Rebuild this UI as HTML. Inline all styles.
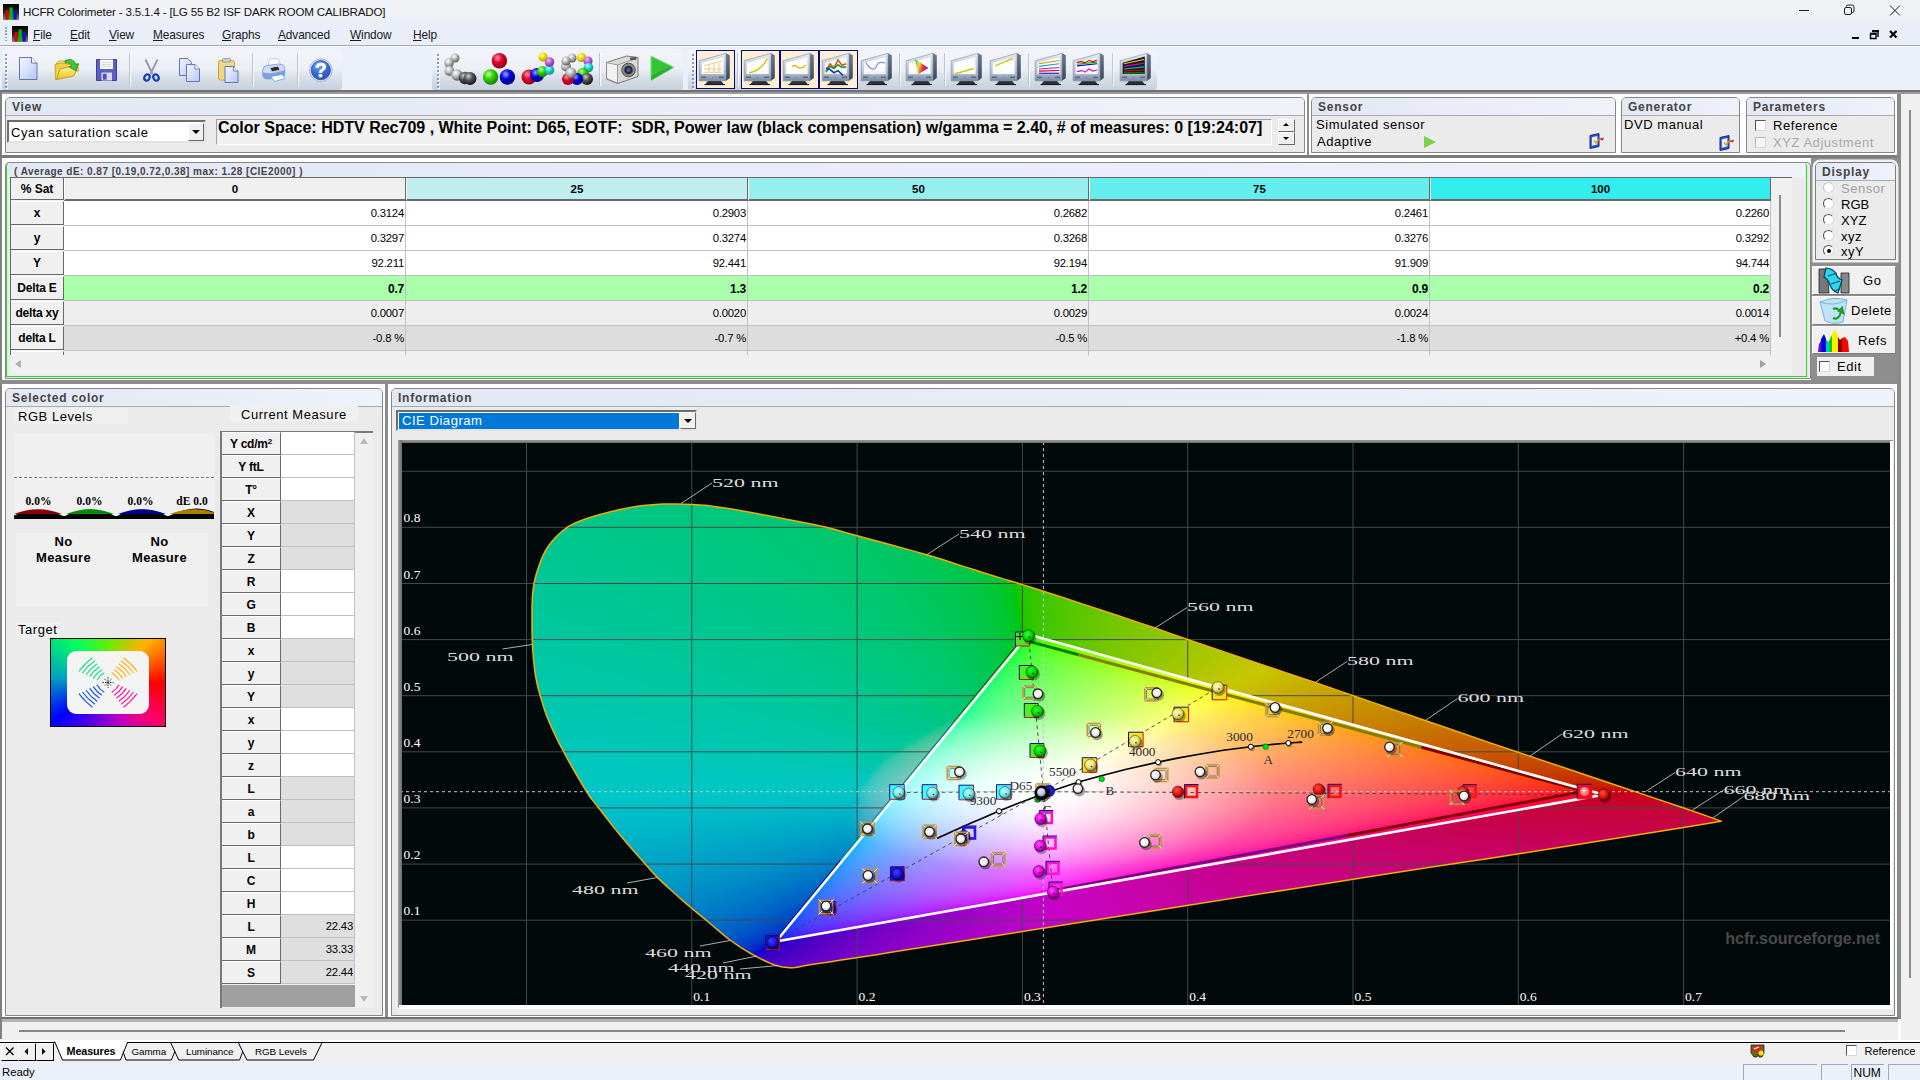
<!DOCTYPE html><html><head><meta charset="utf-8"><title>HCFR Colorimeter</title><style>
*{box-sizing:border-box;margin:0;padding:0}
html,body{width:1920px;height:1080px;overflow:hidden;background:#fff;font-family:"Liberation Sans",sans-serif;font-size:12px;color:#000}
.a{position:absolute}
.t{position:absolute;white-space:nowrap;line-height:1}
.pn{position:absolute;border:1px solid #868686;background:#ebebeb;border-radius:5px 5px 0 0;overflow:hidden}
.pn .h{position:absolute;left:0;top:0;right:0;background:linear-gradient(90deg,#e2e8f4,#eef2fb);border-bottom:1px solid #a9a9a9}
.pn .h span{position:absolute;left:6px;top:1.5px;font-weight:bold;font-size:12px;color:#444;letter-spacing:.75px;white-space:nowrap}
.b{font-weight:bold}
u{text-decoration:underline}

</style></head><body>
<div class="a" style="left:0;top:0;width:1920px;height:23px;background:linear-gradient(#f1f2f5 0,#f0f2f6 60%,#ebeff7 100%)"></div>
<svg class="a" style="left:3px;top:4px" width="16" height="16" viewBox="0 0 16 16"><defs><linearGradient id="ag3" x1="0" y1="0" x2="0" y2="1"><stop offset="0" stop-color="#000"/><stop offset=".5" stop-color="#222"/><stop offset="1" stop-color="#888"/></linearGradient></defs><rect width="16" height="16" fill="url(#ag3)"/><rect x="2.500" y="6" width="3.200" height="9.500" fill="#d00"/><rect x="6.500" y="3.500" width="3.200" height="12" fill="#0b0"/><rect x="10.500" y="6" width="3.200" height="9.500" fill="#11c"/></svg>
<div class="t" style="left:23px;top:5.600px;font-size:11.6px;letter-spacing:-.17px;color:#111">HCFR Colorimeter - 3.5.1.4 - [LG 55 B2 ISF DARK ROOM CALIBRADO]</div>
<svg class="a" style="left:1780px;top:0" width="140" height="23" viewBox="0 0 140 23"><g stroke="#222" stroke-width="1" fill="none"><path d="M19 10.5h10"/><rect x="64.5" y="7.5" width="7" height="7" rx="1.5"/><path d="M66.5 7.5v-1a1.5 1.5 0 0 1 1.5-1.5h4a2 2 0 0 1 2 2v4a1.5 1.5 0 0 1-1.5 1.5h-1"/><path d="M110 5.5l10 10M120 5.5l-10 10"/></g></svg>
<div class="a" style="left:0;top:23px;width:1920px;height:23px;background:#e9eef8;border-bottom:1px solid #a7abb3"></div>
<div class="a" style="left:0;top:46px;width:1920px;height:1px;background:#fbfcfe"></div>
<div class="a" style="left:5px;top:27.0px;width:2px;height:1.600px;background:#8fa3c8"></div>
<div class="a" style="left:5px;top:30.2px;width:2px;height:1.600px;background:#8fa3c8"></div>
<div class="a" style="left:5px;top:33.4px;width:2px;height:1.600px;background:#8fa3c8"></div>
<div class="a" style="left:5px;top:36.6px;width:2px;height:1.600px;background:#8fa3c8"></div>
<div class="a" style="left:5px;top:39.8px;width:2px;height:1.600px;background:#8fa3c8"></div>
<svg class="a" style="left:12px;top:26px" width="16" height="16" viewBox="0 0 16 16"><defs><linearGradient id="ag12" x1="0" y1="0" x2="0" y2="1"><stop offset="0" stop-color="#000"/><stop offset=".5" stop-color="#222"/><stop offset="1" stop-color="#888"/></linearGradient></defs><rect width="16" height="16" fill="url(#ag12)"/><rect x="2.500" y="6" width="3.200" height="9.500" fill="#d00"/><rect x="6.500" y="3.500" width="3.200" height="12" fill="#0b0"/><rect x="10.500" y="6" width="3.200" height="9.500" fill="#11c"/></svg>
<div class="t" style="left:33px;top:30px;font-size:11.9px;letter-spacing:-.12px;color:#1a1a1a"><u>F</u>ile</div>
<div class="t" style="left:70px;top:30px;font-size:11.9px;letter-spacing:-.12px;color:#1a1a1a"><u>E</u>dit</div>
<div class="t" style="left:109px;top:30px;font-size:11.9px;letter-spacing:-.12px;color:#1a1a1a"><u>V</u>iew</div>
<div class="t" style="left:153px;top:30px;font-size:11.9px;letter-spacing:-.12px;color:#1a1a1a"><u>M</u>easures</div>
<div class="t" style="left:222px;top:30px;font-size:11.9px;letter-spacing:-.12px;color:#1a1a1a"><u>G</u>raphs</div>
<div class="t" style="left:278px;top:30px;font-size:11.9px;letter-spacing:-.12px;color:#1a1a1a"><u>A</u>dvanced</div>
<div class="t" style="left:350px;top:30px;font-size:11.9px;letter-spacing:-.12px;color:#1a1a1a"><u>W</u>indow</div>
<div class="t" style="left:413px;top:30px;font-size:11.9px;letter-spacing:-.12px;color:#1a1a1a"><u>H</u>elp</div>
<svg class="a" style="left:1845px;top:25px" width="70" height="20" viewBox="0 0 70 20"><g fill="none" stroke="#000"><path d="M7 13h7" stroke-width="2"/><path d="M27.5 6.5h5.5v5.5M25.5 9v4.5h5.500v-4.500z" stroke-width="1.4"/><path d="M27 6h7" stroke-width="2"/><path d="M25 8.500h6.500" stroke-width="1.6"/><path d="M45 6l6.500 6.500M51.500 6l-6.500 6.500" stroke-width="2.2"/></g></svg>
<svg width="0" height="0" style="position:absolute"><defs><radialGradient id="sgy" cx=".38" cy=".32" r=".7"><stop offset="0" stop-color="#ffffff"/><stop offset=".45" stop-color="#bdbdbd"/><stop offset="1" stop-color="#5a5a5a"/></radialGradient><radialGradient id="sdk" cx=".38" cy=".32" r=".7"><stop offset="0" stop-color="#cfcfcf"/><stop offset=".45" stop-color="#555"/><stop offset="1" stop-color="#111"/></radialGradient><radialGradient id="srd" cx=".38" cy=".32" r=".7"><stop offset="0" stop-color="#ff9aa8"/><stop offset=".45" stop-color="#e0002a"/><stop offset="1" stop-color="#8a0016"/></radialGradient><radialGradient id="sgn" cx=".38" cy=".32" r=".7"><stop offset="0" stop-color="#c8ff9a"/><stop offset=".45" stop-color="#2fd000"/><stop offset="1" stop-color="#1a7a00"/></radialGradient><radialGradient id="sbl" cx=".38" cy=".32" r=".7"><stop offset="0" stop-color="#9aa8ff"/><stop offset=".45" stop-color="#0000e0"/><stop offset="1" stop-color="#00007a"/></radialGradient><radialGradient id="syl" cx=".38" cy=".32" r=".7"><stop offset="0" stop-color="#ffffc0"/><stop offset=".45" stop-color="#f0e000"/><stop offset="1" stop-color="#a89800"/></radialGradient><radialGradient id="spu" cx=".38" cy=".32" r=".7"><stop offset="0" stop-color="#f0c0ff"/><stop offset=".45" stop-color="#c060e0"/><stop offset="1" stop-color="#7a2a99"/></radialGradient><radialGradient id="scy" cx=".38" cy=".32" r=".7"><stop offset="0" stop-color="#c0ffff"/><stop offset=".45" stop-color="#20d8d8"/><stop offset="1" stop-color="#0a8a8a"/></radialGradient><linearGradient id="mf" x1="0" y1="0" x2="0" y2="1"><stop offset="0" stop-color="#e9eef6"/><stop offset=".75" stop-color="#aab8cc"/><stop offset="1" stop-color="#7888a2"/></linearGradient><linearGradient id="ms" x1="0" y1="0" x2="0" y2="1"><stop offset="0" stop-color="#6c7b92"/><stop offset="1" stop-color="#39455a"/></linearGradient><linearGradient id="tbg" x1="0" y1="0" x2="0" y2="1"><stop offset="0" stop-color="#f1f4fa"/><stop offset=".55" stop-color="#e3e8f1"/><stop offset="1" stop-color="#c3ccdb"/></linearGradient><linearGradient id="doc" x1="0" y1="0" x2="1" y2="1"><stop offset="0" stop-color="#f6f8ff"/><stop offset="1" stop-color="#b4c8f6"/></linearGradient><linearGradient id="fold" x1="0" y1="0" x2="0" y2="1"><stop offset="0" stop-color="#fff8b8"/><stop offset="1" stop-color="#f4c410"/></linearGradient><radialGradient id="hlp" cx=".4" cy=".25" r=".8"><stop offset="0" stop-color="#7ea6f2"/><stop offset=".55" stop-color="#356bd6"/><stop offset="1" stop-color="#2450b4"/></radialGradient></defs></svg>
<div class="a" style="left:0;top:47px;width:1920px;height:44px;background:#ebeff9"></div>
<div class="a" style="left:2px;top:49px;width:340px;height:41px;border-radius:4px 6px 3px 3px;background:linear-gradient(#f2f4f9 0,#eceff5 50%,#e0e5ed 60%,#c6cfdd 100%)"></div>
<div class="a" style="left:432px;top:49px;width:251px;height:41px;border-radius:4px 6px 3px 3px;background:linear-gradient(#f2f4f9 0,#eceff5 50%,#e0e5ed 60%,#c6cfdd 100%)"></div>
<div class="a" style="left:688px;top:49px;width:469px;height:41px;border-radius:4px 6px 3px 3px;background:linear-gradient(#f2f4f9 0,#eceff5 50%,#e0e5ed 60%,#c6cfdd 100%)"></div>
<div class="a" style="left:5px;top:53.5px;width:2px;height:2px;background:#7f9bcb;box-shadow:1px 1px 0 #fff"></div>
<div class="a" style="left:5px;top:57.5px;width:2px;height:2px;background:#7f9bcb;box-shadow:1px 1px 0 #fff"></div>
<div class="a" style="left:5px;top:61.5px;width:2px;height:2px;background:#7f9bcb;box-shadow:1px 1px 0 #fff"></div>
<div class="a" style="left:5px;top:65.5px;width:2px;height:2px;background:#7f9bcb;box-shadow:1px 1px 0 #fff"></div>
<div class="a" style="left:5px;top:69.5px;width:2px;height:2px;background:#7f9bcb;box-shadow:1px 1px 0 #fff"></div>
<div class="a" style="left:5px;top:73.5px;width:2px;height:2px;background:#7f9bcb;box-shadow:1px 1px 0 #fff"></div>
<div class="a" style="left:5px;top:77.5px;width:2px;height:2px;background:#7f9bcb;box-shadow:1px 1px 0 #fff"></div>
<div class="a" style="left:5px;top:81.5px;width:2px;height:2px;background:#7f9bcb;box-shadow:1px 1px 0 #fff"></div>
<div class="a" style="left:5px;top:85.5px;width:2px;height:2px;background:#7f9bcb;box-shadow:1px 1px 0 #fff"></div>
<div class="a" style="left:437px;top:53.5px;width:2px;height:2px;background:#7f9bcb;box-shadow:1px 1px 0 #fff"></div>
<div class="a" style="left:437px;top:57.5px;width:2px;height:2px;background:#7f9bcb;box-shadow:1px 1px 0 #fff"></div>
<div class="a" style="left:437px;top:61.5px;width:2px;height:2px;background:#7f9bcb;box-shadow:1px 1px 0 #fff"></div>
<div class="a" style="left:437px;top:65.5px;width:2px;height:2px;background:#7f9bcb;box-shadow:1px 1px 0 #fff"></div>
<div class="a" style="left:437px;top:69.5px;width:2px;height:2px;background:#7f9bcb;box-shadow:1px 1px 0 #fff"></div>
<div class="a" style="left:437px;top:73.5px;width:2px;height:2px;background:#7f9bcb;box-shadow:1px 1px 0 #fff"></div>
<div class="a" style="left:437px;top:77.5px;width:2px;height:2px;background:#7f9bcb;box-shadow:1px 1px 0 #fff"></div>
<div class="a" style="left:437px;top:81.5px;width:2px;height:2px;background:#7f9bcb;box-shadow:1px 1px 0 #fff"></div>
<div class="a" style="left:437px;top:85.5px;width:2px;height:2px;background:#7f9bcb;box-shadow:1px 1px 0 #fff"></div>
<div class="a" style="left:692px;top:53.5px;width:2px;height:2px;background:#7f9bcb;box-shadow:1px 1px 0 #fff"></div>
<div class="a" style="left:692px;top:57.5px;width:2px;height:2px;background:#7f9bcb;box-shadow:1px 1px 0 #fff"></div>
<div class="a" style="left:692px;top:61.5px;width:2px;height:2px;background:#7f9bcb;box-shadow:1px 1px 0 #fff"></div>
<div class="a" style="left:692px;top:65.5px;width:2px;height:2px;background:#7f9bcb;box-shadow:1px 1px 0 #fff"></div>
<div class="a" style="left:692px;top:69.5px;width:2px;height:2px;background:#7f9bcb;box-shadow:1px 1px 0 #fff"></div>
<div class="a" style="left:692px;top:73.5px;width:2px;height:2px;background:#7f9bcb;box-shadow:1px 1px 0 #fff"></div>
<div class="a" style="left:692px;top:77.5px;width:2px;height:2px;background:#7f9bcb;box-shadow:1px 1px 0 #fff"></div>
<div class="a" style="left:692px;top:81.5px;width:2px;height:2px;background:#7f9bcb;box-shadow:1px 1px 0 #fff"></div>
<div class="a" style="left:692px;top:85.5px;width:2px;height:2px;background:#7f9bcb;box-shadow:1px 1px 0 #fff"></div>
<div class="a" style="left:128.5px;top:53px;width:1px;height:33px;background:#bcc4d3"></div><div class="a" style="left:129.5px;top:53px;width:1px;height:33px;background:#fafbfe"></div>
<div class="a" style="left:251.5px;top:53px;width:1px;height:33px;background:#bcc4d3"></div><div class="a" style="left:252.5px;top:53px;width:1px;height:33px;background:#fafbfe"></div>
<div class="a" style="left:296.5px;top:53px;width:1px;height:33px;background:#bcc4d3"></div><div class="a" style="left:297.5px;top:53px;width:1px;height:33px;background:#fafbfe"></div>
<div class="a" style="left:598.5px;top:53px;width:1px;height:33px;background:#bcc4d3"></div><div class="a" style="left:599.5px;top:53px;width:1px;height:33px;background:#fafbfe"></div>
<div class="a" style="left:736.5px;top:53px;width:1px;height:33px;background:#bcc4d3"></div><div class="a" style="left:737.5px;top:53px;width:1px;height:33px;background:#fafbfe"></div>
<div class="a" style="left:898.5px;top:53px;width:1px;height:33px;background:#bcc4d3"></div><div class="a" style="left:899.5px;top:53px;width:1px;height:33px;background:#fafbfe"></div>
<div class="a" style="left:943.5px;top:53px;width:1px;height:33px;background:#bcc4d3"></div><div class="a" style="left:944.5px;top:53px;width:1px;height:33px;background:#fafbfe"></div>
<div class="a" style="left:1027.5px;top:53px;width:1px;height:33px;background:#bcc4d3"></div><div class="a" style="left:1028.5px;top:53px;width:1px;height:33px;background:#fafbfe"></div>
<div class="a" style="left:1112px;top:53px;width:1px;height:33px;background:#bcc4d3"></div><div class="a" style="left:1113px;top:53px;width:1px;height:33px;background:#fafbfe"></div>
<svg class="a" style="left:0;top:47px" width="345" height="44" viewBox="0 47 345 44"><path d="M19.500 57.500h12l5.500 5.500v16.500h-17.500z" fill="url(#doc)" stroke="#6672b8" stroke-width="1"/><path d="M31.500 57.500v5.500h5.500" fill="#fff" stroke="#6672b8" stroke-width="1"/><path d="M56 63.500l3-2.500h7l2 2h8v5z" fill="#fbe680" stroke="#c09a18" stroke-width=".8"/><path d="M55.500 79.500l-.5-15 6-1.500 16.500 2.500 1.200 5z" fill="#f3cf4a" stroke="#c09a18" stroke-width=".8"/><path d="M56.500 79.500l3.500-10.500 18.800-4.500-5 11.500z" fill="url(#fold)" stroke="#b08a10" stroke-width=".8"/><path d="M65 60.500q8-3.500 11 4l2.500-1-2.800 7.200-6.700-3.700 2.800-1q-2-4-6.800-3z" fill="#3cc43c" stroke="#1a8a1a" stroke-width=".7"/><path d="M96.500 59.500h20v21h-20z" fill="#5a5fc4" stroke="#3a3f9a" stroke-width="1"/><rect x="100" y="59.500" width="13" height="9.500" fill="#f8f8f8"/><path d="M101.500 62.500h10M101.500 64.500h10M101.500 66.500h10" stroke="#c4c4c8" stroke-width=".6"/><rect x="101.500" y="72.500" width="10.500" height="8" fill="#d8d8e2"/><rect x="103" y="73.800" width="3.600" height="5.800" fill="#4a4fb0"/><path d="M145.500 59.500l7 14.500M157.500 59.500l-7 14.500" stroke="#8f99ad" stroke-width="1.800" fill="none"/><ellipse cx="147" cy="77.500" rx="2.600" ry="3.200" fill="none" stroke="#1240b0" stroke-width="2.200" transform="rotate(25 147 77.500)"/><ellipse cx="156" cy="77.500" rx="2.600" ry="3.200" fill="none" stroke="#1240b0" stroke-width="2.200" transform="rotate(-25 156 77.500)"/><path d="M179.500 58.500h8l4 4v13h-12z" fill="url(#doc)" stroke="#6672b8" stroke-width="1"/><path d="M186.500 64.500h8.500l4.500 4.500v12.500h-13z" fill="url(#doc)" stroke="#6672b8" stroke-width="1"/><path d="M195 64.500v4.500h4.500" fill="#fff" stroke="#6672b8" stroke-width=".9"/><rect x="218.500" y="60.500" width="16" height="19.500" rx="2" fill="#f0d880" stroke="#c0a030" stroke-width="1"/><rect x="222.500" y="58.500" width="8" height="3.600" rx="1" fill="#c9ccd4" stroke="#8a8f9c" stroke-width=".8"/><path d="M225 66.500h8.500l4.500 4.500v11.500h-13z" fill="url(#doc)" stroke="#6672b8" stroke-width="1"/><path d="M233.500 66.500v4.500h4.500" fill="#fff" stroke="#6672b8" stroke-width=".9"/><path d="M268 66.500l1.500-7.500h9l2.500 7z" fill="#fdfeff" stroke="#b4c4e0" stroke-width=".8"/><path d="M262.800 70q0-3.500 4-4.500l12-1.500q5 0 6 3.500v6q0 3-3.500 3.500l-13 1.500q-5 0-5.500-3.500z" fill="#cfddf7" stroke="#7f9fdc" stroke-width=".9"/><path d="M262.800 72q5 3.500 22 -2v4.500q0 3-3.500 3.500l-13 1.500q-5 0-5.500-3.500z" fill="#7f9fdc"/><path d="M270.500 68l7.500-1.500 1.500 3.500-7.500 1.500z" fill="#2a2a2a"/><path d="M269.500 67.500l9-1.800 2 4.500-9 1.800z" fill="none" stroke="#c8c8c8" stroke-width=".8"/><path d="M271 76.500l11-2 3 4-10.500 3z" fill="#fff" stroke="#5ab4e8" stroke-width=".9"/><circle cx="320.800" cy="70.200" r="11.300" fill="#e8eefb" stroke="#9fb2d8" stroke-width="1"/><circle cx="320.800" cy="70.200" r="9.600" fill="url(#hlp)" stroke="#2a4fa6" stroke-width=".8"/><text x="320.800" y="77" font-family="Liberation Sans" font-weight="bold" font-size="19.500" fill="#fff" text-anchor="middle" stroke="#fff" stroke-width=".5">?</text></svg>
<svg class="a" style="left:430px;top:47px" width="260" height="44" viewBox="430 47 260 44"><circle cx="455" cy="58" r="4.5" fill="url(#sgy)"/><circle cx="449" cy="63" r="4.8" fill="url(#sgy)"/><circle cx="449.5" cy="71" r="5" fill="url(#sgy)"/><circle cx="457" cy="75" r="5.8" fill="url(#sgy)"/><circle cx="465" cy="78" r="6.2" fill="url(#sdk)"/><circle cx="470" cy="78.5" r="6.5" fill="url(#sdk)"/><circle cx="499.4" cy="60.7" r="7.7" fill="url(#srd)"/><circle cx="490.6" cy="77" r="7.7" fill="url(#sgn)"/><circle cx="507.4" cy="77" r="7.7" fill="url(#sbl)"/><circle cx="529" cy="77" r="7.5" fill="url(#srd)"/><circle cx="537" cy="75" r="7" fill="url(#sbl)"/><circle cx="542.5" cy="71.5" r="5.5" fill="url(#sgn)"/><circle cx="549.5" cy="70" r="4.8" fill="url(#scy)"/><circle cx="549.5" cy="62" r="4.8" fill="url(#spu)"/><circle cx="543" cy="57" r="4.6" fill="url(#syl)"/><circle cx="572" cy="58" r="4.5" fill="url(#sgy)"/><circle cx="581.5" cy="57.5" r="4.6" fill="url(#syl)"/><circle cx="588" cy="61" r="4.6" fill="url(#spu)"/><circle cx="588.5" cy="67.5" r="4.8" fill="url(#scy)"/><circle cx="583" cy="73.5" r="5.8" fill="url(#sgn)"/><circle cx="587" cy="79" r="6" fill="url(#sdk)"/><circle cx="577" cy="79" r="6" fill="url(#sbl)"/><circle cx="568" cy="79" r="6" fill="url(#srd)"/><circle cx="566" cy="66.5" r="5" fill="url(#sgy)"/><circle cx="571" cy="73" r="5.5" fill="url(#sgy)"/><circle cx="566" cy="61" r="4.6" fill="url(#sgy)"/><path d="M606.500 62.500l20-6.500 11.500 1.500v19l-20.500 7-11-4.500z" fill="#d9d9d9" stroke="#6a6a6a" stroke-width=".9"/><path d="M606.500 62.500l11 2.500v18l-11-4.500z" fill="#f1f1f1" stroke="#7a7a7a" stroke-width=".7"/><path d="M617.500 65l20.500-7.500" stroke="#7a7a7a" stroke-width=".7"/><rect x="630" y="57.200" width="6" height="3" fill="#555" transform="rotate(-8 633 58)"/><circle cx="628.500" cy="70" r="6.800" fill="#8a8a8a" stroke="#444" stroke-width=".9"/><circle cx="628.500" cy="70" r="4.300" fill="#2a2a2a"/><circle cx="628.500" cy="70" r="2" fill="#2a60d0"/><path d="M651 56l22.500 11-22.500 13.500z" fill="#35c435" stroke="#7fe07f" stroke-width="1"/><path d="M651 76l19-9 3.500 1-22.500 12.500z" fill="#1f9a1f" opacity=".55"/></svg>
<div class="a" style="left:696px;top:50px;width:39px;height:39px;background:#fdefd2;border:1px solid #0a0a80"></div>
<div class="a" style="left:741px;top:50px;width:39px;height:39px;background:#fdefd2;border:1px solid #0a0a80"></div>
<div class="a" style="left:780px;top:50px;width:39px;height:39px;background:#fdefd2;border:1px solid #0a0a80"></div>
<div class="a" style="left:819px;top:50px;width:39px;height:39px;background:#fdefd2;border:1px solid #0a0a80"></div>
<svg width="0" height="0" style="position:absolute"><defs><linearGradient id="tri" x1="0" y1="0" x2="1" y2=".3"><stop offset="0" stop-color="#00c030"/><stop offset=".35" stop-color="#e0e040" stop-opacity=".9"/><stop offset=".7" stop-color="#e03030"/><stop offset="1" stop-color="#c000c0"/></linearGradient></defs></svg>
<svg class="a" style="left:698px;top:50.8px" width="34" height="36" viewBox="0 0 34 34" preserveAspectRatio="none"><path d="M10 28h13l2.500 3.200h-18z" fill="#2c2f36"/><path d="M6.500 31.200h20.500v1h-20.500z" fill="#15171b"/><path d="M28 2.200l3.800 1.800v21.500l-3.800 2.700z" fill="url(#ms)"/><path d="M1.200 9.200L28 2.200v26H1.200z" fill="url(#mf)" stroke="#7d8ba3" stroke-width=".6"/><path d="M3.600 11L25.800 5.200v16.600H3.600z" fill="#fdfdfd" stroke="#c9d0dc" stroke-width=".5"/><path d="M3 24.800h5M21 24.800h5" stroke="#5d6a80" stroke-width="1.400"/><circle cx="14.500" cy="25" r=".7" fill="#6a7890"/><g stroke="#f2c98a" stroke-width="1" fill="none"><path d="M6 14l18-4.500M6 17h18M6 20h18M11 12.500v8M16 11.300v9M21 10v10.500"/></g></svg>
<svg class="a" style="left:743px;top:50.8px" width="34" height="36" viewBox="0 0 34 34" preserveAspectRatio="none"><path d="M10 28h13l2.500 3.200h-18z" fill="#2c2f36"/><path d="M6.500 31.200h20.500v1h-20.500z" fill="#15171b"/><path d="M28 2.200l3.800 1.800v21.500l-3.800 2.700z" fill="url(#ms)"/><path d="M1.200 9.200L28 2.200v26H1.200z" fill="url(#mf)" stroke="#7d8ba3" stroke-width=".6"/><path d="M3.600 11L25.800 5.200v16.600H3.600z" fill="#fdfdfd" stroke="#c9d0dc" stroke-width=".5"/><path d="M3 24.800h5M21 24.800h5" stroke="#5d6a80" stroke-width="1.400"/><circle cx="14.500" cy="25" r=".7" fill="#6a7890"/><path d="M6 20.500q12-1.500 18.500-13.500" stroke="#d4c400" stroke-width="1.300" fill="none"/></svg>
<svg class="a" style="left:782px;top:50.8px" width="34" height="36" viewBox="0 0 34 34" preserveAspectRatio="none"><path d="M10 28h13l2.500 3.200h-18z" fill="#2c2f36"/><path d="M6.500 31.200h20.500v1h-20.500z" fill="#15171b"/><path d="M28 2.200l3.800 1.800v21.500l-3.800 2.700z" fill="url(#ms)"/><path d="M1.200 9.200L28 2.200v26H1.200z" fill="url(#mf)" stroke="#7d8ba3" stroke-width=".6"/><path d="M3.600 11L25.800 5.200v16.600H3.600z" fill="#fdfdfd" stroke="#c9d0dc" stroke-width=".5"/><path d="M3 24.800h5M21 24.800h5" stroke="#5d6a80" stroke-width="1.400"/><circle cx="14.500" cy="25" r=".7" fill="#6a7890"/><path d="M10 15q2-2.500 4.500-.5t5 1.500 4.500-3" stroke="#d4c400" stroke-width="1.300" fill="none"/></svg>
<svg class="a" style="left:821px;top:50.8px" width="34" height="36" viewBox="0 0 34 34" preserveAspectRatio="none"><path d="M10 28h13l2.500 3.200h-18z" fill="#2c2f36"/><path d="M6.500 31.200h20.500v1h-20.500z" fill="#15171b"/><path d="M28 2.200l3.800 1.800v21.500l-3.800 2.700z" fill="url(#ms)"/><path d="M1.200 9.200L28 2.200v26H1.200z" fill="url(#mf)" stroke="#7d8ba3" stroke-width=".6"/><path d="M3.600 11L25.800 5.200v16.600H3.600z" fill="#fdfdfd" stroke="#c9d0dc" stroke-width=".5"/><path d="M3 24.800h5M21 24.800h5" stroke="#5d6a80" stroke-width="1.400"/><circle cx="14.500" cy="25" r=".7" fill="#6a7890"/><path d="M5 19l4-7 4 4 4-7.500 4 5 4-1.500" stroke="#e0501a" stroke-width="1.500" fill="none"/><path d="M5 20l4-5.500 4 2 4-3.500 4 2.500 4-.5" stroke="#1a9a2a" stroke-width="1.500" fill="none"/><path d="M5 16l4 1.500 4 3 4-2 5 4.500" stroke="#1038b0" stroke-width="1.500" fill="none"/></svg>
<svg class="a" style="left:860px;top:50.8px" width="34" height="36" viewBox="0 0 34 34" preserveAspectRatio="none"><path d="M10 28h13l2.500 3.200h-18z" fill="#2c2f36"/><path d="M6.500 31.200h20.500v1h-20.500z" fill="#15171b"/><path d="M28 2.200l3.800 1.800v21.500l-3.800 2.700z" fill="url(#ms)"/><path d="M1.200 9.200L28 2.200v26H1.200z" fill="url(#mf)" stroke="#7d8ba3" stroke-width=".6"/><path d="M3.600 11L25.800 5.200v16.600H3.600z" fill="#fdfdfd" stroke="#c9d0dc" stroke-width=".5"/><path d="M3 24.800h5M21 24.800h5" stroke="#5d6a80" stroke-width="1.400"/><circle cx="14.500" cy="25" r=".7" fill="#6a7890"/><path d="M6 11q3 5 6 6t5-3.500 8-2" stroke="#8a7ae0" stroke-width="1" fill="none"/><path d="M6 20h19" stroke="#ddd" stroke-width=".7"/></svg>
<svg class="a" style="left:905px;top:50.8px" width="34" height="36" viewBox="0 0 34 34" preserveAspectRatio="none"><path d="M10 28h13l2.500 3.200h-18z" fill="#2c2f36"/><path d="M6.500 31.200h20.500v1h-20.500z" fill="#15171b"/><path d="M28 2.200l3.800 1.800v21.500l-3.800 2.700z" fill="url(#ms)"/><path d="M1.200 9.200L28 2.200v26H1.200z" fill="url(#mf)" stroke="#7d8ba3" stroke-width=".6"/><path d="M3.600 11L25.800 5.200v16.600H3.600z" fill="#fdfdfd" stroke="#c9d0dc" stroke-width=".5"/><path d="M3 24.800h5M21 24.800h5" stroke="#5d6a80" stroke-width="1.400"/><circle cx="14.500" cy="25" r=".7" fill="#6a7890"/><path d="M10 7.500l13.500 8.500-10.500 6z" fill="#fff"/><path d="M10 7.500l13.500 8.500-10.500 6z" fill="url(#tri)"/></svg>
<svg class="a" style="left:950px;top:50.8px" width="34" height="36" viewBox="0 0 34 34" preserveAspectRatio="none"><path d="M10 28h13l2.500 3.200h-18z" fill="#2c2f36"/><path d="M6.500 31.200h20.500v1h-20.500z" fill="#15171b"/><path d="M28 2.200l3.800 1.800v21.500l-3.800 2.700z" fill="url(#ms)"/><path d="M1.200 9.200L28 2.200v26H1.200z" fill="url(#mf)" stroke="#7d8ba3" stroke-width=".6"/><path d="M3.600 11L25.800 5.200v16.600H3.600z" fill="#fdfdfd" stroke="#c9d0dc" stroke-width=".5"/><path d="M3 24.800h5M21 24.800h5" stroke="#5d6a80" stroke-width="1.400"/><circle cx="14.500" cy="25" r=".7" fill="#6a7890"/><path d="M5 21.500l19-5" stroke="#d4c400" stroke-width="1.400" fill="none"/></svg>
<svg class="a" style="left:989px;top:50.8px" width="34" height="36" viewBox="0 0 34 34" preserveAspectRatio="none"><path d="M10 28h13l2.500 3.200h-18z" fill="#2c2f36"/><path d="M6.500 31.200h20.500v1h-20.500z" fill="#15171b"/><path d="M28 2.200l3.800 1.800v21.500l-3.800 2.700z" fill="url(#ms)"/><path d="M1.200 9.200L28 2.200v26H1.200z" fill="url(#mf)" stroke="#7d8ba3" stroke-width=".6"/><path d="M3.600 11L25.800 5.200v16.600H3.600z" fill="#fdfdfd" stroke="#c9d0dc" stroke-width=".5"/><path d="M3 24.800h5M21 24.800h5" stroke="#5d6a80" stroke-width="1.400"/><circle cx="14.500" cy="25" r=".7" fill="#6a7890"/><path d="M6 14l18-7" stroke="#d4c400" stroke-width="1.400" fill="none"/></svg>
<svg class="a" style="left:1034px;top:50.8px" width="34" height="36" viewBox="0 0 34 34" preserveAspectRatio="none"><path d="M10 28h13l2.500 3.200h-18z" fill="#2c2f36"/><path d="M6.500 31.200h20.500v1h-20.500z" fill="#15171b"/><path d="M28 2.200l3.800 1.800v21.500l-3.800 2.700z" fill="url(#ms)"/><path d="M1.200 9.200L28 2.200v26H1.200z" fill="url(#mf)" stroke="#7d8ba3" stroke-width=".6"/><path d="M3.600 11L25.800 5.200v16.600H3.600z" fill="#fdfdfd" stroke="#c9d0dc" stroke-width=".5"/><path d="M3 24.800h5M21 24.800h5" stroke="#5d6a80" stroke-width="1.400"/><circle cx="14.500" cy="25" r=".7" fill="#6a7890"/><g stroke-width="1" fill="none"><path d="M5 12l20-3" stroke="#e08a00"/><path d="M5 14.500l20-2.500" stroke="#00b0b0"/><path d="M5 17l20-1.500" stroke="#e000e0"/><path d="M5 19l20-.5" stroke="#d00"/><path d="M5 21h20" stroke="#00c"/></g></svg>
<svg class="a" style="left:1072px;top:50.8px" width="34" height="36" viewBox="0 0 34 34" preserveAspectRatio="none"><path d="M10 28h13l2.500 3.200h-18z" fill="#2c2f36"/><path d="M6.500 31.200h20.500v1h-20.500z" fill="#15171b"/><path d="M28 2.200l3.800 1.800v21.500l-3.800 2.700z" fill="url(#ms)"/><path d="M1.200 9.200L28 2.200v26H1.200z" fill="url(#mf)" stroke="#7d8ba3" stroke-width=".6"/><path d="M3.600 11L25.800 5.200v16.600H3.600z" fill="#fdfdfd" stroke="#c9d0dc" stroke-width=".5"/><path d="M3 24.800h5M21 24.800h5" stroke="#5d6a80" stroke-width="1.400"/><circle cx="14.500" cy="25" r=".7" fill="#6a7890"/><g stroke-width="1.100" fill="none"><path d="M5 11l4-1 4 1 4-2 4 1 4-1.500" stroke="#d00"/><path d="M5 12.500l20-2" stroke="#0a0"/><path d="M5 14l20-2" stroke="#00c"/><path d="M5 19.500l5-1 3 1.500 4-3 4 2 4-1" stroke="#e000e0"/></g></svg>
<svg class="a" style="left:1119px;top:50.8px" width="34" height="36" viewBox="0 0 34 34" preserveAspectRatio="none"><path d="M10 28h13l2.500 3.200h-18z" fill="#2c2f36"/><path d="M6.500 31.200h20.500v1h-20.500z" fill="#15171b"/><path d="M28 2.200l3.800 1.800v21.500l-3.800 2.700z" fill="url(#ms)"/><path d="M1.200 9.200L28 2.200v26H1.200z" fill="url(#mf)" stroke="#7d8ba3" stroke-width=".6"/><path d="M3.600 11L25.800 5.200v16.600H3.600z" fill="#fdfdfd" stroke="#c9d0dc" stroke-width=".5"/><path d="M3 24.800h5M21 24.800h5" stroke="#5d6a80" stroke-width="1.400"/><circle cx="14.500" cy="25" r=".7" fill="#6a7890"/><path d="M3.600 11L25.800 5.200v16.600H3.600z" fill="#1a1a1a"/><g stroke-width="1" fill="none"><path d="M5 12l20-4" stroke="#e0d000"/><path d="M5 14.500l20-3" stroke="#e000e0"/><path d="M5 17l20-2" stroke="#00c0c0"/><path d="M5 19l20-1" stroke="#d00"/><path d="M5 20.700h20" stroke="#0a0"/></g></svg>
<div class="a" style="left:0;top:90px;width:1920px;height:2px;background:#717171"></div>
<div class="a" style="left:0;top:92px;width:1920px;height:2px;background:#9b9b9b"></div>
<div class="a" style="left:0;top:94px;width:1898px;height:986px;background:#fff"></div>
<div class="a" style="left:0;top:92px;width:2px;height:950px;background:#808080"></div>
<div class="pn" style="left:5px;top:97px;width:1300px;height:56px;"><div class="h" style="height:17.5px"><span>View</span></div></div>
<div class="a" style="left:7px;top:120px;width:199px;height:23px;background:#fff;border:2px solid;border-color:#6d6d6d #e3e3e3 #e3e3e3 #6d6d6d"></div>
<div class="t" style="left:11px;top:126px;font-size:13px;letter-spacing:.6px">Cyan saturation scale</div>
<div class="a" style="left:188px;top:123px;width:16px;height:18px;background:#f0f0f0;border:1px solid;border-color:#fff #696969 #696969 #fff"></div>
<div class="a" style="left:192px;top:130px;width:0;height:0;border-left:4px solid transparent;border-right:4px solid transparent;border-top:4px solid #000"></div>
<div class="a" style="left:216px;top:119px;width:1056px;height:26px;background:#f0f0f0;border:1px solid;border-color:#a0a0a0 #fff #fff #a0a0a0"></div>
<div class="t b" style="left:218px;top:120px;font-size:16px">Color Space: HDTV Rec709 , White Point: D65, EOTF:&nbsp; SDR, Power law (black compensation) w/gamma = 2.40, # of measures: 0 [19:24:07]</div>
<div class="a" style="left:1278px;top:119px;width:17px;height:13px;background:#f0f0f0;border:1px solid;border-color:#fff #696969 #696969 #fff"></div>
<div class="a" style="left:1283px;top:123px;width:0;height:0;border-left:3px solid transparent;border-right:3px solid transparent;border-bottom:3px solid #000"></div>
<div class="a" style="left:1278px;top:132px;width:17px;height:13px;background:#f0f0f0;border:1px solid;border-color:#fff #696969 #696969 #fff"></div>
<div class="a" style="left:1283px;top:137px;width:0;height:0;border-left:3px solid transparent;border-right:3px solid transparent;border-top:3px solid #000"></div>
<div class="a" style="left:1307px;top:94px;width:2px;height:62px;background:#8a8a8a"></div>
<div class="pn" style="left:1311px;top:97px;width:305px;height:56px;"><div class="h" style="height:17.5px"><span>Sensor</span></div></div>
<div class="t" style="left:1316px;top:118px;font-size:13px;letter-spacing:.55px">Simulated sensor</div>
<div class="t" style="left:1317px;top:135px;font-size:13px;letter-spacing:.55px">Adaptive</div>
<div class="a" style="left:1424px;top:136px;width:0;height:0;border-top:6px solid transparent;border-bottom:6px solid transparent;border-left:12px solid #7ad24a"></div>
<svg class="a" style="left:1587px;top:132px" width="18" height="18" viewBox="0 0 18 18"><path d="M3 3.500l9-2v13l-9 2z" fill="#2a50c8" stroke="#142a80" stroke-width="1"/><path d="M4.800 5.200l5.600-1.200v8.600l-5.600 1.200z" fill="#e9eefc"/><path d="M7 8.500l2 2.500 4-5" stroke="#e0a000" stroke-width="1.300" fill="none"/><path d="M11 7l6-1.500-1 3z" fill="#d03030"/></svg>
<div class="pn" style="left:1621px;top:97px;width:119px;height:56px;"><div class="h" style="height:17.5px"><span>Generator</span></div></div>
<div class="t" style="left:1624px;top:118px;font-size:13px;letter-spacing:.55px">DVD manual</div>
<svg class="a" style="left:1717px;top:134px" width="18" height="18" viewBox="0 0 18 18"><path d="M3 3.500l9-2v13l-9 2z" fill="#2a50c8" stroke="#142a80" stroke-width="1"/><path d="M4.800 5.200l5.600-1.200v8.600l-5.600 1.200z" fill="#e9eefc"/><path d="M7 8.500l2 2.500 4-5" stroke="#e0a000" stroke-width="1.300" fill="none"/><path d="M11 7l6-1.500-1 3z" fill="#d03030"/></svg>
<div class="pn" style="left:1746px;top:97px;width:149px;height:56px;"><div class="h" style="height:17.5px"><span>Parameters</span></div></div>
<div class="a" style="left:1755px;top:120px;width:11px;height:11px;background:#fff;border:1px solid #555;border-right-color:#d8d8d8;border-bottom-color:#d8d8d8"></div>
<div class="t" style="left:1773px;top:119px;font-size:13px;letter-spacing:.55px">Reference</div>
<div class="a" style="left:1755px;top:137px;width:11px;height:11px;background:#f4f4f4;border:1px solid #b8b8b8;border-right-color:#d8d8d8;border-bottom-color:#d8d8d8"></div>
<div class="t" style="left:1773px;top:136px;font-size:13px;letter-spacing:.55px;color:#a8a8a8">XYZ Adjustment</div>
<div class="a" style="left:0;top:155px;width:1898px;height:3px;background:#7b7b7b"></div>
<div class="a" style="left:1897px;top:94px;width:4px;height:925px;background:#8a8a8a"></div>
<div class="a" style="left:1901px;top:94px;width:19px;height:948px;background:#f0f0f0"></div>
<div class="a" style="left:1909px;top:110px;width:2px;height:868px;background:#8a8a8a"></div>
<div class="a" style="left:5px;top:162px;width:1806px;height:217px;border:1px solid #868686;border-radius:4px 4px 0 0;background:#ebebeb"></div>
<div class="a" style="left:6px;top:163px;width:1801px;height:214px;border:1px solid #22dd22;border-top:none;border-radius:4px 4px 0 0"></div>
<div class="a" style="left:8px;top:163px;width:1797px;height:14px;background:linear-gradient(90deg,#e2e8f4,#eef2fb)"></div>
<div class="t b" style="left:14px;top:167px;font-size:10px;color:#444;letter-spacing:.47px;height:10px;overflow:hidden">( Average dE: 0.87 [0.19,0.72,0.38] max: 1.28 [CIE2000] )</div>
<div class="a" style="left:10px;top:177px;width:1782px;height:178px;background:#f0f0f0;border-top:1px solid #696969;border-left:1px solid #696969"></div>
<div class="a" style="left:11px;top:178px;width:53px;height:22px;background:#f0f0f0;border-right:1px solid #696969;border-bottom:1px solid #696969"></div>
<div class="t b" style="left:11px;top:183px;width:52px;text-align:center;font-size:12px">% Sat</div>
<div class="a" style="left:64px;top:178px;width:342px;height:23px;background:#f0f0f0;border-right:1px solid #696969;border-bottom:2px solid #696969;border-left:1px solid #fff"></div>
<div class="t b" style="left:64px;top:184px;width:342px;text-align:center;font-size:11.5px">0</div>
<div class="a" style="left:406px;top:178px;width:342px;height:23px;background:#c0eeee;border-right:1px solid #696969;border-bottom:2px solid #696969;border-left:1px solid #fff"></div>
<div class="t b" style="left:406px;top:184px;width:342px;text-align:center;font-size:11.5px">25</div>
<div class="a" style="left:748px;top:178px;width:341px;height:23px;background:#96eeee;border-right:1px solid #696969;border-bottom:2px solid #696969;border-left:1px solid #fff"></div>
<div class="t b" style="left:748px;top:184px;width:341px;text-align:center;font-size:11.5px">50</div>
<div class="a" style="left:1089px;top:178px;width:341px;height:23px;background:#64eeee;border-right:1px solid #696969;border-bottom:2px solid #696969;border-left:1px solid #fff"></div>
<div class="t b" style="left:1089px;top:184px;width:341px;text-align:center;font-size:11.5px">75</div>
<div class="a" style="left:1430px;top:178px;width:341px;height:23px;background:#32eeee;border-right:1px solid #696969;border-bottom:2px solid #696969;border-left:1px solid #fff"></div>
<div class="t b" style="left:1430px;top:184px;width:341px;text-align:center;font-size:11.5px">100</div>
<div class="a" style="left:11px;top:201px;width:53px;height:24px;background:#f0f0f0;border-right:1px solid #696969;border-bottom:1px solid #696969;border-top:1px solid #fff"></div>
<div class="t b" style="left:11px;top:207px;width:52px;text-align:center;font-size:12px;letter-spacing:-.2px">x</div>
<div class="a" style="left:64px;top:201px;width:342px;height:25px;background:#fff;border-right:1px solid #c0c0c0;border-bottom:1px solid #c0c0c0"></div>
<div class="t" style="left:64px;top:208px;width:340px;text-align:right;font-size:11.3px;letter-spacing:-.2px">0.3124</div>
<div class="a" style="left:406px;top:201px;width:342px;height:25px;background:#fff;border-right:1px solid #c0c0c0;border-bottom:1px solid #c0c0c0"></div>
<div class="t" style="left:406px;top:208px;width:340px;text-align:right;font-size:11.3px;letter-spacing:-.2px">0.2903</div>
<div class="a" style="left:748px;top:201px;width:341px;height:25px;background:#fff;border-right:1px solid #c0c0c0;border-bottom:1px solid #c0c0c0"></div>
<div class="t" style="left:748px;top:208px;width:339px;text-align:right;font-size:11.3px;letter-spacing:-.2px">0.2682</div>
<div class="a" style="left:1089px;top:201px;width:341px;height:25px;background:#fff;border-right:1px solid #c0c0c0;border-bottom:1px solid #c0c0c0"></div>
<div class="t" style="left:1089px;top:208px;width:339px;text-align:right;font-size:11.3px;letter-spacing:-.2px">0.2461</div>
<div class="a" style="left:1430px;top:201px;width:341px;height:25px;background:#fff;border-right:1px solid #c0c0c0;border-bottom:1px solid #c0c0c0"></div>
<div class="t" style="left:1430px;top:208px;width:339px;text-align:right;font-size:11.3px;letter-spacing:-.2px">0.2260</div>
<div class="a" style="left:11px;top:226px;width:53px;height:24px;background:#f0f0f0;border-right:1px solid #696969;border-bottom:1px solid #696969;border-top:1px solid #fff"></div>
<div class="t b" style="left:11px;top:232px;width:52px;text-align:center;font-size:12px;letter-spacing:-.2px">y</div>
<div class="a" style="left:64px;top:226px;width:342px;height:25px;background:#fff;border-right:1px solid #c0c0c0;border-bottom:1px solid #c0c0c0"></div>
<div class="t" style="left:64px;top:233px;width:340px;text-align:right;font-size:11.3px;letter-spacing:-.2px">0.3297</div>
<div class="a" style="left:406px;top:226px;width:342px;height:25px;background:#fff;border-right:1px solid #c0c0c0;border-bottom:1px solid #c0c0c0"></div>
<div class="t" style="left:406px;top:233px;width:340px;text-align:right;font-size:11.3px;letter-spacing:-.2px">0.3274</div>
<div class="a" style="left:748px;top:226px;width:341px;height:25px;background:#fff;border-right:1px solid #c0c0c0;border-bottom:1px solid #c0c0c0"></div>
<div class="t" style="left:748px;top:233px;width:339px;text-align:right;font-size:11.3px;letter-spacing:-.2px">0.3268</div>
<div class="a" style="left:1089px;top:226px;width:341px;height:25px;background:#fff;border-right:1px solid #c0c0c0;border-bottom:1px solid #c0c0c0"></div>
<div class="t" style="left:1089px;top:233px;width:339px;text-align:right;font-size:11.3px;letter-spacing:-.2px">0.3276</div>
<div class="a" style="left:1430px;top:226px;width:341px;height:25px;background:#fff;border-right:1px solid #c0c0c0;border-bottom:1px solid #c0c0c0"></div>
<div class="t" style="left:1430px;top:233px;width:339px;text-align:right;font-size:11.3px;letter-spacing:-.2px">0.3292</div>
<div class="a" style="left:11px;top:251px;width:53px;height:24px;background:#f0f0f0;border-right:1px solid #696969;border-bottom:1px solid #696969;border-top:1px solid #fff"></div>
<div class="t b" style="left:11px;top:257px;width:52px;text-align:center;font-size:12px;letter-spacing:-.2px">Y</div>
<div class="a" style="left:64px;top:251px;width:342px;height:25px;background:#fff;border-right:1px solid #c0c0c0;border-bottom:1px solid #c0c0c0"></div>
<div class="t" style="left:64px;top:258px;width:340px;text-align:right;font-size:11.3px;letter-spacing:-.2px">92.211</div>
<div class="a" style="left:406px;top:251px;width:342px;height:25px;background:#fff;border-right:1px solid #c0c0c0;border-bottom:1px solid #c0c0c0"></div>
<div class="t" style="left:406px;top:258px;width:340px;text-align:right;font-size:11.3px;letter-spacing:-.2px">92.441</div>
<div class="a" style="left:748px;top:251px;width:341px;height:25px;background:#fff;border-right:1px solid #c0c0c0;border-bottom:1px solid #c0c0c0"></div>
<div class="t" style="left:748px;top:258px;width:339px;text-align:right;font-size:11.3px;letter-spacing:-.2px">92.194</div>
<div class="a" style="left:1089px;top:251px;width:341px;height:25px;background:#fff;border-right:1px solid #c0c0c0;border-bottom:1px solid #c0c0c0"></div>
<div class="t" style="left:1089px;top:258px;width:339px;text-align:right;font-size:11.3px;letter-spacing:-.2px">91.909</div>
<div class="a" style="left:1430px;top:251px;width:341px;height:25px;background:#fff;border-right:1px solid #c0c0c0;border-bottom:1px solid #c0c0c0"></div>
<div class="t" style="left:1430px;top:258px;width:339px;text-align:right;font-size:11.3px;letter-spacing:-.2px">94.744</div>
<div class="a" style="left:11px;top:276px;width:53px;height:24px;background:#f0f0f0;border-right:1px solid #696969;border-bottom:1px solid #696969;border-top:1px solid #fff"></div>
<div class="t b" style="left:11px;top:282px;width:52px;text-align:center;font-size:12px;letter-spacing:-.2px">Delta E</div>
<div class="a" style="left:64px;top:276px;width:342px;height:25px;background:#aaffaa;border-right:1px solid #c0c0c0;border-bottom:1px solid #c0c0c0"></div>
<div class="t" style="left:64px;top:283px;width:340px;text-align:right;font-weight:bold;font-size:12px;letter-spacing:-.2px">0.7</div>
<div class="a" style="left:406px;top:276px;width:342px;height:25px;background:#aaffaa;border-right:1px solid #c0c0c0;border-bottom:1px solid #c0c0c0"></div>
<div class="t" style="left:406px;top:283px;width:340px;text-align:right;font-weight:bold;font-size:12px;letter-spacing:-.2px">1.3</div>
<div class="a" style="left:748px;top:276px;width:341px;height:25px;background:#aaffaa;border-right:1px solid #c0c0c0;border-bottom:1px solid #c0c0c0"></div>
<div class="t" style="left:748px;top:283px;width:339px;text-align:right;font-weight:bold;font-size:12px;letter-spacing:-.2px">1.2</div>
<div class="a" style="left:1089px;top:276px;width:341px;height:25px;background:#aaffaa;border-right:1px solid #c0c0c0;border-bottom:1px solid #c0c0c0"></div>
<div class="t" style="left:1089px;top:283px;width:339px;text-align:right;font-weight:bold;font-size:12px;letter-spacing:-.2px">0.9</div>
<div class="a" style="left:1430px;top:276px;width:341px;height:25px;background:#aaffaa;border-right:1px solid #c0c0c0;border-bottom:1px solid #c0c0c0"></div>
<div class="t" style="left:1430px;top:283px;width:339px;text-align:right;font-weight:bold;font-size:12px;letter-spacing:-.2px">0.2</div>
<div class="a" style="left:11px;top:301px;width:53px;height:24px;background:#f0f0f0;border-right:1px solid #696969;border-bottom:1px solid #696969;border-top:1px solid #fff"></div>
<div class="t b" style="left:11px;top:307px;width:52px;text-align:center;font-size:12px;letter-spacing:-.2px">delta xy</div>
<div class="a" style="left:64px;top:301px;width:342px;height:25px;background:#eeeeee;border-right:1px solid #c0c0c0;border-bottom:1px solid #c0c0c0"></div>
<div class="t" style="left:64px;top:308px;width:340px;text-align:right;font-size:11.3px;letter-spacing:-.2px">0.0007</div>
<div class="a" style="left:406px;top:301px;width:342px;height:25px;background:#eeeeee;border-right:1px solid #c0c0c0;border-bottom:1px solid #c0c0c0"></div>
<div class="t" style="left:406px;top:308px;width:340px;text-align:right;font-size:11.3px;letter-spacing:-.2px">0.0020</div>
<div class="a" style="left:748px;top:301px;width:341px;height:25px;background:#eeeeee;border-right:1px solid #c0c0c0;border-bottom:1px solid #c0c0c0"></div>
<div class="t" style="left:748px;top:308px;width:339px;text-align:right;font-size:11.3px;letter-spacing:-.2px">0.0029</div>
<div class="a" style="left:1089px;top:301px;width:341px;height:25px;background:#eeeeee;border-right:1px solid #c0c0c0;border-bottom:1px solid #c0c0c0"></div>
<div class="t" style="left:1089px;top:308px;width:339px;text-align:right;font-size:11.3px;letter-spacing:-.2px">0.0024</div>
<div class="a" style="left:1430px;top:301px;width:341px;height:25px;background:#eeeeee;border-right:1px solid #c0c0c0;border-bottom:1px solid #c0c0c0"></div>
<div class="t" style="left:1430px;top:308px;width:339px;text-align:right;font-size:11.3px;letter-spacing:-.2px">0.0014</div>
<div class="a" style="left:11px;top:326px;width:53px;height:24px;background:#f0f0f0;border-right:1px solid #696969;border-bottom:1px solid #696969;border-top:1px solid #fff"></div>
<div class="t b" style="left:11px;top:332px;width:52px;text-align:center;font-size:12px;letter-spacing:-.2px">delta L</div>
<div class="a" style="left:64px;top:326px;width:342px;height:25px;background:#dddddd;border-right:1px solid #c0c0c0;border-bottom:1px solid #c0c0c0"></div>
<div class="t" style="left:64px;top:333px;width:340px;text-align:right;font-size:11.3px;letter-spacing:-.2px">-0.8 %</div>
<div class="a" style="left:406px;top:326px;width:342px;height:25px;background:#dddddd;border-right:1px solid #c0c0c0;border-bottom:1px solid #c0c0c0"></div>
<div class="t" style="left:406px;top:333px;width:340px;text-align:right;font-size:11.3px;letter-spacing:-.2px">-0.7 %</div>
<div class="a" style="left:748px;top:326px;width:341px;height:25px;background:#dddddd;border-right:1px solid #c0c0c0;border-bottom:1px solid #c0c0c0"></div>
<div class="t" style="left:748px;top:333px;width:339px;text-align:right;font-size:11.3px;letter-spacing:-.2px">-0.5 %</div>
<div class="a" style="left:1089px;top:326px;width:341px;height:25px;background:#dddddd;border-right:1px solid #c0c0c0;border-bottom:1px solid #c0c0c0"></div>
<div class="t" style="left:1089px;top:333px;width:339px;text-align:right;font-size:11.3px;letter-spacing:-.2px">-1.8 %</div>
<div class="a" style="left:1430px;top:326px;width:341px;height:25px;background:#dddddd;border-right:1px solid #c0c0c0;border-bottom:1px solid #c0c0c0"></div>
<div class="t" style="left:1430px;top:333px;width:339px;text-align:right;font-size:11.3px;letter-spacing:-.2px">+0.4 %</div>
<div class="a" style="left:11px;top:351px;width:53px;height:4px;background:#f0f0f0;border-right:1px solid #696969;border-top:1px solid #fff"></div>
<div class="a" style="left:405px;top:351px;width:1px;height:4px;background:#c0c0c0"></div>
<div class="a" style="left:747px;top:351px;width:1px;height:4px;background:#c0c0c0"></div>
<div class="a" style="left:1088px;top:351px;width:1px;height:4px;background:#c0c0c0"></div>
<div class="a" style="left:1429px;top:351px;width:1px;height:4px;background:#c0c0c0"></div>
<div class="a" style="left:1770px;top:351px;width:1px;height:4px;background:#c0c0c0"></div>
<div class="a" style="left:1771px;top:178px;width:21px;height:177px;background:#f0f0f0"></div>
<div class="a" style="left:1779px;top:195px;width:2px;height:142px;background:#8b8b8b"></div>
<div class="a" style="left:10px;top:355px;width:1782px;height:19px;background:#f0f0f0"></div>
<div class="a" style="left:15px;top:360px;width:0;height:0;border-top:4px solid transparent;border-bottom:4px solid transparent;border-right:6px solid #b0b0b0"></div>
<div class="a" style="left:1760px;top:360px;width:0;height:0;border-top:4px solid transparent;border-bottom:4px solid transparent;border-left:6px solid #a0a0a0"></div>
<div class="a" style="left:0;top:380px;width:1898px;height:4px;background:#8c8c8c"></div>
<div class="a" style="left:1811px;top:158px;width:87px;height:222px;background:#8e8e8e"></div>
<div class="pn" style="left:1815px;top:162px;width:80.5px;height:98px;box-shadow:0 0 0 2.500px #f2f2f2;border-color:#7c7c7c"><div class="h" style="height:17.5px"><span>Display</span></div></div>
<div class="a" style="left:1823px;top:182px;width:11px;height:11px;border-radius:6px;background:#fff;border:1px solid #c0c0c0;border-right-color:#ddd;border-bottom-color:#ddd"></div>
<div class="t" style="left:1841px;top:182px;font-size:13px;letter-spacing:.55px;color:#a0a0a0">Sensor</div>
<div class="a" style="left:1823px;top:198px;width:11px;height:11px;border-radius:6px;background:#fff;border:1px solid #555;border-right-color:#ddd;border-bottom-color:#ddd"></div>
<div class="t" style="left:1841px;top:198px;font-size:13px;letter-spacing:.05px;color:#000">RGB</div>
<div class="a" style="left:1823px;top:214px;width:11px;height:11px;border-radius:6px;background:#fff;border:1px solid #555;border-right-color:#ddd;border-bottom-color:#ddd"></div>
<div class="t" style="left:1841px;top:214px;font-size:13px;letter-spacing:.05px;color:#000">XYZ</div>
<div class="a" style="left:1823px;top:230px;width:11px;height:11px;border-radius:6px;background:#fff;border:1px solid #555;border-right-color:#ddd;border-bottom-color:#ddd"></div>
<div class="t" style="left:1841px;top:230px;font-size:13px;letter-spacing:.55px;color:#000">xyz</div>
<div class="a" style="left:1823px;top:245px;width:11px;height:11px;border-radius:6px;background:#fff;border:1px solid #555;border-right-color:#ddd;border-bottom-color:#ddd"></div><div class="a" style="left:1826.5px;top:248.5px;width:4px;height:4px;border-radius:2px;background:#000"></div>
<div class="t" style="left:1841px;top:245px;font-size:13px;letter-spacing:.55px;color:#000">xyY</div>
<div class="a" style="left:1812px;top:266px;width:83.500px;height:29px;background:#f0f0f0;border:1px solid;border-color:#fff #808080 #808080 #fff"></div>
<div class="t" style="left:1863px;top:274.0px;font-size:13px;letter-spacing:.55px">Go</div>
<div class="a" style="left:1812px;top:296px;width:83.500px;height:28.5px;background:#f0f0f0;border:1px solid;border-color:#fff #808080 #808080 #fff"></div>
<div class="t" style="left:1851px;top:303.8px;font-size:13px;letter-spacing:.55px">Delete</div>
<div class="a" style="left:1812px;top:326px;width:83.500px;height:28px;background:#f0f0f0;border:1px solid;border-color:#fff #808080 #808080 #fff"></div>
<div class="t" style="left:1858px;top:333.5px;font-size:13px;letter-spacing:.55px">Refs</div>
<svg class="a" style="left:1817px;top:267px" width="34" height="28" viewBox="0 0 34 28"><path d="M2 2h8l2 24h-10z" fill="#777" stroke="#222" stroke-width=".8"/><path d="M24 6h8v20h-8z" fill="#888" stroke="#222" stroke-width=".8"/><path d="M9 1q8 1 10 6t6 6l-4 13q-6-2-8-8t-6-8z" fill="#28d8f0" stroke="#0a3a5a" stroke-width="1.200"/><path d="M11 9l9-3M14 17l9-3M17 24l6-2" stroke="#0a3a5a" stroke-width="1"/></svg>
<svg class="a" style="left:1819px;top:297px" width="30" height="27" viewBox="0 0 30 27"><path d="M1 5q13-6 27-2l-4 22q-9 3-18-1z" fill="#bfe2f5" stroke="#7ab4d8" stroke-width="1"/><path d="M1 5q13 5 27-2" fill="none" stroke="#7ab4d8"/><path d="M14 12a5 5 0 1 1 0 9M20 14l3-3 1 5z" fill="none" stroke="#1a9a2a" stroke-width="2.200"/></svg>
<svg class="a" style="left:1817px;top:329px" width="34" height="24" viewBox="0 0 34 24"><path d="M1 23l1-8 2-3v11z" fill="#8000c0"/><path d="M4 23V10l3-5 2 5v13z" fill="#0000e0"/><path d="M9 23V11l3 2v10z" fill="#00c0e0"/><path d="M12 23V12l3-6v17z" fill="#00d000"/><path d="M15 23V5l3-4 3 5v17z" fill="#ffee00"/><path d="M21 23V8l2 3 2-2v14z" fill="#8a0000"/><path d="M25 23V9l3-1 3 4 1 11z" fill="#ff0000"/></svg>
<div class="a" style="left:1817px;top:357px;width:57px;height:19px;background:#f0f0f0"></div>
<div class="a" style="left:1819px;top:361px;width:11px;height:11px;background:#fff;border:1px solid #555;border-right-color:#d8d8d8;border-bottom-color:#d8d8d8"></div>
<div class="t" style="left:1837px;top:360px;font-size:13px;letter-spacing:.55px">Edit</div>
<div class="pn" style="left:5px;top:388px;width:378px;height:627.6px;"><div class="h" style="height:17.5px"><span>Selected color</span></div></div>
<div class="a" style="left:13px;top:408px;width:115px;height:16px;background:#f0f0f0"></div>
<div class="t" style="left:18px;top:410px;font-size:13px;letter-spacing:.55px">RGB Levels</div>
<div class="a" style="left:230px;top:406px;width:128px;height:16px;background:#f0f0f0"></div>
<div class="t" style="left:241px;top:408px;font-size:13px;letter-spacing:.55px">Current Measure</div>
<div class="a" style="left:14px;top:433px;width:200px;height:86px;background:#f0f0f0"></div>
<div class="a" style="left:14px;top:477px;width:200px;height:0;border-top:1px dashed #7a7a7a"></div>
<svg class="a" style="left:14px;top:495px" width="200" height="25" viewBox="14 495 200 25"><path d="M14 515.500q24-9.500 48 0z" fill="#8a0000"/><path d="M66 515.500q24-9.500 48 0z" fill="#008a00"/><path d="M118 515.500q24-9.500 48 0z" fill="#00008a"/><path d="M170 515.500q24-9.500 44-3v3z" fill="#b07a00"/><path d="M14 515.500q24-9 48 0 2 1.200 4 0 24-12 48 0 2 1.200 4 0 24-12 48 0 2 1.200 4 0 24-12 44-3.500V519H14z" fill="#000"/><path d="M14 515.500q24-9.500 48 0z" fill="#8a0000" transform="translate(0,-1.500)"/><path d="M66 515.500q24-9.500 48 0z" fill="#008a00" transform="translate(0,-1.500)"/><path d="M118 515.500q24-9.500 48 0z" fill="#00008a" transform="translate(0,-1.500)"/><path d="M170 514q24-8.500 44-1.500v1.500z" fill="#b07a00"/></svg>
<div class="t b" style="left:8.5px;top:496px;width:60px;text-align:center;font-family:'Liberation Serif',serif;font-size:11.5px">0.0%</div>
<div class="t b" style="left:59.5px;top:496px;width:60px;text-align:center;font-family:'Liberation Serif',serif;font-size:11.5px">0.0%</div>
<div class="t b" style="left:110.5px;top:496px;width:60px;text-align:center;font-family:'Liberation Serif',serif;font-size:11.5px">0.0%</div>
<div class="t b" style="left:162px;top:496px;width:60px;text-align:center;font-family:'Liberation Serif',serif;font-size:11.5px">dE 0.0</div>
<div class="a" style="left:16px;top:533px;width:192px;height:74px;background:#f0f0f0"></div>
<div class="t b" style="left:23.5px;top:534px;width:80px;text-align:center;font-size:13px;line-height:16px;letter-spacing:.3px;white-space:normal">No<br>Measure</div>
<div class="t b" style="left:119.5px;top:534px;width:80px;text-align:center;font-size:13px;line-height:16px;letter-spacing:.3px;white-space:normal">No<br>Measure</div>
<div class="a" style="left:16px;top:623px;width:44px;height:15px;background:#f0f0f0"></div>
<div class="t" style="left:18px;top:623px;font-size:13px;letter-spacing:.55px">Target</div>
<div class="a" style="left:50px;top:638px;width:116px;height:89px;border:1px solid #000;background:conic-gradient(from 0deg at 50% 50%,#60f000 0deg,#ffb000 45deg,#ff0000 90deg,#ff0060 125deg,#c000c0 160deg,#6000e0 200deg,#0000ff 235deg,#00a0c0 275deg,#00ff60 320deg,#60f000 360deg)"></div>
<div class="a" style="left:67px;top:651px;width:82px;height:63px;border-radius:9px;background:#f4f4f4"></div>
<svg class="a" style="left:67px;top:651px" width="82" height="63" viewBox="0 0 82 63" fill="none" stroke-width="1.150">
<path d="M29.9 29.2Q32.5 24.4 37.3 21.8" stroke="#10e080"/>
<path d="M26.3 27.4Q29.5 22.0 34.9 18.8" stroke="#10e080"/>
<path d="M22.7 25.6Q26.6 19.6 32.6 15.8" stroke="#10e080"/>
<path d="M19.1 23.8Q23.6 17.2 30.2 12.7" stroke="#10e080"/>
<path d="M15.5 22.0Q20.6 14.8 27.9 9.7" stroke="#10e080"/>
<path d="M11.9 20.3Q17.7 12.4 25.5 6.7" stroke="#10e080"/>
<path d="M44.7 21.8Q49.5 24.4 52.1 29.2" stroke="#ffb010"/>
<path d="M47.1 18.8Q52.5 22.0 55.7 27.4" stroke="#ffb010"/>
<path d="M49.4 15.8Q55.4 19.6 59.3 25.6" stroke="#ffb010"/>
<path d="M51.8 12.7Q58.4 17.2 62.9 23.8" stroke="#ffb010"/>
<path d="M54.1 9.7Q61.4 14.8 66.5 22.0" stroke="#ffb010"/>
<path d="M56.5 6.7Q64.3 12.4 70.1 20.3" stroke="#ffb010"/>
<path d="M37.3 41.2Q32.5 38.6 29.9 33.8" stroke="#1050ff"/>
<path d="M34.9 44.2Q29.5 41.0 26.3 35.6" stroke="#1050ff"/>
<path d="M32.6 47.2Q26.6 43.4 22.7 37.4" stroke="#1050ff"/>
<path d="M30.2 50.3Q23.6 45.8 19.1 39.2" stroke="#1050ff"/>
<path d="M27.9 53.3Q20.6 48.2 15.5 41.0" stroke="#1050ff"/>
<path d="M25.5 56.3Q17.7 50.6 11.9 42.7" stroke="#1050ff"/>
<path d="M52.1 33.8Q49.5 38.6 44.7 41.2" stroke="#ff1090"/>
<path d="M55.7 35.6Q52.5 41.0 47.1 44.2" stroke="#ff1090"/>
<path d="M59.3 37.4Q55.4 43.4 49.4 47.2" stroke="#ff1090"/>
<path d="M62.9 39.2Q58.4 45.8 51.8 50.3" stroke="#ff1090"/>
<path d="M66.5 41.0Q61.4 48.2 54.1 53.3" stroke="#ff1090"/>
<path d="M70.1 42.7Q64.3 50.6 56.5 56.3" stroke="#ff1090"/>
<path d="M41 26v11M35.500 31.500h11M37.500 28l7 7M44.500 28l-7 7" stroke="#000" stroke-width=".8" stroke-dasharray="1.500 1"/></svg>
<div class="a" style="left:220px;top:430.500px;width:153px;height:577px;background:#f0f0f0;border-top:2px solid #7a7a7a;border-left:2px solid #7a7a7a"></div>
<div class="a" style="left:222px;top:432px;width:59px;height:23px;background:#f0f0f0;border-right:1px solid #696969;border-bottom:1px solid #696969;border-top:1px solid #fff"></div>
<div class="t b" style="left:222px;top:438px;width:58px;text-align:center;font-size:12px;letter-spacing:-.2px">Y cd/m<sup style="font-size:8px;line-height:0;vertical-align:4px">2</sup></div>
<div class="a" style="left:281px;top:432px;width:74px;height:23px;background:#fff;border-right:1px solid #c0c0c0;border-bottom:1px solid #c0c0c0"></div>
<div class="a" style="left:222px;top:455px;width:59px;height:23px;background:#f0f0f0;border-right:1px solid #696969;border-bottom:1px solid #696969;border-top:1px solid #fff"></div>
<div class="t b" style="left:222px;top:461px;width:58px;text-align:center;font-size:12px;letter-spacing:-.2px">Y ftL</div>
<div class="a" style="left:281px;top:455px;width:74px;height:23px;background:#fff;border-right:1px solid #c0c0c0;border-bottom:1px solid #c0c0c0"></div>
<div class="a" style="left:222px;top:478px;width:59px;height:23px;background:#f0f0f0;border-right:1px solid #696969;border-bottom:1px solid #696969;border-top:1px solid #fff"></div>
<div class="t b" style="left:222px;top:484px;width:58px;text-align:center;font-size:12px;letter-spacing:-.2px">T°</div>
<div class="a" style="left:281px;top:478px;width:74px;height:23px;background:#fff;border-right:1px solid #c0c0c0;border-bottom:1px solid #c0c0c0"></div>
<div class="a" style="left:222px;top:501px;width:59px;height:23px;background:#f0f0f0;border-right:1px solid #696969;border-bottom:1px solid #696969;border-top:1px solid #fff"></div>
<div class="t b" style="left:222px;top:507px;width:58px;text-align:center;font-size:12px;letter-spacing:-.2px">X</div>
<div class="a" style="left:281px;top:501px;width:74px;height:23px;background:#dfdfdf;border-right:1px solid #c0c0c0;border-bottom:1px solid #c0c0c0"></div>
<div class="a" style="left:222px;top:524px;width:59px;height:23px;background:#f0f0f0;border-right:1px solid #696969;border-bottom:1px solid #696969;border-top:1px solid #fff"></div>
<div class="t b" style="left:222px;top:530px;width:58px;text-align:center;font-size:12px;letter-spacing:-.2px">Y</div>
<div class="a" style="left:281px;top:524px;width:74px;height:23px;background:#dfdfdf;border-right:1px solid #c0c0c0;border-bottom:1px solid #c0c0c0"></div>
<div class="a" style="left:222px;top:547px;width:59px;height:23px;background:#f0f0f0;border-right:1px solid #696969;border-bottom:1px solid #696969;border-top:1px solid #fff"></div>
<div class="t b" style="left:222px;top:553px;width:58px;text-align:center;font-size:12px;letter-spacing:-.2px">Z</div>
<div class="a" style="left:281px;top:547px;width:74px;height:23px;background:#dfdfdf;border-right:1px solid #c0c0c0;border-bottom:1px solid #c0c0c0"></div>
<div class="a" style="left:222px;top:570px;width:59px;height:23px;background:#f0f0f0;border-right:1px solid #696969;border-bottom:1px solid #696969;border-top:1px solid #fff"></div>
<div class="t b" style="left:222px;top:576px;width:58px;text-align:center;font-size:12px;letter-spacing:-.2px">R</div>
<div class="a" style="left:281px;top:570px;width:74px;height:23px;background:#fff;border-right:1px solid #c0c0c0;border-bottom:1px solid #c0c0c0"></div>
<div class="a" style="left:222px;top:593px;width:59px;height:23px;background:#f0f0f0;border-right:1px solid #696969;border-bottom:1px solid #696969;border-top:1px solid #fff"></div>
<div class="t b" style="left:222px;top:599px;width:58px;text-align:center;font-size:12px;letter-spacing:-.2px">G</div>
<div class="a" style="left:281px;top:593px;width:74px;height:23px;background:#fff;border-right:1px solid #c0c0c0;border-bottom:1px solid #c0c0c0"></div>
<div class="a" style="left:222px;top:616px;width:59px;height:23px;background:#f0f0f0;border-right:1px solid #696969;border-bottom:1px solid #696969;border-top:1px solid #fff"></div>
<div class="t b" style="left:222px;top:622px;width:58px;text-align:center;font-size:12px;letter-spacing:-.2px">B</div>
<div class="a" style="left:281px;top:616px;width:74px;height:23px;background:#fff;border-right:1px solid #c0c0c0;border-bottom:1px solid #c0c0c0"></div>
<div class="a" style="left:222px;top:639px;width:59px;height:23px;background:#f0f0f0;border-right:1px solid #696969;border-bottom:1px solid #696969;border-top:1px solid #fff"></div>
<div class="t b" style="left:222px;top:645px;width:58px;text-align:center;font-size:12px;letter-spacing:-.2px">x</div>
<div class="a" style="left:281px;top:639px;width:74px;height:23px;background:#dfdfdf;border-right:1px solid #c0c0c0;border-bottom:1px solid #c0c0c0"></div>
<div class="a" style="left:222px;top:662px;width:59px;height:23px;background:#f0f0f0;border-right:1px solid #696969;border-bottom:1px solid #696969;border-top:1px solid #fff"></div>
<div class="t b" style="left:222px;top:668px;width:58px;text-align:center;font-size:12px;letter-spacing:-.2px">y</div>
<div class="a" style="left:281px;top:662px;width:74px;height:23px;background:#dfdfdf;border-right:1px solid #c0c0c0;border-bottom:1px solid #c0c0c0"></div>
<div class="a" style="left:222px;top:685px;width:59px;height:23px;background:#f0f0f0;border-right:1px solid #696969;border-bottom:1px solid #696969;border-top:1px solid #fff"></div>
<div class="t b" style="left:222px;top:691px;width:58px;text-align:center;font-size:12px;letter-spacing:-.2px">Y</div>
<div class="a" style="left:281px;top:685px;width:74px;height:23px;background:#dfdfdf;border-right:1px solid #c0c0c0;border-bottom:1px solid #c0c0c0"></div>
<div class="a" style="left:222px;top:708px;width:59px;height:23px;background:#f0f0f0;border-right:1px solid #696969;border-bottom:1px solid #696969;border-top:1px solid #fff"></div>
<div class="t b" style="left:222px;top:714px;width:58px;text-align:center;font-size:12px;letter-spacing:-.2px">x</div>
<div class="a" style="left:281px;top:708px;width:74px;height:23px;background:#fff;border-right:1px solid #c0c0c0;border-bottom:1px solid #c0c0c0"></div>
<div class="a" style="left:222px;top:731px;width:59px;height:23px;background:#f0f0f0;border-right:1px solid #696969;border-bottom:1px solid #696969;border-top:1px solid #fff"></div>
<div class="t b" style="left:222px;top:737px;width:58px;text-align:center;font-size:12px;letter-spacing:-.2px">y</div>
<div class="a" style="left:281px;top:731px;width:74px;height:23px;background:#fff;border-right:1px solid #c0c0c0;border-bottom:1px solid #c0c0c0"></div>
<div class="a" style="left:222px;top:754px;width:59px;height:23px;background:#f0f0f0;border-right:1px solid #696969;border-bottom:1px solid #696969;border-top:1px solid #fff"></div>
<div class="t b" style="left:222px;top:760px;width:58px;text-align:center;font-size:12px;letter-spacing:-.2px">z</div>
<div class="a" style="left:281px;top:754px;width:74px;height:23px;background:#fff;border-right:1px solid #c0c0c0;border-bottom:1px solid #c0c0c0"></div>
<div class="a" style="left:222px;top:777px;width:59px;height:23px;background:#f0f0f0;border-right:1px solid #696969;border-bottom:1px solid #696969;border-top:1px solid #fff"></div>
<div class="t b" style="left:222px;top:783px;width:58px;text-align:center;font-size:12px;letter-spacing:-.2px">L</div>
<div class="a" style="left:281px;top:777px;width:74px;height:23px;background:#dfdfdf;border-right:1px solid #c0c0c0;border-bottom:1px solid #c0c0c0"></div>
<div class="a" style="left:222px;top:800px;width:59px;height:23px;background:#f0f0f0;border-right:1px solid #696969;border-bottom:1px solid #696969;border-top:1px solid #fff"></div>
<div class="t b" style="left:222px;top:806px;width:58px;text-align:center;font-size:12px;letter-spacing:-.2px">a</div>
<div class="a" style="left:281px;top:800px;width:74px;height:23px;background:#dfdfdf;border-right:1px solid #c0c0c0;border-bottom:1px solid #c0c0c0"></div>
<div class="a" style="left:222px;top:823px;width:59px;height:23px;background:#f0f0f0;border-right:1px solid #696969;border-bottom:1px solid #696969;border-top:1px solid #fff"></div>
<div class="t b" style="left:222px;top:829px;width:58px;text-align:center;font-size:12px;letter-spacing:-.2px">b</div>
<div class="a" style="left:281px;top:823px;width:74px;height:23px;background:#dfdfdf;border-right:1px solid #c0c0c0;border-bottom:1px solid #c0c0c0"></div>
<div class="a" style="left:222px;top:846px;width:59px;height:23px;background:#f0f0f0;border-right:1px solid #696969;border-bottom:1px solid #696969;border-top:1px solid #fff"></div>
<div class="t b" style="left:222px;top:852px;width:58px;text-align:center;font-size:12px;letter-spacing:-.2px">L</div>
<div class="a" style="left:281px;top:846px;width:74px;height:23px;background:#fff;border-right:1px solid #c0c0c0;border-bottom:1px solid #c0c0c0"></div>
<div class="a" style="left:222px;top:869px;width:59px;height:23px;background:#f0f0f0;border-right:1px solid #696969;border-bottom:1px solid #696969;border-top:1px solid #fff"></div>
<div class="t b" style="left:222px;top:875px;width:58px;text-align:center;font-size:12px;letter-spacing:-.2px">C</div>
<div class="a" style="left:281px;top:869px;width:74px;height:23px;background:#fff;border-right:1px solid #c0c0c0;border-bottom:1px solid #c0c0c0"></div>
<div class="a" style="left:222px;top:892px;width:59px;height:23px;background:#f0f0f0;border-right:1px solid #696969;border-bottom:1px solid #696969;border-top:1px solid #fff"></div>
<div class="t b" style="left:222px;top:898px;width:58px;text-align:center;font-size:12px;letter-spacing:-.2px">H</div>
<div class="a" style="left:281px;top:892px;width:74px;height:23px;background:#fff;border-right:1px solid #c0c0c0;border-bottom:1px solid #c0c0c0"></div>
<div class="a" style="left:222px;top:915px;width:59px;height:23px;background:#f0f0f0;border-right:1px solid #696969;border-bottom:1px solid #696969;border-top:1px solid #fff"></div>
<div class="t b" style="left:222px;top:921px;width:58px;text-align:center;font-size:12px;letter-spacing:-.2px">L</div>
<div class="a" style="left:281px;top:915px;width:74px;height:23px;background:#dfdfdf;border-right:1px solid #c0c0c0;border-bottom:1px solid #c0c0c0"></div>
<div class="t" style="left:281px;top:921px;width:72px;text-align:right;font-size:11.3px;letter-spacing:-.2px">22.43</div>
<div class="a" style="left:222px;top:938px;width:59px;height:23px;background:#f0f0f0;border-right:1px solid #696969;border-bottom:1px solid #696969;border-top:1px solid #fff"></div>
<div class="t b" style="left:222px;top:944px;width:58px;text-align:center;font-size:12px;letter-spacing:-.2px">M</div>
<div class="a" style="left:281px;top:938px;width:74px;height:23px;background:#dfdfdf;border-right:1px solid #c0c0c0;border-bottom:1px solid #c0c0c0"></div>
<div class="t" style="left:281px;top:944px;width:72px;text-align:right;font-size:11.3px;letter-spacing:-.2px">33.33</div>
<div class="a" style="left:222px;top:961px;width:59px;height:23px;background:#f0f0f0;border-right:1px solid #696969;border-bottom:1px solid #696969;border-top:1px solid #fff"></div>
<div class="t b" style="left:222px;top:967px;width:58px;text-align:center;font-size:12px;letter-spacing:-.2px">S</div>
<div class="a" style="left:281px;top:961px;width:74px;height:23px;background:#dfdfdf;border-right:1px solid #c0c0c0;border-bottom:1px solid #c0c0c0"></div>
<div class="t" style="left:281px;top:967px;width:72px;text-align:right;font-size:11.3px;letter-spacing:-.2px">22.44</div>
<div class="a" style="left:222px;top:985px;width:133px;height:22px;background:#a0a0a0"></div>
<div class="a" style="left:360px;top:438px;width:0;height:0;border-left:4px solid transparent;border-right:4px solid transparent;border-bottom:6px solid #b8b8b8"></div>
<div class="a" style="left:360px;top:996px;width:0;height:0;border-left:4px solid transparent;border-right:4px solid transparent;border-top:6px solid #b8b8b8"></div>
<div class="a" style="left:385px;top:384px;width:3px;height:636px;background:#8c8c8c"></div>
<div class="pn" style="left:391px;top:388px;width:1504px;height:627.6px;"><div class="h" style="height:17.5px"><span>Information</span></div></div>
<div class="a" style="left:396px;top:410px;width:301px;height:21px;background:#fff;border:2px solid;border-color:#6d6d6d #e3e3e3 #e3e3e3 #6d6d6d"></div>
<div class="a" style="left:399px;top:413px;width:280px;height:16px;background:#0078d7"></div>
<div class="t" style="left:402px;top:414px;font-size:13px;letter-spacing:.55px;color:#fff">CIE Diagram</div>
<div class="a" style="left:680px;top:412px;width:16px;height:17px;background:#f0f0f0;border:1px solid;border-color:#fff #696969 #696969 #fff"></div>
<div class="a" style="left:684px;top:419px;width:0;height:0;border-left:4px solid transparent;border-right:4px solid transparent;border-top:4px solid #000"></div>
<div class="a" style="left:398px;top:440px;width:1495px;height:568px;background:#fff;border:2px solid;border-color:#8a8a8a #fff #fff #8a8a8a"></div>
<div class="a" style="left:400px;top:442px;width:1490px;height:564px;background:#02090b"></div>
<div class="a" style="left:400px;top:442px;width:1490px;height:564px;overflow:hidden">
<div class="a" style="left:0;top:0;width:1490px;height:564px;clip-path:polygon(1321.2px 379.2px, 1283.4px 385.4px, 1228.7px 394.2px, 1169.6px 403.7px, 1118.8px 411.8px, 1085.7px 416.9px, 1061.7px 420.4px, 1031.6px 425.0px, 980.0px 433.0px, 891.9px 446.9px, 779.1px 464.8px, 666.7px 482.6px, 580.0px 496.3px, 527.7px 504.6px, 495.7px 509.6px, 474.9px 512.9px, 456.2px 515.8px, 439.6px 518.3px, 429.1px 519.9px, 421.9px 521.0px, 415.0px 522.0px, 408.2px 523.1px, 402.9px 524.1px, 398.6px 524.9px, 395.0px 525.5px, 392.3px 525.8px, 390.6px 525.8px, 389.3px 525.7px, 387.5px 525.5px, 385.2px 525.2px, 382.7px 524.9px, 380.1px 524.4px, 377.5px 523.8px, 375.2px 523.1px, 373.0px 522.3px, 370.5px 521.4px, 367.5px 520.0px, 363.7px 518.2px, 359.4px 516.1px, 354.7px 513.7px, 350.0px 511.0px, 345.2px 508.2px, 340.3px 505.1px, 335.2px 501.7px, 330.0px 498.0px, 324.4px 493.6px, 318.5px 488.6px, 312.7px 483.7px, 307.5px 479.2px, 303.1px 475.6px, 299.1px 472.3px, 295.4px 469.3px, 291.5px 466.0px, 287.4px 462.6px, 283.3px 459.1px, 279.2px 455.5px, 275.0px 451.8px, 270.6px 447.8px, 266.0px 443.6px, 261.5px 439.4px, 257.5px 435.5px, 254.3px 432.2px, 251.7px 429.4px, 248.9px 426.2px, 245.0px 421.8px, 239.5px 415.6px, 233.0px 408.2px, 226.3px 400.4px, 220.0px 393.0px, 214.2px 385.9px, 208.6px 378.8px, 203.4px 372.0px, 198.8px 366.0px, 195.2px 361.6px, 192.6px 358.4px, 189.9px 354.8px, 186.2px 349.2px, 181.2px 340.8px, 175.2px 330.5px, 169.1px 319.8px, 163.8px 310.0px, 159.3px 301.6px, 155.4px 293.7px, 151.9px 286.2px, 148.8px 279.0px, 146.0px 272.1px, 143.8px 265.5px, 141.8px 259.1px, 140.0px 253.0px, 138.4px 247.2px, 137.1px 241.8px, 136.0px 236.4px, 135.0px 230.5px, 134.2px 224.0px, 133.5px 217.1px, 132.9px 210.0px, 132.5px 203.0px, 132.2px 196.1px, 132.0px 189.2px, 132.0px 182.4px, 132.0px 175.5px, 132.0px 168.5px, 132.1px 161.5px, 132.4px 154.6px, 133.0px 148.0px, 134.0px 141.7px, 135.3px 135.7px, 136.9px 129.9px, 138.8px 124.2px, 140.8px 118.8px, 143.0px 113.5px, 145.6px 108.4px, 148.8px 103.5px, 152.5px 98.7px, 156.9px 94.0px, 161.5px 89.7px, 166.2px 86.0px, 170.9px 83.1px, 175.7px 80.8px, 180.8px 78.7px, 186.2px 76.8px, 192.4px 74.7px, 199.1px 72.7px, 205.9px 70.9px, 212.5px 69.2px, 218.9px 67.8px, 225.2px 66.4px, 231.5px 65.2px, 237.5px 64.2px, 243.6px 63.5px, 249.7px 63.0px, 255.3px 62.6px, 260.0px 62.2px, 262.9px 62.0px, 264.5px 61.9px, 266.4px 61.9px, 270.0px 62.0px, 276.1px 62.1px, 283.8px 62.2px, 292.0px 62.5px, 300.0px 63.0px, 307.1px 63.6px, 314.1px 64.4px, 321.4px 65.4px, 330.0px 66.8px, 340.1px 68.5px, 351.2px 70.5px, 363.0px 72.7px, 375.0px 75.0px, 387.6px 77.4px, 400.9px 80.0px, 413.7px 82.6px, 425.0px 85.0px, 433.2px 87.0px, 439.3px 88.7px, 446.1px 90.6px, 456.2px 93.5px, 472.0px 97.8px, 491.5px 103.0px, 511.1px 108.4px, 527.5px 113.0px, 539.3px 116.5px, 548.5px 119.5px, 556.6px 122.2px, 565.0px 124.9px, 574.2px 127.8px, 583.4px 130.7px, 592.2px 133.5px, 600.0px 135.9px, 605.7px 137.6px, 609.8px 138.8px, 614.7px 140.2px, 622.5px 142.6px, 634.0px 146.2px, 648.0px 150.7px, 663.6px 155.7px, 680.0px 161.1px, 698.5px 167.2px, 719.1px 174.0px, 738.8px 180.6px, 755.0px 186.0px, 763.9px 189.1px, 768.0px 190.6px, 773.7px 192.7px, 787.5px 197.5px, 814.8px 206.7px, 850.9px 218.9px, 887.2px 231.1px, 915.0px 240.5px, 930.9px 245.9px, 940.0px 249.1px, 945.9px 251.2px, 952.5px 253.5px, 959.8px 256.0px, 966.1px 258.2px, 972.5px 260.4px, 980.0px 263.0px, 987.7px 265.7px, 995.5px 268.4px, 1005.6px 271.8px, 1020.0px 276.8px, 1039.0px 283.3px, 1061.6px 291.0px, 1088.0px 300.1px, 1118.8px 310.5px, 1158.3px 323.8px, 1205.1px 339.5px, 1249.9px 354.6px, 1283.8px 366.0px, 1303.0px 372.6px, 1312.8px 376.1px, 1317.5px 377.9px);background:conic-gradient(from 0deg at 643.4px 349.7px,#3cc701 0deg,#3ec701 0.5deg,#3fc701 1deg,#41c701 1.5deg,#43c701 2deg,#44c701 2.5deg,#46c701 3deg,#47c701 3.5deg,#48c701 4deg,#4ac701 4.5deg,#4bc701 5deg,#4cc701 5.5deg,#4ec701 6deg,#4fc701 6.5deg,#50c701 7deg,#51c701 7.5deg,#53c701 8deg,#54c701 8.5deg,#55c701 9deg,#56c701 9.5deg,#57c701 10deg,#58c701 10.5deg,#5ac701 11deg,#5bc701 11.5deg,#5cc701 12deg,#5dc701 12.5deg,#5ec701 13deg,#5fc701 13.5deg,#60c701 14deg,#61c701 14.5deg,#62c701 15deg,#63c701 15.5deg,#64c701 16deg,#65c701 16.5deg,#66c701 17deg,#67c701 17.5deg,#68c701 18deg,#69c701 18.5deg,#6ac701 19deg,#6bc701 19.5deg,#6cc701 20deg,#6dc701 20.5deg,#6ec701 21deg,#6fc701 21.5deg,#70c701 22deg,#71c701 22.5deg,#72c701 23deg,#73c701 23.5deg,#74c701 24deg,#75c701 24.5deg,#76c701 25deg,#76c701 25.5deg,#77c701 26deg,#78c701 26.5deg,#79c701 27deg,#7ac701 27.5deg,#7bc701 28deg,#7cc701 28.5deg,#7dc701 29deg,#7ec701 29.5deg,#7fc701 30deg,#80c701 30.5deg,#81c701 31deg,#82c702 31.5deg,#83c702 32deg,#84c702 32.5deg,#85c702 33deg,#86c702 33.5deg,#86c702 34deg,#87c702 34.5deg,#88c702 35deg,#89c702 35.5deg,#8ac702 36deg,#8bc702 36.5deg,#8cc702 37deg,#8dc702 37.5deg,#8ec702 38deg,#8fc702 38.5deg,#90c702 39deg,#91c702 39.5deg,#92c702 40deg,#93c702 40.5deg,#94c702 41deg,#95c702 41.5deg,#96c702 42deg,#97c702 42.5deg,#98c702 43deg,#9ac702 43.5deg,#9bc702 44deg,#9cc702 44.5deg,#9dc702 45deg,#9ec702 45.5deg,#9fc702 46deg,#a0c702 46.5deg,#a1c702 47deg,#a2c702 47.5deg,#a4c702 48deg,#a5c702 48.5deg,#a6c702 49deg,#a7c702 49.5deg,#a8c702 50deg,#a9c702 50.5deg,#abc702 51deg,#acc702 51.5deg,#adc702 52deg,#afc702 52.5deg,#b0c702 53deg,#b1c702 53.5deg,#b3c702 54deg,#b4c702 54.5deg,#b5c702 55deg,#b7c702 55.5deg,#b8c702 56deg,#bac702 56.5deg,#bbc702 57deg,#bdc702 57.5deg,#bec702 58deg,#c0c702 58.5deg,#c1c702 59deg,#c3c702 59.5deg,#c5c702 60deg,#c6c702 60.5deg,#c7c602 61deg,#c7c402 61.5deg,#c7c202 62deg,#c7c102 62.5deg,#c7bf02 63deg,#c7bd02 63.5deg,#c7bb02 64deg,#c7ba02 64.5deg,#c7b802 65deg,#c7b602 65.5deg,#c7b402 66deg,#c7b202 66.5deg,#c7b102 67deg,#c7af02 67.5deg,#c7ad02 68deg,#c7ab02 68.5deg,#c7a902 69deg,#c7a702 69.5deg,#c7a502 70deg,#c7a302 70.5deg,#c7a102 71deg,#c79f02 71.5deg,#c79d02 72deg,#c79b02 72.5deg,#c79902 73deg,#c79702 73.5deg,#c79502 74deg,#c79302 74.5deg,#c79102 75deg,#c78e02 75.5deg,#c78c02 76deg,#c78a02 76.5deg,#c78702 77deg,#c78502 77.5deg,#c78202 78deg,#c78002 78.5deg,#c77d02 79deg,#c77b02 79.5deg,#c77802 80deg,#c77502 80.5deg,#c77202 81deg,#c76f02 81.5deg,#c76c02 82deg,#c76902 82.5deg,#c76602 83deg,#c76302 83.5deg,#c75f02 84deg,#c75b02 84.5deg,#c75802 85deg,#c75302 85.5deg,#c74f02 86deg,#c74a02 86.5deg,#c74502 87deg,#c74002 87.5deg,#c73902 88deg,#c73202 88.5deg,#c72902 89deg,#c71d02 89.5deg,#c7030c 90deg,#c70320 90.5deg,#c7032b 91deg,#c70333 91.5deg,#c70339 92deg,#c7033f 92.5deg,#c70344 93deg,#c70348 93.5deg,#c7034c 94deg,#c70350 94.5deg,#c70353 95deg,#c70356 95.5deg,#c70359 96deg,#c7035c 96.5deg,#c7035f 97deg,#c70361 97.5deg,#c70363 98deg,#c70366 98.5deg,#c70368 99deg,#c7036a 99.5deg,#c7036c 100deg,#c7036e 100.5deg,#c7036f 101deg,#c70371 101.5deg,#c70373 102deg,#c70374 102.5deg,#c70376 103deg,#c70377 103.5deg,#c70379 104deg,#c7037a 104.5deg,#c7037b 105deg,#c7037d 105.5deg,#c7037e 106deg,#c7037f 106.5deg,#c70380 107deg,#c70381 107.5deg,#c70383 108deg,#c70384 108.5deg,#c70385 109deg,#c70386 109.5deg,#c70387 110deg,#c70388 110.5deg,#c70389 111deg,#c7038a 111.5deg,#c7038b 112deg,#c7038c 112.5deg,#c7038c 113deg,#c7038d 113.5deg,#c7038e 114deg,#c7038f 114.5deg,#c70390 115deg,#c70391 115.5deg,#c70391 116deg,#c70392 116.5deg,#c70393 117deg,#c70394 117.5deg,#c70394 118deg,#c70395 118.5deg,#c70396 119deg,#c70397 119.5deg,#c70397 120deg,#c70398 120.5deg,#c70399 121deg,#c70399 121.5deg,#c7039a 122deg,#c7039b 122.5deg,#c7039b 123deg,#c7039c 123.5deg,#c7039c 124deg,#c7039d 124.5deg,#c7039e 125deg,#c7039e 125.5deg,#c7039f 126deg,#c7039f 126.5deg,#c703a0 127deg,#c703a0 127.5deg,#c703a1 128deg,#c703a2 128.5deg,#c703a2 129deg,#c703a3 129.5deg,#c703a3 130deg,#c703a4 130.5deg,#c703a4 131deg,#c703a5 131.5deg,#c703a5 132deg,#c703a6 132.5deg,#c703a6 133deg,#c703a7 133.5deg,#c703a7 134deg,#c703a8 134.5deg,#c703a8 135deg,#c703a9 135.5deg,#c703a9 136deg,#c703aa 136.5deg,#c703aa 137deg,#c703aa 137.5deg,#c703ab 138deg,#c703ab 138.5deg,#c703ac 139deg,#c703ac 139.5deg,#c703ad 140deg,#c703ad 140.5deg,#c703ae 141deg,#c703ae 141.5deg,#c703ae 142deg,#c703af 142.5deg,#c703af 143deg,#c703b0 143.5deg,#c703b0 144deg,#c703b1 144.5deg,#c703b1 145deg,#c703b1 145.5deg,#c703b2 146deg,#c703b2 146.5deg,#c703b3 147deg,#c703b3 147.5deg,#c703b4 148deg,#c703b4 148.5deg,#c703b4 149deg,#c703b5 149.5deg,#c703b5 150deg,#c703b6 150.5deg,#c703b6 151deg,#c703b6 151.5deg,#c703b7 152deg,#c703b7 152.5deg,#c703b8 153deg,#c703b8 153.5deg,#c703b8 154deg,#c703b9 154.5deg,#c703b9 155deg,#c703ba 155.5deg,#c703ba 156deg,#c703ba 156.5deg,#c703bb 157deg,#c703bb 157.5deg,#c703bc 158deg,#c703bc 158.5deg,#c703bc 159deg,#c703bd 159.5deg,#c703bd 160deg,#c703be 160.5deg,#c703be 161deg,#c703be 161.5deg,#c703bf 162deg,#c703bf 162.5deg,#c703c0 163deg,#c703c0 163.5deg,#c703c0 164deg,#c703c1 164.5deg,#c703c1 165deg,#c703c1 165.5deg,#c703c2 166deg,#c703c2 166.5deg,#c703c3 167deg,#c703c3 167.5deg,#c703c4 168deg,#c703c4 168.5deg,#c703c4 169deg,#c703c5 169.5deg,#c703c5 170deg,#c703c6 170.5deg,#c703c6 171deg,#c703c6 171.5deg,#c703c7 172deg,#c703c7 172.5deg,#c603c7 173deg,#c603c7 173.5deg,#c503c7 174deg,#c503c7 174.5deg,#c403c7 175deg,#c403c7 175.5deg,#c403c7 176deg,#c303c7 176.5deg,#c303c7 177deg,#c203c7 177.5deg,#c203c7 178deg,#c203c7 178.5deg,#c103c7 179deg,#c103c7 179.5deg,#c003c7 180deg,#c003c7 180.5deg,#bf03c7 181deg,#bf03c7 181.5deg,#bf03c7 182deg,#be03c7 182.5deg,#be03c7 183deg,#bd03c7 183.5deg,#bd03c7 184deg,#bc03c7 184.5deg,#bc03c7 185deg,#bb03c7 185.5deg,#bb03c7 186deg,#bb03c7 186.5deg,#ba03c7 187deg,#ba03c7 187.5deg,#b903c7 188deg,#b903c7 188.5deg,#b803c7 189deg,#b803c7 189.5deg,#b703c7 190deg,#b703c7 190.5deg,#b603c7 191deg,#b603c7 191.5deg,#b503c7 192deg,#b503c7 192.5deg,#b503c7 193deg,#b403c7 193.5deg,#b403c7 194deg,#b303c7 194.5deg,#b303c7 195deg,#b203c7 195.5deg,#b203c7 196deg,#b103c7 196.5deg,#b103c7 197deg,#b003c7 197.5deg,#af03c7 198deg,#af03c7 198.5deg,#ae03c7 199deg,#ae03c7 199.5deg,#ad03c7 200deg,#ad03c7 200.5deg,#ac03c7 201deg,#ac03c7 201.5deg,#ab03c7 202deg,#ab03c7 202.5deg,#aa03c7 203deg,#a903c7 203.5deg,#a903c7 204deg,#a803c7 204.5deg,#a803c7 205deg,#a703c7 205.5deg,#a603c7 206deg,#a603c7 206.5deg,#a503c7 207deg,#a403c7 207.5deg,#a403c7 208deg,#a302c7 208.5deg,#a202c7 209deg,#a202c7 209.5deg,#a102c7 210deg,#a002c7 210.5deg,#a002c7 211deg,#9f02c7 211.5deg,#9e02c7 212deg,#9d02c7 212.5deg,#9d02c7 213deg,#9c02c7 213.5deg,#9b02c7 214deg,#9a02c7 214.5deg,#9902c7 215deg,#9802c7 215.5deg,#9802c7 216deg,#9702c7 216.5deg,#9602c7 217deg,#9502c7 217.5deg,#9402c7 218deg,#9302c7 218.5deg,#9202c7 219deg,#9102c7 219.5deg,#9002c7 220deg,#8f02c7 220.5deg,#8e02c7 221deg,#8d02c7 221.5deg,#8c02c7 222deg,#8b02c7 222.5deg,#8902c7 223deg,#8802c7 223.5deg,#8702c7 224deg,#8602c7 224.5deg,#8402c7 225deg,#8302c7 225.5deg,#8102c7 226deg,#8002c7 226.5deg,#7f02c7 227deg,#7d02c7 227.5deg,#7b02c7 228deg,#7a02c7 228.5deg,#7802c7 229deg,#7602c7 229.5deg,#7402c7 230deg,#7202c7 230.5deg,#7002c7 231deg,#6e02c7 231.5deg,#6c02c7 232deg,#6a02c7 232.5deg,#6702c7 233deg,#6501c7 233.5deg,#6201c7 234deg,#5f01c7 234.5deg,#5c01c7 235deg,#5901c7 235.5deg,#5501c7 236deg,#5201c7 236.5deg,#4e01c7 237deg,#4901c7 237.5deg,#4401c7 238deg,#3e01c7 238.5deg,#3801c7 239deg,#3001c7 239.5deg,#2600c7 240deg,#1500c7 240.5deg,#001ac7 241deg,#0029c7 241.5deg,#0033c7 242deg,#003bc7 242.5deg,#0041c7 243deg,#0047c7 243.5deg,#004dc7 244deg,#0052c7 244.5deg,#0056c7 245deg,#005bc7 245.5deg,#005fc7 246deg,#0062c7 246.5deg,#0066c7 247deg,#006ac7 247.5deg,#006dc7 248deg,#0070c7 248.5deg,#0073c7 249deg,#0076c7 249.5deg,#0079c7 250deg,#007cc7 250.5deg,#007fc7 251deg,#0081c7 251.5deg,#0084c7 252deg,#0086c7 252.5deg,#0089c7 253deg,#008bc7 253.5deg,#008dc7 254deg,#0090c7 254.5deg,#0092c7 255deg,#0094c7 255.5deg,#0096c7 256deg,#0098c7 256.5deg,#009ac7 257deg,#009cc7 257.5deg,#009ec7 258deg,#00a0c7 258.5deg,#00a2c7 259deg,#00a4c7 259.5deg,#00a6c7 260deg,#00a8c7 260.5deg,#00aac7 261deg,#00abc7 261.5deg,#00adc7 262deg,#00afc7 262.5deg,#00b1c7 263deg,#00b2c7 263.5deg,#00b4c7 264deg,#00b6c7 264.5deg,#00b7c7 265deg,#00b9c7 265.5deg,#00bbc7 266deg,#00bcc7 266.5deg,#00bec7 267deg,#00bfc7 267.5deg,#00c1c7 268deg,#00c2c7 268.5deg,#00c4c7 269deg,#00c6c7 269.5deg,#00c7c7 270deg,#00c7c5 270.5deg,#00c7c4 271deg,#00c7c2 271.5deg,#00c7c1 272deg,#00c7c0 272.5deg,#00c7be 273deg,#00c7bd 273.5deg,#00c7bc 274deg,#00c7ba 274.5deg,#00c7b9 275deg,#00c7b8 275.5deg,#00c7b7 276deg,#00c7b5 276.5deg,#00c7b4 277deg,#00c7b3 277.5deg,#00c7b2 278deg,#00c7b1 278.5deg,#00c7b0 279deg,#00c7af 279.5deg,#00c7ae 280deg,#00c7ad 280.5deg,#00c7ab 281deg,#00c7aa 281.5deg,#00c7a9 282deg,#00c7a8 282.5deg,#00c7a7 283deg,#00c7a6 283.5deg,#00c7a5 284deg,#00c7a5 284.5deg,#00c7a4 285deg,#00c7a3 285.5deg,#00c7a2 286deg,#00c7a1 286.5deg,#00c7a0 287deg,#00c79f 287.5deg,#00c79e 288deg,#00c79d 288.5deg,#00c79c 289deg,#00c79c 289.5deg,#00c79b 290deg,#00c79a 290.5deg,#00c799 291deg,#00c798 291.5deg,#00c797 292deg,#00c796 292.5deg,#00c796 293deg,#00c795 293.5deg,#00c794 294deg,#00c793 294.5deg,#00c792 295deg,#00c792 295.5deg,#00c791 296deg,#00c790 296.5deg,#00c78f 297deg,#00c78f 297.5deg,#00c78e 298deg,#00c78d 298.5deg,#00c78c 299deg,#00c78c 299.5deg,#00c78b 300deg,#00c78a 300.5deg,#00c789 301deg,#00c788 301.5deg,#00c788 302deg,#00c787 302.5deg,#00c786 303deg,#00c786 303.5deg,#00c785 304deg,#00c784 304.5deg,#00c783 305deg,#00c783 305.5deg,#00c782 306deg,#00c781 306.5deg,#00c780 307deg,#00c780 307.5deg,#00c77f 308deg,#00c77e 308.5deg,#00c77d 309deg,#00c77d 309.5deg,#00c77c 310deg,#00c77b 310.5deg,#00c77b 311deg,#00c77a 311.5deg,#00c779 312deg,#00c778 312.5deg,#00c778 313deg,#00c777 313.5deg,#00c776 314deg,#00c775 314.5deg,#00c775 315deg,#00c774 315.5deg,#00c773 316deg,#00c772 316.5deg,#00c772 317deg,#00c771 317.5deg,#00c770 318deg,#00c76f 318.5deg,#00c76f 319deg,#00c76e 319.5deg,#00c76d 320deg,#00c76c 320.5deg,#00c76c 321deg,#00c76b 321.5deg,#00c76a 322deg,#00c769 322.5deg,#00c768 323deg,#00c768 323.5deg,#00c767 324deg,#00c766 324.5deg,#00c765 325deg,#00c764 325.5deg,#00c764 326deg,#00c763 326.5deg,#00c762 327deg,#00c761 327.5deg,#00c760 328deg,#00c75f 328.5deg,#00c75e 329deg,#00c75d 329.5deg,#00c75d 330deg,#00c75c 330.5deg,#00c75b 331deg,#00c75a 331.5deg,#00c759 332deg,#00c758 332.5deg,#00c757 333deg,#00c756 333.5deg,#00c755 334deg,#00c754 334.5deg,#00c753 335deg,#00c752 335.5deg,#00c751 336deg,#00c750 336.5deg,#00c74f 337deg,#00c74d 337.5deg,#00c74c 338deg,#00c74b 338.5deg,#00c74a 339deg,#00c749 339.5deg,#00c747 340deg,#00c746 340.5deg,#00c745 341deg,#00c743 341.5deg,#00c742 342deg,#00c741 342.5deg,#00c73f 343deg,#00c73e 343.5deg,#00c73c 344deg,#00c73a 344.5deg,#00c739 345deg,#00c737 345.5deg,#00c735 346deg,#00c733 346.5deg,#00c731 347deg,#00c72f 347.5deg,#00c72d 348deg,#00c72a 348.5deg,#00c727 349deg,#00c725 349.5deg,#00c721 350deg,#00c71e 350.5deg,#00c719 351deg,#00c713 351.5deg,#00c70a 352deg,#0fc701 352.5deg,#16c701 353deg,#1bc701 353.5deg,#1fc701 354deg,#23c701 354.5deg,#26c701 355deg,#29c701 355.5deg,#2cc701 356deg,#2ec701 356.5deg,#30c701 357deg,#33c701 357.5deg,#35c701 358deg,#37c701 358.5deg,#38c701 359deg,#3ac701 359.5deg,#3cc701 360deg)"></div>
<div class="a" style="left:0;top:0;width:1490px;height:564px;clip-path:polygon(400px 268px,566.4px 268px,433.2px 430px,400px 430px)">
<div class="a" style="left:556px;top:274px;width:7px;height:2px;background:linear-gradient(90deg,#00c77b 0px,#0bc77a 4px,#1dc779 7px)"></div>
<div class="a" style="left:541px;top:276px;width:20px;height:2px;background:linear-gradient(90deg,#00c783 0px,#00c780 7px,#00c77d 13px,#24c77c 20px)"></div>
<div class="a" style="left:529px;top:278px;width:31px;height:2px;background:linear-gradient(90deg,#00c788 0px,#00c785 8px,#00c783 16px,#0dc77f 23px,#2dc77f 31px)"></div>
<div class="a" style="left:518px;top:280px;width:40px;height:2px;background:linear-gradient(90deg,#00c78d 0px,#00c78b 7px,#00c789 13px,#00c786 20px,#00c784 27px,#1fc782 33px,#32c782 40px)"></div>
<div class="a" style="left:508px;top:282px;width:48px;height:2px;background:linear-gradient(90deg,#00c791 0px,#00c78f 7px,#00c78d 14px,#00c78b 21px,#00c788 27px,#00c786 34px,#26c785 41px,#37c785 48px)"></div>
<div class="a" style="left:499px;top:284px;width:56px;height:2px;background:linear-gradient(90deg,#00c794 0px,#00c792 7px,#00c790 14px,#00c78e 21px,#00c78c 28px,#00c78a 35px,#15c788 42px,#2ec788 49px,#3dc788 56px)"></div>
<div class="a" style="left:491px;top:286px;width:62px;height:2px;background:linear-gradient(90deg,#00c797 0px,#00c795 8px,#00c793 16px,#00c791 23px,#00c78f 31px,#00c78c 39px,#18c78b 46px,#32c78b 54px,#41c78b 62px)"></div>
<div class="a" style="left:484px;top:288px;width:67px;height:2px;background:linear-gradient(90deg,#00c799 0px,#00c798 7px,#00c796 15px,#00c794 22px,#00c792 30px,#00c790 37px,#00c78e 45px,#23c78d 52px,#37c78d 60px,#44c78e 67px)"></div>
<div class="a" style="left:477px;top:290px;width:73px;height:2px;background:linear-gradient(90deg,#00c79c 0px,#00c79a 7px,#00c799 15px,#00c797 22px,#00c795 29px,#00c794 36px,#00c792 44px,#09c78f 51px,#2dc790 58px,#3dc790 66px,#49c790 73px)"></div>
<div class="a" style="left:471px;top:292px;width:77px;height:2px;background:linear-gradient(90deg,#00c79e 0px,#00c79c 8px,#00c79b 15px,#00c799 23px,#00c798 31px,#00c796 38px,#00c794 46px,#11c792 54px,#30c792 62px,#41c793 69px,#4dc793 77px)"></div>
<div class="a" style="left:465px;top:294px;width:82px;height:2px;background:linear-gradient(90deg,#00c7a0 0px,#00c79f 7px,#00c79d 15px,#00c79c 22px,#00c79a 30px,#00c799 37px,#00c797 45px,#00c795 52px,#24c794 60px,#38c795 67px,#46c795 75px,#51c795 82px)"></div>
<div class="a" style="left:460px;top:296px;width:85px;height:2px;background:linear-gradient(90deg,#00c7a2 0px,#00c7a0 8px,#00c79f 15px,#00c79e 23px,#00c79c 31px,#00c79b 39px,#00c799 46px,#00c797 54px,#27c797 62px,#3bc797 70px,#49c798 77px,#54c798 85px)"></div>
<div class="a" style="left:455px;top:298px;width:88px;height:2px;background:linear-gradient(90deg,#00c7a3 0px,#00c7a2 7px,#00c7a1 15px,#00c7a0 22px,#00c79f 29px,#00c79d 37px,#00c79c 44px,#00c79a 51px,#0dc799 59px,#30c799 66px,#40c799 73px,#4dc79a 81px,#57c79a 88px)"></div>
<div class="a" style="left:450px;top:300px;width:92px;height:2px;background:linear-gradient(90deg,#00c7a5 0px,#00c7a4 8px,#00c7a3 15px,#00c7a2 23px,#00c7a1 31px,#00c79f 38px,#00c79e 46px,#00c79c 54px,#17c79b 61px,#34c79b 69px,#44c79c 77px,#51c79c 84px,#5bc79d 92px)"></div>
<div class="a" style="left:446px;top:302px;width:94px;height:2px;background:linear-gradient(90deg,#00c7a7 0px,#00c7a6 8px,#00c7a5 16px,#00c7a4 24px,#00c7a2 31px,#00c7a1 39px,#00c79f 47px,#00c79e 55px,#1cc79d 63px,#37c79d 70px,#47c79e 78px,#53c79e 86px,#5ec79f 94px)"></div>
<div class="a" style="left:442px;top:304px;width:96px;height:2px;background:linear-gradient(90deg,#00c7a8 0px,#00c7a8 7px,#00c7a7 15px,#00c7a6 22px,#00c7a4 30px,#00c7a3 37px,#00c7a2 44px,#00c7a1 52px,#00c79f 59px,#29c79f 66px,#3dc7a0 74px,#4bc7a0 81px,#57c7a1 89px,#60c7a1 96px)"></div>
<div class="a" style="left:438px;top:306px;width:99px;height:2px;background:linear-gradient(90deg,#00c7aa 0px,#00c7a9 8px,#00c7a8 15px,#00c7a7 23px,#00c7a6 30px,#00c7a5 38px,#00c7a4 46px,#00c7a2 53px,#00c7a1 61px,#2ec7a1 69px,#41c7a2 76px,#4fc7a2 84px,#5ac7a3 91px,#64c7a3 99px)"></div>
<div class="a" style="left:434px;top:308px;width:101px;height:2px;background:linear-gradient(90deg,#00c7ab 0px,#00c7ab 8px,#00c7aa 16px,#00c7a9 23px,#00c7a8 31px,#00c7a7 39px,#00c7a5 47px,#00c7a4 54px,#00c7a3 62px,#30c7a3 70px,#43c7a4 78px,#51c7a4 85px,#5cc7a5 93px,#66c7a5 101px)"></div>
<div class="a" style="left:431px;top:310px;width:102px;height:2px;background:linear-gradient(90deg,#00c7ad 0px,#00c7ac 8px,#00c7ab 16px,#00c7aa 24px,#00c7a9 31px,#00c7a8 39px,#00c7a7 47px,#00c7a6 55px,#00c7a5 63px,#32c7a5 71px,#45c7a6 78px,#53c7a6 86px,#5ec7a7 94px,#68c7a7 102px)"></div>
<div class="a" style="left:428px;top:312px;width:104px;height:2px;background:linear-gradient(90deg,#00c7ae 0px,#00c7ae 7px,#00c7ad 15px,#00c7ac 22px,#00c7ab 30px,#00c7aa 37px,#00c7a9 45px,#00c7a8 52px,#00c7a7 59px,#24c7a7 67px,#3cc7a7 74px,#4cc7a8 82px,#58c7a8 89px,#62c7a9 97px,#6bc7a9 104px)"></div>
<div class="a" style="left:425px;top:314px;width:105px;height:2px;background:linear-gradient(90deg,#00c7b0 0px,#00c7af 8px,#00c7ae 15px,#00c7ad 22px,#00c7ad 30px,#00c7ac 38px,#00c7ab 45px,#00c7aa 52px,#00c7a9 60px,#26c7a8 68px,#3ec7a9 75px,#4dc7aa 82px,#5ac7aa 90px,#64c7ab 98px,#6dc7ab 105px)"></div>
<div class="a" style="left:422px;top:316px;width:106px;height:2px;background:linear-gradient(90deg,#00c7b1 0px,#00c7b0 8px,#00c7b0 15px,#00c7af 23px,#00c7ae 30px,#00c7ad 38px,#00c7ac 45px,#00c7ac 53px,#00c7aa 61px,#27c7aa 68px,#3fc7ab 76px,#4fc7ab 83px,#5bc7ac 91px,#66c7ad 98px,#6fc7ad 106px)"></div>
<div class="a" style="left:419px;top:318px;width:108px;height:2px;background:linear-gradient(90deg,#00c7b2 0px,#00c7b2 8px,#00c7b1 15px,#00c7b0 23px,#00c7b0 31px,#00c7af 39px,#00c7ae 46px,#00c7ad 54px,#00c7ac 62px,#2bc7ac 69px,#42c7ad 77px,#51c7ad 85px,#5ec7ae 93px,#68c7ae 100px,#72c7af 108px)"></div>
<div class="a" style="left:417px;top:320px;width:108px;height:2px;background:linear-gradient(90deg,#00c7b4 0px,#00c7b3 8px,#00c7b3 15px,#00c7b2 23px,#00c7b1 31px,#00c7b0 39px,#00c7b0 46px,#00c7af 54px,#00c7ae 62px,#2dc7ae 69px,#43c7ae 77px,#52c7af 85px,#5fc7b0 93px,#6ac7b0 100px,#73c7b1 108px)"></div>
<div class="a" style="left:415px;top:322px;width:108px;height:2px;background:linear-gradient(90deg,#00c7b5 0px,#00c7b4 8px,#00c7b4 15px,#00c7b3 23px,#00c7b3 31px,#00c7b2 39px,#00c7b1 46px,#00c7b0 54px,#00c7b0 62px,#2ec7b0 69px,#44c7b0 77px,#54c7b1 85px,#60c7b1 93px,#6bc7b2 100px,#74c7b2 108px)"></div>
<div class="a" style="left:413px;top:324px;width:109px;height:2px;background:linear-gradient(90deg,#00c7b6 0px,#00c7b6 8px,#00c7b5 16px,#00c7b5 23px,#00c7b4 31px,#00c7b3 39px,#00c7b3 47px,#00c7b2 54px,#00c7b1 62px,#31c7b1 70px,#47c7b2 78px,#56c7b2 86px,#62c7b3 93px,#6dc7b4 101px,#76c7b4 109px)"></div>
<div class="a" style="left:411px;top:326px;width:109px;height:2px;background:linear-gradient(90deg,#00c7b8 0px,#00c7b7 8px,#00c7b7 16px,#00c7b6 23px,#00c7b6 31px,#00c7b5 39px,#00c7b4 47px,#00c7b4 54px,#00c7b3 62px,#32c7b3 70px,#47c7b4 78px,#57c7b4 86px,#63c7b5 93px,#6ec7b5 101px,#77c7b6 109px)"></div>
<div class="a" style="left:409px;top:328px;width:110px;height:2px;background:linear-gradient(90deg,#00c7b9 0px,#00c7b9 8px,#00c7b8 16px,#00c7b8 24px,#00c7b7 31px,#00c7b6 39px,#00c7b6 47px,#00c7b5 55px,#00c7b5 63px,#34c7b5 71px,#49c7b5 79px,#59c7b6 86px,#65c7b6 94px,#70c7b7 102px,#79c7b7 110px)"></div>
<div class="a" style="left:408px;top:330px;width:109px;height:2px;background:linear-gradient(90deg,#00c7ba 0px,#00c7ba 8px,#00c7b9 16px,#00c7b9 23px,#00c7b8 31px,#00c7b8 39px,#00c7b7 47px,#00c7b7 54px,#00c7b6 62px,#35c7b7 70px,#4ac7b7 78px,#59c7b7 86px,#66c7b8 93px,#70c7b8 101px,#7ac7b9 109px)"></div>
<div class="a" style="left:406px;top:332px;width:109px;height:2px;background:linear-gradient(90deg,#00c7bc 0px,#00c7bb 8px,#00c7bb 16px,#00c7ba 23px,#00c7ba 31px,#00c7ba 39px,#00c7b9 47px,#00c7b9 54px,#00c7b8 62px,#34c7b8 70px,#4ac7b9 78px,#59c7b9 86px,#66c7b9 93px,#71c7ba 101px,#7ac7ba 109px)"></div>
<div class="a" style="left:405px;top:334px;width:109px;height:2px;background:linear-gradient(90deg,#00c7bd 0px,#00c7bd 8px,#00c7bc 16px,#00c7bc 23px,#00c7bb 31px,#00c7bb 39px,#00c7bb 47px,#00c7ba 54px,#00c7ba 62px,#37c7ba 70px,#4bc7ba 78px,#5bc7bb 86px,#67c7bb 93px,#72c7bb 101px,#7cc7bc 109px)"></div>
<div class="a" style="left:404px;top:336px;width:108px;height:2px;background:linear-gradient(90deg,#00c7be 0px,#00c7be 8px,#00c7be 15px,#00c7bd 23px,#00c7bd 31px,#00c7bd 39px,#00c7bc 46px,#00c7bc 54px,#00c7bb 62px,#36c7bc 69px,#4bc7bc 77px,#5bc7bc 85px,#68c7bd 93px,#72c7bd 100px,#7cc7bd 108px)"></div>
<div class="a" style="left:403px;top:338px;width:107px;height:2px;background:linear-gradient(90deg,#00c7bf 0px,#00c7bf 8px,#00c7bf 15px,#00c7bf 23px,#00c7be 31px,#00c7be 38px,#00c7be 46px,#00c7bd 54px,#00c7bd 61px,#36c7bd 69px,#4bc7be 76px,#5bc7be 84px,#67c7be 92px,#72c7be 99px,#7cc7bf 107px)"></div>
<div class="a" style="left:403px;top:340px;width:106px;height:2px;background:linear-gradient(90deg,#00c7c1 0px,#00c7c1 8px,#00c7c0 15px,#00c7c0 23px,#00c7c0 30px,#00c7c0 38px,#00c7bf 45px,#00c7bf 53px,#08c7bf 61px,#38c7bf 68px,#4dc7bf 76px,#5cc7bf 83px,#69c7c0 91px,#73c7c0 98px,#7dc7c0 106px)"></div>
<div class="a" style="left:402px;top:342px;width:105px;height:2px;background:linear-gradient(90deg,#00c7c2 0px,#00c7c2 8px,#00c7c2 15px,#00c7c2 22px,#00c7c1 30px,#00c7c1 38px,#00c7c1 45px,#00c7c1 52px,#00c7c1 60px,#37c7c1 68px,#4cc7c1 75px,#5bc7c1 82px,#68c7c1 90px,#73c7c1 98px,#7dc7c2 105px)"></div>
<div class="a" style="left:402px;top:344px;width:103px;height:2px;background:linear-gradient(90deg,#00c7c3 0px,#00c7c3 8px,#00c7c3 16px,#00c7c3 24px,#00c7c3 32px,#00c7c3 40px,#00c7c3 48px,#00c7c3 55px,#2bc7c2 63px,#46c7c3 71px,#58c7c3 79px,#66c7c3 87px,#72c7c3 95px,#7cc7c3 103px)"></div>
<div class="a" style="left:401px;top:346px;width:103px;height:2px;background:linear-gradient(90deg,#00c7c5 0px,#00c7c5 8px,#00c7c5 16px,#00c7c5 24px,#00c7c5 32px,#00c7c4 40px,#00c7c4 48px,#00c7c4 55px,#2bc7c4 63px,#46c7c4 71px,#58c7c4 79px,#66c7c5 87px,#72c7c5 95px,#7dc7c5 103px)"></div>
<div class="a" style="left:401px;top:348px;width:101px;height:2px;background:linear-gradient(90deg,#00c7c6 0px,#00c7c6 8px,#00c7c6 16px,#00c7c6 23px,#00c7c6 31px,#00c7c6 39px,#00c7c6 47px,#00c7c6 54px,#2ac7c6 62px,#45c7c6 70px,#57c7c6 78px,#65c7c6 85px,#71c7c6 93px,#7cc7c6 101px)"></div>
<div class="a" style="left:401px;top:350px;width:99px;height:2px;background:linear-gradient(90deg,#00c6c7 0px,#00c6c7 8px,#00c6c7 15px,#00c6c7 23px,#00c6c7 30px,#00c6c7 38px,#00c6c7 46px,#00c6c7 53px,#28c6c7 61px,#44c6c7 69px,#56c6c7 76px,#64c6c7 84px,#70c6c7 91px,#7ac6c7 99px)"></div>
<div class="a" style="left:401px;top:352px;width:98px;height:2px;background:linear-gradient(90deg,#00c5c7 0px,#00c5c7 8px,#00c5c7 15px,#00c4c7 23px,#00c4c7 30px,#00c4c7 38px,#00c4c7 45px,#00c4c7 53px,#28c4c7 60px,#43c4c7 68px,#55c4c7 75px,#63c4c7 83px,#6fc4c7 90px,#79c4c7 98px)"></div>
<div class="a" style="left:402px;top:354px;width:95px;height:2px;background:linear-gradient(90deg,#00c3c7 0px,#00c3c7 8px,#00c3c7 16px,#00c3c7 24px,#00c3c7 32px,#00c2c7 40px,#00c2c7 48px,#0cc2c7 55px,#3ac2c7 63px,#4fc2c7 71px,#5fc2c7 79px,#6cc3c7 87px,#77c3c7 95px)"></div>
<div class="a" style="left:402px;top:356px;width:94px;height:2px;background:linear-gradient(90deg,#00c2c7 0px,#00c2c7 8px,#00c1c7 16px,#00c1c7 24px,#00c1c7 31px,#00c1c7 39px,#00c0c7 47px,#0bc0c7 55px,#3ac0c7 63px,#4fc0c7 70px,#5ec1c7 78px,#6bc1c7 86px,#76c1c7 94px)"></div>
<div class="a" style="left:403px;top:358px;width:91px;height:2px;background:linear-gradient(90deg,#00c0c7 0px,#00c0c7 8px,#00c0c7 15px,#00bfc7 23px,#00bfc7 30px,#00bfc7 38px,#00bfc7 46px,#00bec7 53px,#38bec7 61px,#4cbfc7 68px,#5cbfc7 76px,#68bfc7 83px,#73bfc7 91px)"></div>
<div class="a" style="left:404px;top:360px;width:88px;height:2px;background:linear-gradient(90deg,#00bfc7 0px,#00bec7 7px,#00bec7 15px,#00bec7 22px,#00bdc7 29px,#00bdc7 37px,#00bdc7 44px,#00bcc7 51px,#35bdc7 59px,#4abdc7 66px,#59bdc7 73px,#66bdc7 81px,#70bec7 88px)"></div>
<div class="a" style="left:404px;top:362px;width:87px;height:2px;background:linear-gradient(90deg,#00bdc7 0px,#00bdc7 8px,#00bcc7 16px,#00bcc7 24px,#00bcc7 32px,#00bbc7 40px,#00bbc7 47px,#29bbc7 55px,#44bbc7 63px,#55bbc7 71px,#63bbc7 79px,#6fbcc7 87px)"></div>
<div class="a" style="left:406px;top:364px;width:83px;height:2px;background:linear-gradient(90deg,#00bcc7 0px,#00bbc7 8px,#00bbc7 15px,#00bac7 23px,#00bac7 30px,#00b9c7 38px,#00b9c7 45px,#27b9c7 53px,#41b9c7 60px,#53b9c7 68px,#60bac7 75px,#6cbac7 83px)"></div>
<div class="a" style="left:407px;top:366px;width:80px;height:2px;background:linear-gradient(90deg,#00bac7 0px,#00bac7 7px,#00b9c7 15px,#00b9c7 22px,#00b8c7 29px,#00b7c7 36px,#00b7c7 44px,#23b7c7 51px,#3eb7c7 58px,#50b7c7 65px,#5db8c7 73px,#68b8c7 80px)"></div>
<div class="a" style="left:408px;top:368px;width:78px;height:2px;background:linear-gradient(90deg,#00b8c7 0px,#00b8c7 8px,#00b7c7 16px,#00b7c7 23px,#00b6c7 31px,#00b5c7 39px,#00b4c7 47px,#37b5c7 55px,#4bb5c7 62px,#5ab6c7 70px,#66b6c7 78px)"></div>
<div class="a" style="left:410px;top:370px;width:74px;height:2px;background:linear-gradient(90deg,#00b7c7 0px,#00b6c7 7px,#00b5c7 15px,#00b5c7 22px,#00b4c7 30px,#00b3c7 37px,#00b3c7 44px,#34b3c7 52px,#48b3c7 59px,#57b4c7 67px,#63b4c7 74px)"></div>
<div class="a" style="left:411px;top:372px;width:71px;height:2px;background:linear-gradient(90deg,#00b5c7 0px,#00b4c7 8px,#00b3c7 16px,#00b3c7 24px,#00b2c7 32px,#00b1c7 39px,#25b1c7 47px,#40b1c7 55px,#52b1c7 63px,#5fb2c7 71px)"></div>
<div class="a" style="left:413px;top:374px;width:68px;height:2px;background:linear-gradient(90deg,#00b3c7 0px,#00b2c7 8px,#00b2c7 15px,#00b1c7 23px,#00b0c7 30px,#00afc7 38px,#25afc7 45px,#3fafc7 53px,#50afc7 60px,#5db0c7 68px)"></div>
<div class="a" style="left:415px;top:376px;width:64px;height:2px;background:linear-gradient(90deg,#00b1c7 0px,#00b0c7 7px,#00b0c7 14px,#00afc7 21px,#00aec7 28px,#00adc7 36px,#20acc7 43px,#3badc7 50px,#4cadc7 57px,#59aec7 64px)"></div>
<div class="a" style="left:418px;top:378px;width:59px;height:2px;background:linear-gradient(90deg,#00afc7 0px,#00aec7 7px,#00adc7 15px,#00acc7 22px,#00abc7 30px,#00aac7 37px,#33aac7 44px,#46abc7 52px,#55abc7 59px)"></div>
<div class="a" style="left:420px;top:380px;width:56px;height:2px;background:linear-gradient(90deg,#00adc7 0px,#00acc7 7px,#00abc7 14px,#00aac7 21px,#00a9c7 28px,#00a8c7 35px,#31a8c7 42px,#44a9c7 49px,#52a9c7 56px)"></div>
<div class="a" style="left:423px;top:382px;width:51px;height:2px;background:linear-gradient(90deg,#00abc7 0px,#00aac7 7px,#00a9c7 15px,#00a8c7 22px,#00a6c7 29px,#26a6c7 36px,#3da6c7 44px,#4da7c7 51px)"></div>
<div class="a" style="left:426px;top:384px;width:46px;height:2px;background:linear-gradient(90deg,#00a9c7 0px,#00a8c7 8px,#00a6c7 15px,#00a5c7 23px,#12a3c7 31px,#36a4c7 38px,#48a4c7 46px)"></div>
<div class="a" style="left:429px;top:386px;width:42px;height:2px;background:linear-gradient(90deg,#00a6c7 0px,#00a5c7 7px,#00a4c7 14px,#00a2c7 21px,#12a1c7 28px,#34a2c7 35px,#45a2c7 42px)"></div>
<div class="a" style="left:432px;top:388px;width:37px;height:2px;background:linear-gradient(90deg,#00a4c7 0px,#00a2c7 7px,#00a1c7 15px,#009fc7 22px,#2a9fc7 30px,#3f9fc7 37px)"></div>
<div class="a" style="left:435px;top:390px;width:33px;height:2px;background:linear-gradient(90deg,#00a1c7 0px,#00a0c7 7px,#009ec7 13px,#009dc7 20px,#289dc7 26px,#3c9dc7 33px)"></div>
<div class="a" style="left:439px;top:392px;width:27px;height:2px;background:linear-gradient(90deg,#009ec7 0px,#009dc7 7px,#009bc7 14px,#1b9ac7 20px,#359ac7 27px)"></div>
<div class="a" style="left:443px;top:394px;width:21px;height:2px;background:linear-gradient(90deg,#009bc7 0px,#0099c7 7px,#0097c7 14px,#2e98c7 21px)"></div>
<div class="a" style="left:447px;top:396px;width:16px;height:2px;background:linear-gradient(90deg,#0098c7 0px,#0096c7 5px,#0095c7 11px,#2995c7 16px)"></div>
<div class="a" style="left:452px;top:398px;width:9px;height:2px;background:linear-gradient(90deg,#0094c7 0px,#0093c7 4px,#1e92c7 9px)"></div>
<div class="a" style="left:457px;top:400px;width:2px;height:2px;background:linear-gradient(90deg,#1090c7 0px,#1690c7 1px,#1b90c7 2px)"></div>
</div>
<svg class="a" style="left:0;top:0" width="1490" height="564" viewBox="400 442 1490 564">
<path d="M526.5 442V1006M691.8 442V1006M857.1 442V1006M1022.4 442V1006M1187.7 442V1006M1353.0 442V1006M1518.3 442V1006M1683.6 442V1006M400 920.2H1890M400 864.1H1890M400 807.9H1890M400 751.8H1890M400 695.7H1890M400 639.6H1890M400 583.5H1890M400 527.3H1890M400 471.2H1890" stroke="#46494b" stroke-width="1" fill="none" opacity=".97"/>
</svg>
<div class="a" style="left:0;top:0;width:1490px;height:564px;clip-path:polygon(628.5px 192.5px,1203.8px 352.7px,376.0px 499.5px)">
<div class="a" style="left:626px;top:190px;width:5px;height:2px;background:linear-gradient(90deg,#26ff01 0px,#2eff02 2px,#35ff02 5px)"></div>
<div class="a" style="left:625px;top:192px;width:11px;height:2px;background:linear-gradient(90deg,#20ff01 0px,#33ff02 6px,#40ff02 11px)"></div>
<div class="a" style="left:623px;top:194px;width:21px;height:2px;background:linear-gradient(90deg,#13ff01 0px,#3aff02 10px,#4eff02 21px)"></div>
<div class="a" style="left:621px;top:196px;width:30px;height:2px;background:linear-gradient(90deg,#00ff16 0px,#33ff02 10px,#49ff02 20px,#59ff02 30px)"></div>
<div class="a" style="left:620px;top:198px;width:38px;height:2px;background:linear-gradient(90deg,#00ff1e 0px,#2fff02 10px,#45ff02 19px,#55ff02 28px,#62ff02 38px)"></div>
<div class="a" style="left:618px;top:200px;width:47px;height:2px;background:linear-gradient(90deg,#00ff28 0px,#32ff15 12px,#4aff02 24px,#5cff02 35px,#6bff02 47px)"></div>
<div class="a" style="left:617px;top:202px;width:55px;height:2px;background:linear-gradient(90deg,#00ff2c 0px,#32ff20 11px,#46ff11 22px,#58ff02 33px,#66ff02 44px,#73ff02 55px)"></div>
<div class="a" style="left:615px;top:204px;width:64px;height:2px;background:linear-gradient(90deg,#00ff33 0px,#31ff29 11px,#45ff20 21px,#54ff10 32px,#62ff02 43px,#6fff02 53px,#7bff02 64px)"></div>
<div class="a" style="left:613px;top:206px;width:74px;height:2px;background:linear-gradient(90deg,#00ff39 0px,#30ff30 11px,#44ff29 21px,#53ff1f 32px,#60ff0e 42px,#6dff02 53px,#78ff02 63px,#83ff02 74px)"></div>
<div class="a" style="left:612px;top:208px;width:82px;height:2px;background:linear-gradient(90deg,#00ff3d 0px,#34ff35 12px,#49ff2d 23px,#59ff24 35px,#66ff16 47px,#73ff02 59px,#7fff02 70px,#8aff02 82px)"></div>
<div class="a" style="left:610px;top:210px;width:91px;height:2px;background:linear-gradient(90deg,#00ff42 0px,#32ff3a 11px,#48ff34 23px,#57ff2d 34px,#64ff23 46px,#70ff15 57px,#7bff02 68px,#87ff02 80px,#91ff02 91px)"></div>
<div class="a" style="left:608px;top:212px;width:100px;height:2px;background:linear-gradient(90deg,#00ff47 0px,#31ff3f 11px,#46ff3a 22px,#56ff34 33px,#63ff2c 44px,#6fff23 56px,#79ff15 67px,#84ff02 78px,#8eff02 89px,#97ff02 100px)"></div>
<div class="a" style="left:607px;top:214px;width:108px;height:2px;background:linear-gradient(90deg,#00ff49 0px,#32ff43 11px,#47ff3f 22px,#56ff39 32px,#63ff33 43px,#6eff2c 54px,#78ff23 65px,#82ff14 76px,#8bff02 86px,#95ff02 97px,#9eff02 108px)"></div>
<div class="a" style="left:605px;top:216px;width:118px;height:2px;background:linear-gradient(90deg,#00ff4e 0px,#34ff47 12px,#49ff42 24px,#5aff3d 35px,#67ff37 47px,#73ff2f 59px,#7eff26 71px,#88ff18 83px,#92ff02 94px,#9cff02 106px,#a5ff02 118px)"></div>
<div class="a" style="left:603px;top:218px;width:127px;height:2px;background:linear-gradient(90deg,#00ff52 0px,#32ff4b 12px,#48ff47 23px,#59ff42 35px,#66ff3d 46px,#72ff36 58px,#7cff2f 69px,#86ff26 81px,#90ff18 92px,#99ff02 104px,#a2ff02 115px,#abff02 127px)"></div>
<div class="a" style="left:602px;top:220px;width:135px;height:2px;background:linear-gradient(90deg,#00ff54 0px,#33ff4f 11px,#49ff4b 22px,#59ff46 34px,#66ff42 45px,#71ff3c 56px,#7cff36 68px,#86ff2f 79px,#8fff25 90px,#97ff17 101px,#a0ff02 112px,#a9ff02 124px,#b1ff02 135px)"></div>
<div class="a" style="left:600px;top:222px;width:144px;height:2px;background:linear-gradient(90deg,#00ff58 0px,#32ff53 11px,#48ff4f 22px,#58ff4b 33px,#65ff46 44px,#71ff42 55px,#7bff3c 66px,#85ff36 78px,#8eff2f 89px,#96ff25 100px,#9fff17 111px,#a7ff02 122px,#b0ff02 133px,#b8ff02 144px)"></div>
<div class="a" style="left:598px;top:224px;width:153px;height:2px;background:linear-gradient(90deg,#00ff5c 0px,#33ff56 12px,#4aff52 24px,#5aff4e 35px,#68ff4a 47px,#74ff45 59px,#7fff3f 71px,#89ff39 82px,#92ff32 94px,#9bff29 106px,#a4ff1b 118px,#acff02 129px,#b5ff02 141px,#beff02 153px)"></div>
<div class="a" style="left:597px;top:226px;width:161px;height:2px;background:linear-gradient(90deg,#00ff5e 0px,#34ff59 12px,#4aff56 23px,#5aff52 34px,#68ff4e 46px,#74ff49 58px,#7eff44 69px,#88ff3f 80px,#92ff39 92px,#9bff31 104px,#a3ff28 115px,#abff1b 126px,#b3ff02 138px,#bcff02 150px,#c4ff02 161px)"></div>
<div class="a" style="left:595px;top:228px;width:171px;height:2px;background:linear-gradient(90deg,#00ff61 0px,#33ff5d 11px,#49ff59 23px,#5aff56 34px,#67ff52 46px,#73ff4e 57px,#7eff49 68px,#88ff44 80px,#91ff3f 91px,#9aff38 103px,#a3ff31 114px,#abff28 125px,#b3ff1a 137px,#baff02 148px,#c3ff02 160px,#caff02 171px)"></div>
<div class="a" style="left:594px;top:230px;width:179px;height:2px;background:linear-gradient(90deg,#00ff64 0px,#36ff5f 12px,#4cff5c 24px,#5dff58 36px,#6bff55 48px,#77ff50 60px,#82ff4c 72px,#8cff47 84px,#96ff41 95px,#9fff3b 107px,#a8ff34 119px,#b0ff2a 131px,#b8ff1d 143px,#c0ff02 155px,#c8ff02 167px,#d0ff02 179px)"></div>
<div class="a" style="left:592px;top:232px;width:188px;height:2px;background:linear-gradient(90deg,#00ff67 0px,#35ff63 12px,#4bff5f 24px,#5cff5c 35px,#6aff59 47px,#76ff55 59px,#81ff51 70px,#8bff4c 82px,#95ff47 94px,#9eff41 106px,#a7ff3b 118px,#afff34 129px,#b7ff2a 141px,#bfff1d 153px,#c7ff02 164px,#cfff02 176px,#d6ff02 188px)"></div>
<div class="a" style="left:590px;top:234px;width:197px;height:2px;background:linear-gradient(90deg,#00ff6a 0px,#34ff66 12px,#4bff63 23px,#5bff60 35px,#69ff5c 46px,#75ff59 58px,#80ff55 70px,#8bff51 81px,#94ff4c 93px,#9dff47 104px,#a6ff42 116px,#aeff3b 127px,#b6ff34 139px,#beff2a 151px,#c5ff1d 162px,#cdff02 174px,#d5ff02 185px,#dcff02 197px)"></div>
<div class="a" style="left:589px;top:236px;width:205px;height:2px;background:linear-gradient(90deg,#00ff6c 0px,#35ff69 11px,#4bff66 23px,#5cff63 34px,#69ff60 46px,#75ff5c 57px,#80ff59 68px,#8aff55 80px,#94ff51 91px,#9dff4c 102px,#a5ff47 114px,#aeff42 125px,#b6ff3b 137px,#bdff34 148px,#c5ff2a 159px,#ccff1d 171px,#d3ff02 182px,#dbff02 194px,#e2ff02 205px)"></div>
<div class="a" style="left:587px;top:238px;width:215px;height:2px;background:linear-gradient(90deg,#00ff6f 0px,#36ff6b 12px,#4dff69 24px,#5eff66 36px,#6cff62 48px,#78ff5f 60px,#83ff5b 72px,#8eff57 84px,#98ff53 96px,#a1ff4f 108px,#aaff49 119px,#b2ff44 131px,#bbff3d 143px,#c3ff36 155px,#caff2c 167px,#d2ff1f 179px,#daff02 191px,#e1ff02 203px,#e9ff02 215px)"></div>
<div class="a" style="left:585px;top:240px;width:224px;height:2px;background:linear-gradient(90deg,#00ff73 0px,#35ff6e 12px,#4cff6c 24px,#5dff69 35px,#6bff66 47px,#78ff63 59px,#83ff5f 71px,#8dff5c 83px,#97ff58 94px,#a0ff53 106px,#a9ff4f 118px,#b2ff4a 130px,#baff44 141px,#c2ff3d 153px,#caff36 165px,#d1ff2c 177px,#d9ff1f 189px,#e0ff02 200px,#e8ff02 212px,#efff02 224px)"></div>
<div class="a" style="left:584px;top:242px;width:232px;height:2px;background:linear-gradient(90deg,#00ff75 0px,#36ff71 12px,#4dff6f 23px,#5dff6c 35px,#6bff69 46px,#78ff66 58px,#83ff63 70px,#8dff5f 81px,#97ff5c 93px,#a0ff58 104px,#a9ff53 116px,#b1ff4f 128px,#b9ff4a 139px,#c1ff44 151px,#c9ff3e 162px,#d1ff36 174px,#d8ff2d 186px,#dfff1f 197px,#e7ff02 209px,#eeff02 220px,#f5ff02 232px)"></div>
<div class="a" style="left:582px;top:244px;width:241px;height:2px;background:linear-gradient(90deg,#00ff78 0px,#35ff74 11px,#4cff72 23px,#5dff6f 34px,#6bff6c 46px,#77ff69 57px,#82ff66 69px,#8dff63 80px,#96ff60 92px,#a0ff5c 103px,#a8ff58 115px,#b1ff54 126px,#b9ff4f 138px,#c1ff4a 149px,#c9ff44 161px,#d0ff3e 172px,#d7ff36 184px,#dfff2d 195px,#e6ff20 207px,#edff02 218px,#f4ff02 230px,#fbff02 241px)"></div>
<div class="a" style="left:580px;top:246px;width:250px;height:2px;background:linear-gradient(90deg,#00ff7b 0px,#36ff77 12px,#4dff74 24px,#5eff72 36px,#6dff6f 48px,#79ff6c 60px,#85ff69 71px,#8fff66 83px,#99ff62 95px,#a3ff5f 107px,#acff5b 119px,#b5ff56 131px,#bdff52 143px,#c5ff4c 155px,#cdff47 167px,#d5ff40 179px,#ddff39 190px,#e4ff2f 202px,#ebff22 214px,#f3ff02 226px,#faff02 238px,#fffd02 250px)"></div>
<div class="a" style="left:579px;top:248px;width:258px;height:2px;background:linear-gradient(90deg,#00ff7d 0px,#37ff79 12px,#4eff77 23px,#5fff74 35px,#6dff72 47px,#7aff6f 59px,#85ff6c 70px,#8fff69 82px,#99ff66 94px,#a3ff62 106px,#acff5f 117px,#b4ff5b 129px,#bdff56 141px,#c5ff52 152px,#cdff4d 164px,#d4ff47 176px,#dcff40 188px,#e4ff39 199px,#ebff2f 211px,#f2ff22 223px,#f9ff02 235px,#fffe02 246px,#fff702 258px)"></div>
<div class="a" style="left:577px;top:250px;width:268px;height:2px;background:linear-gradient(90deg,#00ff7f 0px,#36ff7c 12px,#4dff7a 23px,#5eff77 35px,#6dff75 47px,#79ff72 58px,#85ff6f 70px,#8fff6d 82px,#99ff69 93px,#a3ff66 105px,#acff63 117px,#b4ff5f 128px,#bdff5b 140px,#c5ff57 151px,#cdff52 163px,#d4ff4d 175px,#dcff47 186px,#e4ff40 198px,#ebff39 210px,#f2ff2f 221px,#f9ff22 233px,#fffd02 245px,#fff702 256px,#fff102 268px)"></div>
<div class="a" style="left:575px;top:252px;width:277px;height:2px;background:linear-gradient(90deg,#00ff82 0px,#35ff7f 12px,#4cff7d 23px,#5eff7a 35px,#6cff78 46px,#79ff75 58px,#84ff73 69px,#8fff70 81px,#99ff6d 92px,#a2ff6a 104px,#abff67 115px,#b4ff63 127px,#bcff5f 138px,#c4ff5b 150px,#ccff57 162px,#d4ff52 173px,#dcff4d 185px,#e3ff47 196px,#eaff41 208px,#f2ff39 219px,#f9ff2f 231px,#fffe22 242px,#fff702 254px,#fff102 265px,#ffeb02 277px)"></div>
<div class="a" style="left:574px;top:254px;width:285px;height:2px;background:linear-gradient(90deg,#00ff84 0px,#38ff81 12px,#4fff7f 24px,#60ff7d 36px,#6fff7a 48px,#7cff78 59px,#87ff75 71px,#92ff72 83px,#9cff6f 95px,#a6ff6c 107px,#afff69 119px,#b8ff66 131px,#c0ff62 142px,#c9ff5e 154px,#d1ff59 166px,#d9ff55 178px,#e0ff4f 190px,#e8ff49 202px,#f0ff43 214px,#f7ff3b 226px,#ffff31 238px,#fff823 249px,#fff105 261px,#ffeb02 273px,#ffe602 285px)"></div>
<div class="a" style="left:572px;top:256px;width:294px;height:2px;background:linear-gradient(90deg,#00ff87 0px,#37ff84 12px,#4eff82 24px,#60ff80 35px,#6eff7d 47px,#7bff7b 59px,#87ff78 71px,#92ff76 82px,#9cff73 94px,#a5ff70 106px,#aeff6d 118px,#b7ff6a 129px,#c0ff66 141px,#c8ff62 153px,#d0ff5e 165px,#d8ff5a 176px,#e0ff55 188px,#e8ff50 200px,#efff4a 212px,#f7ff43 223px,#feff3b 235px,#fff931 247px,#fff223 259px,#ffec07 270px,#ffe602 282px,#ffe002 294px)"></div>
<div class="a" style="left:570px;top:258px;width:303px;height:2px;background:linear-gradient(90deg,#00ff8a 0px,#36ff87 12px,#4eff85 23px,#5fff82 35px,#6eff80 47px,#7bff7e 58px,#86ff7c 70px,#91ff79 82px,#9bff76 93px,#a5ff74 105px,#aeff71 117px,#b7ff6d 128px,#c0ff6a 140px,#c8ff67 152px,#d0ff63 163px,#d8ff5f 175px,#e0ff5a 186px,#e7ff56 198px,#efff50 210px,#f6ff4a 221px,#feff44 233px,#fff93b 245px,#fff230 256px,#ffec23 268px,#ffe608 280px,#ffe002 291px,#ffdb02 303px)"></div>
<div class="a" style="left:569px;top:260px;width:312px;height:2px;background:linear-gradient(90deg,#00ff8c 0px,#37ff89 12px,#4fff87 23px,#60ff85 35px,#6fff83 46px,#7bff81 58px,#87ff7e 69px,#92ff7c 81px,#9cff79 92px,#a5ff77 104px,#afff74 116px,#b7ff71 127px,#c0ff6e 139px,#c8ff6b 150px,#d0ff67 162px,#d8ff63 173px,#e0ff5f 185px,#e8ff5b 196px,#efff56 208px,#f7ff50 220px,#feff4a 231px,#fff942 243px,#fff239 254px,#ffec2e 266px,#ffe521 277px,#ffe002 289px,#ffdb02 300px,#ffd602 312px)"></div>
<div class="a" style="left:567px;top:262px;width:321px;height:2px;background:linear-gradient(90deg,#00ff8f 0px,#37ff8c 12px,#4fff8a 24px,#61ff88 36px,#70ff86 48px,#7dff83 59px,#89ff81 71px,#94ff7f 83px,#9eff7c 95px,#a8ff79 107px,#b2ff76 119px,#bbff73 131px,#c3ff70 143px,#ccff6d 155px,#d4ff69 166px,#dcff66 178px,#e4ff61 190px,#ecff5d 202px,#f4ff58 214px,#fcff53 226px,#fffb4b 238px,#fff343 250px,#ffed39 262px,#ffe62f 273px,#ffe122 285px,#ffdb0a 297px,#ffd602 309px,#ffd102 321px)"></div>
<div class="a" style="left:566px;top:264px;width:329px;height:2px;background:linear-gradient(90deg,#00ff91 0px,#39ff8e 12px,#50ff8c 24px,#62ff8a 35px,#71ff88 47px,#7eff86 59px,#89ff84 70px,#94ff82 82px,#9fff7f 94px,#a8ff7d 106px,#b2ff7a 118px,#bbff77 129px,#c4ff74 141px,#ccff71 153px,#d4ff6d 164px,#dcff6a 176px,#e4ff66 188px,#ecff62 200px,#f4ff5d 212px,#fcff59 223px,#fffb52 235px,#fff44a 247px,#ffed41 258px,#ffe738 270px,#ffe12e 282px,#ffdb22 294px,#ffd60a 306px,#ffd102 317px,#ffcd02 329px)"></div>
<div class="a" style="left:564px;top:266px;width:338px;height:2px;background:linear-gradient(90deg,#00ff93 0px,#38ff91 12px,#50ff8f 23px,#61ff8d 35px,#70ff8b 47px,#7dff89 58px,#89ff87 70px,#94ff85 82px,#9eff82 93px,#a8ff80 105px,#b2ff7d 117px,#bbff7b 128px,#c3ff78 140px,#ccff75 152px,#d4ff72 163px,#dcff6e 175px,#e4ff6b 186px,#ecff67 198px,#f4ff63 210px,#fcff5e 221px,#fffb58 233px,#fff450 245px,#ffed48 256px,#ffe740 268px,#ffe137 280px,#ffdb2e 291px,#ffd621 303px,#ffd10b 315px,#ffcc02 326px,#ffc802 338px)"></div>
<div class="a" style="left:562px;top:268px;width:347px;height:2px;background:linear-gradient(90deg,#00ff96 0px,#38ff93 12px,#50ff91 24px,#63ff90 36px,#72ff8e 48px,#7fff8c 60px,#8bff89 72px,#96ff87 84px,#a1ff85 96px,#abff82 108px,#b5ff80 120px,#beff7d 132px,#c7ff7a 144px,#cfff77 156px,#d8ff74 168px,#e0ff71 179px,#e8ff6d 191px,#f1ff69 203px,#f9ff65 215px,#fffe60 227px,#fff658 239px,#ffef51 251px,#ffe849 263px,#ffe241 275px,#ffdc38 287px,#ffd72e 299px,#ffd123 311px,#ffcc0f 323px,#ffc802 335px,#ffc402 347px)"></div>
<div class="a" style="left:561px;top:270px;width:355px;height:2px;background:linear-gradient(90deg,#00ff98 0px,#3aff96 12px,#51ff94 24px,#63ff92 36px,#72ff90 47px,#80ff8f 59px,#8cff8d 71px,#97ff8b 83px,#a2ff89 95px,#abff86 106px,#b5ff83 118px,#beff81 130px,#c7ff7e 142px,#d0ff7b 154px,#d8ff78 166px,#e0ff75 178px,#e9ff71 189px,#f1ff6e 201px,#f9ff6a 213px,#fffe65 225px,#fff65e 237px,#ffef56 248px,#ffe84f 260px,#ffe247 272px,#ffdc40 284px,#ffd737 296px,#ffd12e 308px,#ffcc22 320px,#ffc70f 331px,#ffc302 343px,#ffbf02 355px)"></div>
<div class="a" style="left:559px;top:272px;width:365px;height:2px;background:linear-gradient(90deg,#00ff9b 0px,#39ff98 12px,#51ff97 24px,#65ff96 35px,#75ff95 47px,#83ff94 59px,#8fff92 71px,#9aff90 82px,#a4ff8e 94px,#adff8c 106px,#b6ff89 118px,#bfff86 130px,#c7ff82 141px,#d0ff7f 153px,#d8ff7c 165px,#e1ff79 177px,#e9ff75 188px,#f1ff72 200px,#f9ff6e 212px,#fffd6a 224px,#fff662 235px,#ffef5b 247px,#ffe854 259px,#ffe24d 271px,#ffdc46 283px,#ffd63e 294px,#ffd136 306px,#ffcc2c 318px,#ffc721 330px,#ffc20d 341px,#ffbe02 353px,#ffbb02 365px)"></div>
<div class="a" style="left:557px;top:274px;width:374px;height:2px;background:linear-gradient(90deg,#00ff9d 0px,#3aff9b 12px,#55ff9b 23px,#68ff9a 35px,#78ff99 47px,#85ff98 58px,#91ff97 70px,#9cff96 82px,#a5ff94 94px,#afff92 105px,#b7ff8f 117px,#c0ff8c 129px,#c8ff88 140px,#d0ff84 152px,#d8ff80 164px,#e0ff7d 175px,#e9ff7a 187px,#f1ff76 199px,#f9ff73 210px,#fffd6f 222px,#fff667 234px,#ffef60 245px,#ffe85a 257px,#ffe253 269px,#ffdc4c 280px,#ffd645 292px,#ffd13d 304px,#ffcc35 316px,#ffc72c 327px,#ffc221 339px,#ffbe0d 351px,#ffba02 362px,#ffb702 374px)"></div>
<div class="a" style="left:556px;top:276px;width:382px;height:2px;background:linear-gradient(90deg,#09ffa0 0px,#44ff9f 12px,#5cff9f 24px,#6eff9f 36px,#7dff9e 48px,#8aff9d 60px,#96ff9c 72px,#a0ff9a 84px,#aaff98 96px,#b3ff96 107px,#bcff94 119px,#c4ff91 131px,#cdff8d 143px,#d5ff89 155px,#ddff85 167px,#e5ff80 179px,#edff7c 191px,#f5ff79 203px,#feff75 215px,#fff86f 227px,#fff168 239px,#ffea61 251px,#ffe35a 263px,#ffdd53 275px,#ffd74c 286px,#ffd245 298px,#ffcd3e 310px,#ffc736 322px,#ffc32d 334px,#ffbe22 346px,#ffba10 358px,#ffb602 370px,#ffb302 382px)"></div>
<div class="a" style="left:554px;top:278px;width:391px;height:2px;background:linear-gradient(90deg,#20ffa3 0px,#49ffa3 12px,#60ffa3 24px,#72ffa3 36px,#80ffa2 47px,#8dffa1 59px,#98ffa0 71px,#a2ff9f 83px,#acff9e 95px,#b5ff9c 107px,#bdff99 118px,#c6ff97 130px,#ceff94 142px,#d5ff90 154px,#ddff8c 166px,#e5ff87 178px,#edff82 190px,#f5ff7d 201px,#feff7a 213px,#fff873 225px,#fff16c 237px,#ffea66 249px,#ffe35f 261px,#ffdd58 273px,#ffd752 284px,#ffd24b 296px,#ffcd44 308px,#ffc73d 320px,#ffc335 332px,#ffbe2c 344px,#ffba21 355px,#ffb510 367px,#ffb202 379px,#ffaf02 391px)"></div>
<div class="a" style="left:552px;top:280px;width:400px;height:2px;background:linear-gradient(90deg,#2bffa7 0px,#4effa7 12px,#64ffa7 24px,#75ffa7 35px,#83ffa7 47px,#8fffa6 59px,#9affa5 71px,#a4ffa4 82px,#aeffa3 94px,#b6ffa1 106px,#bfff9f 118px,#c7ff9c 129px,#cfff9a 141px,#d6ff96 153px,#deff93 165px,#e6ff8e 176px,#eeff89 188px,#f5ff84 200px,#feff7e 212px,#fff878 224px,#fff171 235px,#ffea6a 247px,#ffe364 259px,#ffdd5d 271px,#ffd757 282px,#ffd250 294px,#ffcc4a 306px,#ffc743 318px,#ffc33c 329px,#ffbe34 341px,#ffb92c 353px,#ffb521 365px,#ffb111 376px,#ffae02 388px,#ffab02 400px)"></div>
<div class="a" style="left:551px;top:282px;width:409px;height:2px;background:linear-gradient(90deg,#37ffab 0px,#55ffab 12px,#69ffab 23px,#79ffab 35px,#87ffab 47px,#93ffaa 58px,#9effaa 70px,#a7ffa9 82px,#b0ffa7 93px,#b9ffa6 105px,#c1ffa4 117px,#c9ffa2 129px,#d0ff9f 140px,#d8ff9c 152px,#dfff99 164px,#e7ff95 175px,#efff90 187px,#f6ff8b 199px,#feff85 210px,#fff87b 222px,#fff074 234px,#ffe96e 245px,#ffe367 257px,#ffdd61 269px,#ffd75b 280px,#ffd155 292px,#ffcc4e 304px,#ffc748 316px,#ffc241 327px,#ffbd3a 339px,#ffb933 351px,#ffb52a 362px,#ffb020 374px,#ffac0f 386px,#ffa902 397px,#ffa702 409px)"></div>
<div class="a" style="left:549px;top:284px;width:418px;height:2px;background:linear-gradient(90deg,#3effae 0px,#5affaf 12px,#6effaf 24px,#7effaf 36px,#8bffaf 48px,#97ffae 60px,#a2ffae 72px,#abffad 84px,#b4ffac 96px,#bdffaa 107px,#c5ffa9 119px,#cdffa6 131px,#d4ffa4 143px,#dcffa1 155px,#e3ff9d 167px,#ebff99 179px,#f3ff95 191px,#fbff8f 203px,#fffb87 215px,#fff37d 227px,#ffec75 239px,#ffe56e 251px,#ffdf68 263px,#ffd862 275px,#ffd35b 287px,#ffcd55 299px,#ffc84f 311px,#ffc348 322px,#ffbe42 334px,#ffb93b 346px,#ffb533 358px,#ffb12b 370px,#ffad21 382px,#ffa911 394px,#ffa502 406px,#ffa302 418px)"></div>
<div class="a" style="left:547px;top:286px;width:427px;height:2px;background:linear-gradient(90deg,#45ffb2 0px,#5effb2 12px,#71ffb3 24px,#81ffb3 36px,#8effb3 47px,#9affb2 59px,#a4ffb2 71px,#adffb1 83px,#b6ffb0 95px,#beffaf 107px,#c6ffae 119px,#ceffac 130px,#d5ffa9 142px,#ddffa6 154px,#e4ffa3 166px,#ebff9f 178px,#f3ff9b 190px,#fbff96 202px,#fffb8f 214px,#fff485 225px,#ffec7a 237px,#ffe572 249px,#ffde6c 261px,#ffd866 273px,#ffd260 285px,#ffcd5a 297px,#ffc854 308px,#ffc34e 320px,#ffbe47 332px,#ffb941 344px,#ffb53a 356px,#ffb133 368px,#ffac2b 380px,#ffa821 391px,#ffa511 403px,#ffa202 415px,#ff9f02 427px)"></div>
<div class="a" style="left:546px;top:288px;width:435px;height:2px;background:linear-gradient(90deg,#4dffb5 0px,#64ffb6 12px,#76ffb6 24px,#85ffb6 35px,#92ffb7 47px,#9dffb6 59px,#a7ffb6 71px,#b0ffb6 82px,#b9ffb5 94px,#c1ffb4 106px,#c8ffb2 118px,#d0ffb0 129px,#d7ffae 141px,#deffac 153px,#e5ffa9 165px,#ecffa5 176px,#f4ffa1 188px,#fbff9d 200px,#fffb95 212px,#fff38c 223px,#ffec81 235px,#ffe577 247px,#ffde70 259px,#ffd86a 270px,#ffd264 282px,#ffcd5e 294px,#ffc758 306px,#ffc252 317px,#ffbd4c 329px,#ffb946 341px,#ffb440 353px,#ffb039 364px,#ffac32 376px,#ffa82a 388px,#ffa420 400px,#ffa111 411px,#ff9e02 423px,#ff9b02 435px)"></div>
<div class="a" style="left:544px;top:290px;width:444px;height:2px;background:linear-gradient(90deg,#52ffb9 0px,#68ffb9 12px,#7affba 23px,#88ffba 35px,#95ffba 47px,#a0ffba 58px,#a9ffba 70px,#b2ffba 82px,#bbffb9 93px,#c3ffb8 105px,#caffb7 117px,#d1ffb5 129px,#d8ffb3 140px,#dfffb1 152px,#e6ffae 164px,#edffab 175px,#f4ffa7 187px,#fcffa3 199px,#fffb9c 210px,#fff392 222px,#ffec89 234px,#ffe57e 245px,#ffde74 257px,#ffd86e 269px,#ffd268 280px,#ffcc62 292px,#ffc75d 304px,#ffc257 315px,#ffbd51 327px,#ffb94b 339px,#ffb445 351px,#ffb03f 362px,#ffac39 374px,#ffa832 386px,#ffa42a 397px,#ffa020 409px,#ff9d12 421px,#ff9a02 432px,#ff9702 444px)"></div>
<div class="a" style="left:543px;top:292px;width:453px;height:2px;background:linear-gradient(90deg,#59ffbc 0px,#6effbd 12px,#7fffbd 24px,#8dffbe 36px,#9affbe 48px,#a4ffbe 60px,#aeffbe 72px,#b7ffbe 83px,#bfffbd 95px,#c7ffbc 107px,#ceffbb 119px,#d5ffb9 131px,#dcffb7 143px,#e3ffb5 155px,#eaffb2 167px,#f1ffaf 179px,#f8ffab 191px,#fffea7 203px,#fff79d 215px,#ffef93 226px,#ffe889 238px,#ffe17f 250px,#ffd974 262px,#ffd36e 274px,#ffce68 286px,#ffc862 298px,#ffc35c 310px,#ffbe57 322px,#ffb951 334px,#ffb54b 346px,#ffb045 358px,#ffac3f 370px,#ffa839 381px,#ffa432 393px,#ffa02a 405px,#ff9c20 417px,#ff9911 429px,#ff9602 441px,#ff9402 453px)"></div>
<div class="a" style="left:541px;top:294px;width:462px;height:2px;background:linear-gradient(90deg,#5dffbf 0px,#72ffc0 12px,#82ffc1 24px,#90ffc1 36px,#9cffc2 47px,#a7ffc2 59px,#b0ffc2 71px,#b9ffc2 83px,#c1ffc1 95px,#c9ffc0 107px,#d0ffbf 118px,#d7ffbe 130px,#ddffbc 142px,#e4ffba 154px,#ebffb7 166px,#f2ffb4 178px,#f9ffb1 190px,#fffeac 201px,#fff7a3 213px,#ffef9a 225px,#ffe890 237px,#ffe186 249px,#ffda7c 261px,#ffd371 272px,#ffcd6c 284px,#ffc866 296px,#ffc360 308px,#ffbe5b 320px,#ffb955 332px,#ffb450 344px,#ffb04a 355px,#ffac44 367px,#ffa73e 379px,#ffa438 391px,#ffa031 403px,#ff9c29 415px,#ff9820 426px,#ff9511 438px,#ff9202 450px,#ff9002 462px)"></div>
<div class="a" style="left:539px;top:296px;width:471px;height:2px;background:linear-gradient(90deg,#61ffc2 0px,#75ffc3 12px,#85ffc4 24px,#93ffc5 35px,#9fffc5 47px,#aaffc5 59px,#b3ffc6 71px,#bbffc6 82px,#c3ffc5 94px,#cbffc5 106px,#d1ffc4 118px,#d8ffc2 130px,#dfffc1 141px,#e5ffbf 153px,#ebffbc 165px,#f2ffba 177px,#f9ffb7 188px,#fffeb2 200px,#fff7a9 212px,#ffefa0 224px,#ffe896 236px,#ffe18d 247px,#ffda83 259px,#ffd379 271px,#ffcd6f 283px,#ffc76a 294px,#ffc264 306px,#ffbd5f 318px,#ffb85a 330px,#ffb454 341px,#ffaf4f 353px,#ffab49 365px,#ffa744 377px,#ffa33e 389px,#ff9f37 400px,#ff9c31 412px,#ff9829 424px,#ff9520 436px,#ff9112 447px,#ff8e02 459px,#ff8c02 471px)"></div>
<div class="a" style="left:538px;top:298px;width:479px;height:2px;background:linear-gradient(90deg,#67ffc5 0px,#7bffc6 12px,#8affc7 24px,#98ffc8 36px,#a4ffc9 48px,#aeffc9 60px,#b7ffc9 72px,#c0ffc9 84px,#c7ffc9 96px,#ceffc8 108px,#d5ffc8 120px,#dcffc6 132px,#e2ffc5 144px,#e8ffc3 156px,#efffc0 168px,#f6ffbd 180px,#fdffba 192px,#fffab3 204px,#fff3aa 216px,#ffeca1 228px,#ffe597 240px,#ffde8e 251px,#ffd784 263px,#ffd079 275px,#ffc970 287px,#ffc46a 299px,#ffbe65 311px,#ffb95f 323px,#ffb55a 335px,#ffb054 347px,#ffac4f 359px,#ffa849 371px,#ffa344 383px,#ffa03e 395px,#ff9c38 407px,#ff9831 419px,#ff9429 431px,#ff9120 443px,#ff8e13 455px,#ff8b02 467px,#ff8902 479px)"></div>
<div class="a" style="left:536px;top:300px;width:488px;height:2px;background:linear-gradient(90deg,#6bffc8 0px,#7effc9 12px,#8dffca 24px,#9bffcb 36px,#a6ffcc 48px,#b1ffcc 60px,#baffcd 71px,#c2ffcd 83px,#c9ffcd 95px,#d0ffcc 107px,#d7ffcc 119px,#ddffca 131px,#e3ffc9 143px,#e9ffc7 155px,#f0ffc5 167px,#f6ffc2 179px,#fdffbf 190px,#fffab8 202px,#fff3b0 214px,#ffeca7 226px,#ffe59d 238px,#ffde94 250px,#ffd78a 262px,#ffd080 274px,#ffc976 286px,#ffc36e 298px,#ffbe68 309px,#ffb963 321px,#ffb45e 333px,#ffb058 345px,#ffab53 357px,#ffa74e 369px,#ffa349 381px,#ff9f43 393px,#ff9b3d 405px,#ff9837 417px,#ff9431 428px,#ff9129 440px,#ff8d20 452px,#ff8a13 464px,#ff8702 476px,#ff8502 488px)"></div>
<div class="a" style="left:534px;top:302px;width:497px;height:2px;background:linear-gradient(90deg,#6effcb 0px,#81ffcc 12px,#90ffcd 24px,#9dffce 36px,#a9ffcf 47px,#b3ffd0 59px,#bcffd0 71px,#c4ffd0 83px,#cbffd0 95px,#d2ffd0 106px,#d8ffcf 118px,#dfffcf 130px,#e4ffcd 142px,#eaffcc 154px,#f0ffca 166px,#f7ffc7 178px,#fdffc4 189px,#fffabd 201px,#fff3b5 213px,#ffecac 225px,#ffe5a3 237px,#ffdf9a 248px,#ffd890 260px,#ffd187 272px,#ffca7d 284px,#ffc372 296px,#ffbe6c 308px,#ffb967 320px,#ffb461 331px,#ffaf5c 343px,#ffab57 355px,#ffa752 367px,#ffa34d 379px,#ff9f48 390px,#ff9b42 402px,#ff973d 414px,#ff9437 426px,#ff9030 438px,#ff8d29 450px,#ff8920 462px,#ff8613 473px,#ff8402 485px,#ff8202 497px)"></div>
<div class="a" style="left:533px;top:304px;width:506px;height:2px;background:linear-gradient(90deg,#73ffce 0px,#85ffcf 12px,#94ffd0 24px,#a1ffd1 35px,#acffd2 47px,#b6ffd3 59px,#bfffd3 71px,#c7ffd4 82px,#ceffd4 94px,#d5ffd4 106px,#dbffd3 118px,#e1ffd2 129px,#e6ffd1 141px,#ecffd0 153px,#f2ffce 165px,#f8ffcb 177px,#feffc9 188px,#fff9c1 200px,#fff3b9 212px,#ffecb0 224px,#ffe5a8 235px,#ffde9f 247px,#ffd895 259px,#ffd18c 271px,#ffca82 282px,#ffc378 294px,#ffbd6f 306px,#ffb86a 318px,#ffb365 329px,#ffaf60 341px,#ffaa5b 353px,#ffa656 365px,#ffa251 377px,#ff9e4c 388px,#ff9a46 400px,#ff9641 412px,#ff933c 424px,#ff8f36 435px,#ff8c2f 447px,#ff8928 459px,#ff851f 471px,#ff8212 482px,#ff8002 494px,#ff7e02 506px)"></div>
<div class="a" style="left:531px;top:306px;width:515px;height:2px;background:linear-gradient(90deg,#76ffd1 0px,#89ffd2 12px,#98ffd3 24px,#a5ffd4 36px,#b0ffd5 48px,#baffd6 60px,#c3ffd7 72px,#caffd7 84px,#d1ffd7 96px,#d8ffd7 108px,#deffd7 120px,#e3ffd6 132px,#e9ffd5 144px,#efffd3 156px,#f4ffd1 168px,#faffcf 180px,#fffdcb 192px,#fff7c3 204px,#fff0ba 216px,#ffe9b2 228px,#ffe2a9 240px,#ffdca0 252px,#ffd596 263px,#ffce8d 275px,#ffc783 287px,#ffc079 299px,#ffb96f 311px,#ffb46a 323px,#ffb065 335px,#ffab60 347px,#ffa75b 359px,#ffa356 371px,#ff9e51 383px,#ff9b4c 395px,#ff9747 407px,#ff9341 419px,#ff8f3c 431px,#ff8c36 443px,#ff8830 455px,#ff8528 467px,#ff8220 479px,#ff7f13 491px,#ff7c02 503px,#ff7a02 515px)"></div>
<div class="a" style="left:529px;top:308px;width:524px;height:2px;background:linear-gradient(90deg,#79ffd4 0px,#8bffd5 12px,#9affd6 24px,#a7ffd7 36px,#b2ffd8 48px,#bcffd9 60px,#c5ffda 71px,#ccffda 83px,#d3ffda 95px,#daffda 107px,#dfffda 119px,#e5ffd9 131px,#eaffd8 143px,#f0ffd7 155px,#f5ffd5 167px,#fbffd3 179px,#fffdcf 191px,#fff7c7 202px,#fff0bf 214px,#ffeab7 226px,#ffe3ae 238px,#ffdca5 250px,#ffd59c 262px,#ffce92 274px,#ffc789 286px,#ffc17f 298px,#ffba75 310px,#ffb46d 322px,#ffaf68 333px,#ffab63 345px,#ffa65f 357px,#ffa25a 369px,#ff9e55 381px,#ff9a50 393px,#ff964b 405px,#ff9346 417px,#ff8f41 429px,#ff8b3b 441px,#ff8836 453px,#ff852f 464px,#ff8128 476px,#ff7e20 488px,#ff7b14 500px,#ff7802 512px,#ff7702 524px)"></div>
<div class="a" style="left:528px;top:310px;width:532px;height:2px;background:linear-gradient(90deg,#7effd6 0px,#8fffd7 12px,#9effd9 24px,#aaffda 35px,#b5ffdb 47px,#bfffdc 59px,#c8ffdd 71px,#cfffdd 83px,#d6ffde 95px,#dcffde 106px,#e1ffdd 118px,#e7ffdd 130px,#ecffdc 142px,#f1ffdb 154px,#f6ffd9 166px,#fcffd7 177px,#fffdd3 189px,#fff6cb 201px,#fff0c3 213px,#ffeabb 225px,#ffe3b2 236px,#ffdca9 248px,#ffd6a0 260px,#ffcf97 272px,#ffc88e 284px,#ffc184 296px,#ffba7b 307px,#ffb371 319px,#ffaf6c 331px,#ffaa67 343px,#ffa662 355px,#ffa15d 366px,#ff9d58 378px,#ff9954 390px,#ff964f 402px,#ff924a 414px,#ff8e45 426px,#ff8b40 437px,#ff873b 449px,#ff8435 461px,#ff812f 473px,#ff7d28 485px,#ff7a20 497px,#ff7714 508px,#ff7502 520px,#ff7302 532px)"></div>
<div class="a" style="left:526px;top:312px;width:541px;height:2px;background:linear-gradient(90deg,#80ffd9 0px,#92ffda 12px,#a0ffdb 24px,#adffdc 35px,#b8ffdd 47px,#c1ffde 59px,#caffdf 71px,#d1ffe0 82px,#d8ffe1 94px,#deffe1 106px,#e3ffe1 118px,#e8ffe0 129px,#edffdf 141px,#f2ffde 153px,#f7ffdd 165px,#fcffdb 176px,#fffcd7 188px,#fff6cf 200px,#fff0c7 212px,#ffeabf 223px,#ffe4b7 235px,#ffddae 247px,#ffd6a6 259px,#ffcf9d 270px,#ffc893 282px,#ffc28a 294px,#ffbb80 306px,#ffb477 318px,#ffae6f 329px,#ffa96a 341px,#ffa565 353px,#ffa161 365px,#ff9d5c 376px,#ff9957 388px,#ff9553 400px,#ff914e 412px,#ff8e49 423px,#ff8a44 435px,#ff873f 447px,#ff833a 459px,#ff8035 470px,#ff7d2e 482px,#ff7a28 494px,#ff771f 506px,#ff7414 517px,#ff7102 529px,#ff7002 541px)"></div>
<div class="a" style="left:524px;top:314px;width:551px;height:2px;background:linear-gradient(90deg,#83ffdb 0px,#94ffdc 12px,#a3ffde 24px,#b0ffdf 36px,#bbffe0 48px,#c5ffe1 60px,#cdffe2 72px,#d4ffe3 84px,#dbffe3 96px,#e1ffe4 108px,#e6ffe4 120px,#ebffe3 132px,#efffe2 144px,#f4ffe1 156px,#f9ffe0 168px,#feffde 180px,#fffad8 192px,#fff4d0 204px,#ffeec8 216px,#ffe8c0 228px,#ffe1b7 240px,#ffdaaf 252px,#ffd3a6 264px,#ffcc9d 276px,#ffc593 287px,#ffbe8a 299px,#ffb780 311px,#ffb076 323px,#ffaa6f 335px,#ffa66a 347px,#ffa265 359px,#ff9d61 371px,#ff995c 383px,#ff9557 395px,#ff9153 407px,#ff8e4e 419px,#ff8a49 431px,#ff8744 443px,#ff833f 455px,#ff803a 467px,#ff7c34 479px,#ff792e 491px,#ff7627 503px,#ff731f 515px,#ff7014 527px,#ff6d02 539px,#ff6c02 551px)"></div>
<div class="a" style="left:523px;top:316px;width:559px;height:2px;background:linear-gradient(90deg,#86ffde 0px,#98ffdf 12px,#a6ffe0 24px,#b3ffe1 36px,#beffe3 48px,#c7ffe4 59px,#d0ffe5 71px,#d7ffe6 83px,#ddffe6 95px,#e3ffe7 107px,#e8ffe7 119px,#ecffe6 131px,#f1ffe6 143px,#f5ffe4 155px,#faffe3 167px,#ffffe1 178px,#fffadb 190px,#fff4d4 202px,#ffeecc 214px,#ffe8c4 226px,#ffe1bc 238px,#ffdab3 250px,#ffd4aa 262px,#ffcda1 274px,#ffc698 285px,#ffbf8f 297px,#ffb885 309px,#ffb17c 321px,#ffaa72 333px,#ffa56d 345px,#ffa168 357px,#ff9d64 369px,#ff995f 381px,#ff955b 392px,#ff9156 404px,#ff8d52 416px,#ff894d 428px,#ff8648 440px,#ff8244 452px,#ff7f3f 464px,#ff7c39 476px,#ff7934 488px,#ff752e 500px,#ff7227 511px,#ff6f1f 523px,#ff6c14 535px,#ff6a02 547px,#ff6802 559px)"></div>
<div class="a" style="left:521px;top:318px;width:568px;height:2px;background:linear-gradient(90deg,#88ffe0 0px,#9affe1 12px,#a8ffe2 24px,#b5ffe4 36px,#c0ffe5 47px,#c9ffe6 59px,#d2ffe7 71px,#d9ffe8 83px,#dfffe9 95px,#e5ffe9 106px,#e9ffe9 118px,#eeffe9 130px,#f2ffe9 142px,#f6ffe8 154px,#faffe6 166px,#ffffe5 178px,#fffade 189px,#fff4d7 201px,#ffeed0 213px,#ffe8c8 225px,#ffe2c0 237px,#ffdbb7 248px,#ffd4af 260px,#ffcda6 272px,#ffc69d 284px,#ffbf94 296px,#ffb88a 308px,#ffb181 320px,#ffaa78 331px,#ffa570 343px,#ffa06b 355px,#ff9c67 367px,#ff9862 379px,#ff945e 390px,#ff905a 402px,#ff8c55 414px,#ff8951 426px,#ff854c 438px,#ff8248 450px,#ff7e43 462px,#ff7b3e 473px,#ff7839 485px,#ff7534 497px,#ff712e 509px,#ff6e27 521px,#ff6b1f 532px,#ff6814 544px,#ff6602 556px,#ff6502 568px)"></div>
<div class="a" style="left:519px;top:320px;width:577px;height:2px;background:linear-gradient(90deg,#8affe2 0px,#9bffe3 12px,#aaffe5 24px,#b7ffe6 35px,#c2ffe7 47px,#cbffe8 59px,#d4ffe9 71px,#dbffea 82px,#e1ffeb 94px,#e6ffec 106px,#ebffec 118px,#efffec 130px,#f3ffeb 141px,#f7ffeb 153px,#fbffe9 165px,#ffffe7 177px,#fffae1 188px,#fff4db 200px,#ffefd3 212px,#ffe9cc 224px,#ffe2c4 236px,#ffdcbc 247px,#ffd5b3 259px,#ffceaa 271px,#ffc7a2 283px,#ffc099 294px,#ffb98f 306px,#ffb286 318px,#ffab7d 330px,#ffa473 341px,#ffa06e 353px,#ff9b6a 365px,#ff9766 377px,#ff9361 389px,#ff8f5d 400px,#ff8c58 412px,#ff8854 424px,#ff8550 436px,#ff814b 447px,#ff7e47 459px,#ff7a42 471px,#ff773d 483px,#ff7438 495px,#ff7133 506px,#ff6e2d 518px,#ff6b27 530px,#ff671f 542px,#ff6414 553px,#ff6202 565px,#ff6102 577px)"></div>
<div class="a" style="left:518px;top:322px;width:585px;height:2px;background:linear-gradient(90deg,#8dffe4 0px,#9fffe5 12px,#adffe7 24px,#baffe8 36px,#c5ffe9 48px,#cfffeb 60px,#d7ffec 72px,#deffed 84px,#e4ffee 96px,#e9ffee 107px,#eeffee 119px,#f1ffee 131px,#f5ffee 143px,#f9ffed 155px,#fdffec 167px,#fffde8 179px,#fff8e2 191px,#fff2db 203px,#ffedd4 215px,#ffe7cc 227px,#ffe0c4 239px,#ffd9bc 251px,#ffd2b3 263px,#ffcbaa 275px,#ffc4a1 287px,#ffbd98 298px,#ffb68f 310px,#ffaf86 322px,#ffa77c 334px,#ffa073 346px,#ff9c6f 358px,#ff986a 370px,#ff9466 382px,#ff9061 394px,#ff8c5d 406px,#ff8859 418px,#ff8554 430px,#ff8150 442px,#ff7e4c 454px,#ff7a47 466px,#ff7742 478px,#ff743e 489px,#ff7039 501px,#ff6d33 513px,#ff6a2e 525px,#ff6727 537px,#ff641f 549px,#ff6115 561px,#ff5e02 573px,#ff5d02 585px)"></div>
<div class="a" style="left:516px;top:324px;width:594px;height:2px;background:linear-gradient(90deg,#8fffe6 0px,#a0ffe8 12px,#afffe9 24px,#bcffea 36px,#c7ffeb 48px,#d0ffed 59px,#d9ffee 71px,#e0ffef 83px,#e6fff0 95px,#ebfff0 107px,#effff1 119px,#f3fff1 131px,#f6fff0 143px,#fafff0 154px,#fdffee 166px,#fffdeb 178px,#fff8e5 190px,#fff3de 202px,#ffedd7 214px,#ffe7d0 226px,#ffe1c8 238px,#ffdac0 249px,#ffd3b7 261px,#ffccae 273px,#ffc5a6 285px,#ffbe9d 297px,#ffb694 309px,#ffaf8b 321px,#ffa881 333px,#ffa178 345px,#ff9b71 356px,#ff976d 368px,#ff9369 380px,#ff8f64 392px,#ff8b60 404px,#ff885c 416px,#ff8458 428px,#ff8053 440px,#ff7d4f 451px,#ff7a4b 463px,#ff7646 475px,#ff7342 487px,#ff703d 499px,#ff6c38 511px,#ff6933 523px,#ff662d 535px,#ff6327 546px,#ff601f 558px,#ff5d15 570px,#ff5a02 582px,#ff5902 594px)"></div>
<div class="a" style="left:515px;top:326px;width:603px;height:2px;background:linear-gradient(90deg,#91ffe9 0px,#a3ffea 12px,#b1ffeb 24px,#beffec 35px,#c9ffed 47px,#d2ffee 59px,#dbfff0 71px,#e2fff1 83px,#e8fff2 95px,#edfff2 106px,#f1fff3 118px,#f4fff3 130px,#f7fff3 142px,#fbfff2 154px,#fefff1 166px,#fffced 177px,#fff8e7 189px,#fff3e1 201px,#ffedda 213px,#ffe7d3 225px,#ffe1cb 236px,#ffdac3 248px,#ffd3ba 260px,#ffccb2 272px,#ffc5a9 284px,#ffbea0 296px,#ffb797 307px,#ffaf8e 319px,#ffa885 331px,#ffa17c 343px,#ff9a74 355px,#ff9670 367px,#ff926b 378px,#ff8e67 390px,#ff8a63 402px,#ff875f 414px,#ff835a 426px,#ff7f56 437px,#ff7c52 449px,#ff784e 461px,#ff754a 473px,#ff7245 485px,#ff6f41 497px,#ff6b3c 508px,#ff6837 520px,#ff6532 532px,#ff622d 544px,#ff5f26 556px,#ff5c1f 568px,#ff5914 579px,#ff5602 591px,#ff5502 603px)"></div>
<div class="a" style="left:513px;top:328px;width:612px;height:2px;background:linear-gradient(90deg,#92ffeb 0px,#a4ffec 12px,#b2ffed 24px,#bfffee 35px,#caffef 47px,#d4fff0 59px,#dcfff1 71px,#e3fff2 82px,#e9fff3 94px,#eefff4 106px,#f2fff5 118px,#f5fff5 129px,#f8fff5 141px,#fbfff4 153px,#fefff3 165px,#fffcef 177px,#fff8ea 188px,#fff3e4 200px,#ffeedd 212px,#ffe8d6 224px,#ffe2cf 235px,#ffdbc7 247px,#ffd4be 259px,#ffcdb6 271px,#ffc6ad 282px,#ffbfa4 294px,#ffb79c 306px,#ffb093 318px,#ffa98a 330px,#ffa281 341px,#ff9a78 353px,#ff9572 365px,#ff916e 377px,#ff8d6a 388px,#ff8a66 400px,#ff8662 412px,#ff825d 424px,#ff7f59 435px,#ff7b55 447px,#ff7851 459px,#ff744d 471px,#ff7149 483px,#ff6e45 494px,#ff6a40 506px,#ff673c 518px,#ff6437 530px,#ff6132 541px,#ff5e2c 553px,#ff5b26 565px,#ff581f 577px,#ff5414 588px,#ff5202 600px,#ff5102 612px)"></div>
<div class="a" style="left:511px;top:330px;width:621px;height:2px;background:linear-gradient(90deg,#93ffec 0px,#a5ffed 12px,#b4ffef 24px,#c1fff0 36px,#ccfff1 48px,#d6fff2 60px,#defff3 72px,#e5fff4 84px,#ebfff5 96px,#f0fff6 107px,#f4fff6 119px,#f7fff7 131px,#fafff6 143px,#fcfff6 155px,#fffff5 167px,#fffbf0 179px,#fff7eb 191px,#fff2e5 203px,#ffedde 215px,#ffe7d7 227px,#ffe0cf 239px,#ffd9c7 251px,#ffd2be 263px,#ffcbb6 275px,#ffc3ad 287px,#ffbca4 299px,#ffb49b 310px,#ffad93 322px,#ffa58a 334px,#ff9e81 346px,#ff9777 358px,#ff9273 370px,#ff8e6e 382px,#ff8a6a 394px,#ff8666 406px,#ff8362 418px,#ff7f5e 430px,#ff7b5a 442px,#ff7856 454px,#ff7451 466px,#ff714d 478px,#ff6e49 490px,#ff6a45 502px,#ff6741 514px,#ff643c 525px,#ff6037 537px,#ff5d32 549px,#ff5a2d 561px,#ff5726 573px,#ff541f 585px,#ff5015 597px,#ff4e02 609px,#ff4d02 621px)"></div>
<div class="a" style="left:510px;top:332px;width:629px;height:2px;background:linear-gradient(90deg,#95ffee 0px,#a7ffef 12px,#b6fff0 24px,#c3fff1 36px,#cefff3 47px,#d8fff4 59px,#e0fff5 71px,#e7fff6 83px,#edfff7 95px,#f2fff7 107px,#f5fff8 119px,#f8fff8 131px,#fbfff8 142px,#fdfff8 154px,#fffef6 166px,#fffbf2 178px,#fff7ed 190px,#fff2e7 202px,#ffede1 214px,#ffe7d9 225px,#ffe1d2 237px,#ffdaca 249px,#ffd3c2 261px,#ffcbb9 273px,#ffc4b1 285px,#ffbca8 297px,#ffb59f 309px,#ffad96 320px,#ffa68e 332px,#ff9e85 344px,#ff977c 356px,#ff9175 368px,#ff8d71 380px,#ff896d 392px,#ff8569 404px,#ff8265 415px,#ff7e61 427px,#ff7a5d 439px,#ff7759 451px,#ff7355 463px,#ff7051 475px,#ff6d4d 487px,#ff6948 498px,#ff6644 510px,#ff6340 522px,#ff5f3b 534px,#ff5c37 546px,#ff5932 558px,#ff562c 570px,#ff5326 582px,#ff4f1f 593px,#ff4c15 605px,#ff4902 617px,#ff4802 629px)"></div>
<div class="a" style="left:508px;top:334px;width:638px;height:2px;background:linear-gradient(90deg,#96fff0 0px,#a7fff1 12px,#b6fff2 24px,#c3fff3 35px,#cffff4 47px,#d8fff5 59px,#e1fff6 71px,#e8fff7 83px,#eefff8 95px,#f3fff9 106px,#f6fff9 118px,#f9fffa 130px,#fbfffa 142px,#fdfff9 154px,#fffef8 165px,#fffbf4 177px,#fff7ef 189px,#fff3ea 201px,#ffeee3 213px,#ffe8dc 224px,#ffe1d5 236px,#ffdbcd 248px,#ffd4c5 260px,#ffccbd 272px,#ffc5b4 284px,#ffbdac 295px,#ffb6a3 307px,#ffae9a 319px,#ffa692 331px,#ff9f89 343px,#ff9780 354px,#ff9078 366px,#ff8c74 378px,#ff886f 390px,#ff856b 402px,#ff8167 414px,#ff7d63 425px,#ff795f 437px,#ff765c 449px,#ff7258 461px,#ff6f54 473px,#ff6c50 484px,#ff684c 496px,#ff6548 508px,#ff6244 520px,#ff5e3f 532px,#ff5b3b 543px,#ff5836 555px,#ff5531 567px,#ff512c 579px,#ff4e26 591px,#ff4b1f 603px,#ff4715 614px,#ff4402 626px,#ff4402 638px)"></div>
<div class="a" style="left:506px;top:336px;width:648px;height:2px;background:linear-gradient(90deg,#96fff2 0px,#a7fff3 12px,#b7fff4 24px,#c4fff5 35px,#cffff6 47px,#d9fff6 59px,#e2fff7 71px,#e9fff8 82px,#effff9 94px,#f4fffa 106px,#f7fffb 118px,#fafffb 130px,#fcfffb 141px,#fefffb 153px,#fffef9 165px,#fffbf6 177px,#fff8f1 189px,#fff3ec 200px,#ffeee6 212px,#ffe8df 224px,#ffe2d8 236px,#ffdbd0 247px,#ffd4c8 259px,#ffcdc0 271px,#ffc5b7 283px,#ffbeaf 295px,#ffb6a6 306px,#ffae9e 318px,#ffa795 330px,#ff9f8d 342px,#ff9884 353px,#ff907b 365px,#ff8b76 377px,#ff8772 389px,#ff836e 401px,#ff806a 412px,#ff7c66 424px,#ff7862 436px,#ff755e 448px,#ff715a 459px,#ff6e56 471px,#ff6a53 483px,#ff674f 495px,#ff644b 507px,#ff6047 518px,#ff5d43 530px,#ff5a3f 542px,#ff573a 554px,#ff5336 566px,#ff5031 577px,#ff4d2b 589px,#ff4925 601px,#ff461e 613px,#ff4215 624px,#ff3f02 636px,#ff3f02 648px)"></div>
<div class="a" style="left:505px;top:338px;width:656px;height:2px;background:linear-gradient(90deg,#97fff4 0px,#a9fff5 12px,#b8fff6 24px,#c6fff6 36px,#d1fff7 48px,#dbfff8 60px,#e4fff9 72px,#ebfffa 83px,#f1fffa 95px,#f5fffb 107px,#f9fffc 119px,#fbfffc 131px,#fdfffc 143px,#fffffc 155px,#fffdfa 167px,#fffaf6 179px,#fff7f1 191px,#fff2ec 203px,#ffede6 215px,#ffe7df 227px,#ffe0d7 239px,#ffd9d0 250px,#ffd2c7 262px,#ffcabf 274px,#ffc2b7 286px,#ffbbae 298px,#ffb3a5 310px,#ffab9d 322px,#ffa394 334px,#ff9b8c 346px,#ff9483 358px,#ff8c7a 370px,#ff8876 382px,#ff8472 394px,#ff806e 406px,#ff7c6a 417px,#ff7966 429px,#ff7562 441px,#ff715e 453px,#ff6e5a 465px,#ff6a57 477px,#ff6753 489px,#ff634f 501px,#ff604b 513px,#ff5d47 525px,#ff5943 537px,#ff563f 549px,#ff533a 561px,#ff4f36 573px,#ff4c31 584px,#ff482c 596px,#ff4526 608px,#ff411f 620px,#ff3d15 632px,#ff3a02 644px,#ff3902 656px)"></div>
<div class="a" style="left:503px;top:340px;width:665px;height:2px;background:linear-gradient(90deg,#97fff6 0px,#a9fff7 12px,#b8fff7 24px,#c6fff8 36px,#d1fff9 48px,#dbfff9 59px,#e4fffa 71px,#ebfffb 83px,#f1fffb 95px,#f6fffc 107px,#fafffd 119px,#fcfffd 131px,#fefffd 142px,#fffffd 154px,#fffdfb 166px,#fffbf8 178px,#fff7f3 190px,#fff3ee 202px,#ffede8 214px,#ffe7e1 226px,#ffe1da 238px,#ffdad2 249px,#ffd3cb 261px,#ffcbc2 273px,#ffc3ba 285px,#ffbbb1 297px,#ffb3a9 309px,#ffaca0 321px,#ffa498 332px,#ff9c8f 344px,#ff9487 356px,#ff8c7e 368px,#ff8779 380px,#ff8374 392px,#ff7f70 404px,#ff7b6d 416px,#ff7869 428px,#ff7465 439px,#ff7061 451px,#ff6d5d 463px,#ff6959 475px,#ff6656 487px,#ff6252 499px,#ff5f4e 511px,#ff5c4a 522px,#ff5846 534px,#ff5542 546px,#ff513e 558px,#ff4e3a 570px,#ff4a35 582px,#ff4731 594px,#ff432b 606px,#ff4026 618px,#ff3c1f 629px,#ff3815 641px,#ff3402 653px,#ff3402 665px)"></div>
<div class="a" style="left:501px;top:342px;width:674px;height:2px;background:linear-gradient(90deg,#96fff8 0px,#a8fff9 12px,#b8fff9 24px,#c6fff9 35px,#d1fffa 47px,#dbfffb 59px,#e4fffb 71px,#ecfffc 83px,#f2fffc 95px,#f7fffd 106px,#fafffd 118px,#fdfffe 130px,#fefffe 142px,#fffffe 154px,#fffefc 166px,#fffbf9 177px,#fff8f5 189px,#fff3f0 201px,#ffeeea 213px,#ffe8e4 225px,#ffe2dd 236px,#ffdbd5 248px,#ffd3cd 260px,#ffccc5 272px,#ffc4bd 284px,#ffbcb5 296px,#ffb4ac 307px,#ffaca4 319px,#ffa49b 331px,#ff9c93 343px,#ff958b 355px,#ff8d82 367px,#ff867b 378px,#ff8277 390px,#ff7e73 402px,#ff7a6f 414px,#ff776b 426px,#ff7367 438px,#ff6f64 449px,#ff6c60 461px,#ff685c 473px,#ff6559 485px,#ff6155 497px,#ff5e51 508px,#ff5a4d 520px,#ff574a 532px,#ff5446 544px,#ff5042 556px,#ff4d3e 568px,#ff493a 579px,#ff4635 591px,#ff4230 603px,#ff3e2b 615px,#ff3a25 627px,#ff361f 639px,#ff3216 650px,#ff2e02 662px,#ff2d02 674px)"></div>
<div class="a" style="left:500px;top:344px;width:682px;height:2px;background:linear-gradient(90deg,#97fffa 0px,#aafffa 12px,#b9fffb 24px,#c7fffb 36px,#d3fffb 48px,#ddfffc 60px,#e6fffc 72px,#edfffd 84px,#f3fffd 96px,#f8fffe 108px,#fbfffe 120px,#fdfffe 132px,#fefffe 144px,#fffffe 156px,#fffdfc 168px,#fffbf9 179px,#fff7f5 191px,#fff2f0 203px,#ffedea 215px,#ffe6e3 227px,#ffe0dc 239px,#ffd8d5 251px,#ffd1cd 263px,#ffc9c4 275px,#ffc1bc 287px,#ffb9b4 299px,#ffb1ab 311px,#ffa9a3 323px,#ffa19a 335px,#ff9992 347px,#ff918a 359px,#ff8981 371px,#ff837b 383px,#ff7f77 395px,#ff7b73 407px,#ff776f 419px,#ff736b 431px,#ff6f68 443px,#ff6c64 455px,#ff6860 467px,#ff655c 479px,#ff6159 491px,#ff5e55 503px,#ff5a51 514px,#ff574e 526px,#ff534a 538px,#ff4f46 550px,#ff4c42 562px,#ff483e 574px,#ff453a 586px,#ff4135 598px,#ff3d31 610px,#ff392b 622px,#ff3526 634px,#ff301f 646px,#ff2b16 658px,#ff2602 670px,#ff2602 682px)"></div>
<div class="a" style="left:498px;top:346px;width:691px;height:2px;background:linear-gradient(90deg,#96fffc 0px,#a9fffc 12px,#b9fffc 24px,#c6fffd 36px,#d2fffd 48px,#ddfffd 60px,#e5fffd 71px,#edfffe 83px,#f3fffe 95px,#f8fffe 107px,#fbfffe 119px,#feffff 131px,#ffffff 143px,#ffffff 155px,#fffdfd 167px,#fffbfa 179px,#fff7f6 191px,#fff3f1 203px,#ffedec 214px,#ffe7e5 226px,#ffe0de 238px,#ffd9d7 250px,#ffd2cf 262px,#ffcac7 274px,#ffc2bf 286px,#ffbab7 298px,#ffb1ae 310px,#ffa9a6 322px,#ffa19e 334px,#ff9995 346px,#ff918d 357px,#ff8985 369px,#ff827d 381px,#ff7e79 393px,#ff7a76 405px,#ff7672 417px,#ff726e 429px,#ff6e6a 441px,#ff6b66 453px,#ff6763 465px,#ff635f 477px,#ff605b 488px,#ff5c58 500px,#ff5954 512px,#ff5551 524px,#ff524d 536px,#ff4e49 548px,#ff4b45 560px,#ff4741 572px,#ff433d 584px,#ff3f39 596px,#ff3b35 608px,#ff3730 620px,#ff332b 631px,#ff2e26 643px,#ff291f 655px,#ff2316 667px,#ff1c02 679px,#ff1c02 691px)"></div>
<div class="a" style="left:496px;top:348px;width:701px;height:2px;background:linear-gradient(90deg,#95fffe 0px,#a8fffe 12px,#b8fffe 24px,#c6fffe 36px,#d2fffe 48px,#dcfffe 59px,#e5ffff 71px,#edffff 83px,#f3ffff 95px,#f8ffff 107px,#fbffff 119px,#feffff 131px,#ffffff 143px,#ffffff 154px,#fffefd 166px,#fffbfb 178px,#fff8f7 190px,#fff3f3 202px,#ffeeed 214px,#ffe8e7 226px,#ffe1e0 238px,#ffdad9 250px,#ffd2d1 261px,#ffcaca 273px,#ffc2c2 285px,#ffbab9 297px,#ffb2b1 309px,#ffa9a9 321px,#ffa1a1 333px,#ff9998 345px,#ff9190 356px,#ff8988 368px,#ff8180 380px,#ff7c7c 392px,#ff7878 404px,#ff7574 416px,#ff7170 428px,#ff6d6c 440px,#ff6969 451px,#ff6665 463px,#ff6261 475px,#ff5f5e 487px,#ff5b5a 499px,#ff5757 511px,#ff5453 523px,#ff5050 535px,#ff4d4c 547px,#ff4948 558px,#ff4545 570px,#ff4141 582px,#ff3d3d 594px,#ff3939 606px,#ff3534 618px,#ff3030 630px,#ff2b2b 642px,#ff2625 653px,#ff1f1e 665px,#ff1715 677px,#ff0802 689px,#ff0702 701px)"></div>
<div class="a" style="left:495px;top:350px;width:709px;height:2px;background:linear-gradient(90deg,#94feff 0px,#a7feff 12px,#b7feff 24px,#c5feff 35px,#d1feff 47px,#dcfeff 59px,#e5feff 71px,#ecfeff 83px,#f2feff 95px,#f7ffff 106px,#fbffff 118px,#fdffff 130px,#ffffff 142px,#ffffff 154px,#fffefe 165px,#fffbfb 177px,#fff8f8 189px,#fff3f4 201px,#ffeeee 213px,#ffe8e9 225px,#ffe1e2 236px,#ffdadb 248px,#ffd2d3 260px,#ffcacc 272px,#ffc2c4 284px,#ffbabc 295px,#ffb2b4 307px,#ffaaab 319px,#ffa1a3 331px,#ff999b 343px,#ff9193 354px,#ff898b 366px,#ff8183 378px,#ff7b7e 390px,#ff777a 402px,#ff7376 414px,#ff7072 425px,#ff6c6f 437px,#ff686b 449px,#ff6467 461px,#ff6164 473px,#ff5d60 484px,#ff5a5d 496px,#ff5659 508px,#ff5256 520px,#ff4f52 532px,#ff4b4f 544px,#ff474b 555px,#ff4348 567px,#ff4044 579px,#ff3c40 591px,#ff373c 603px,#ff3338 614px,#ff2e34 626px,#ff292f 638px,#ff232a 650px,#ff1b25 662px,#ff101e 674px,#ff041a 685px,#ff041a 697px,#ff041a 709px)"></div>
<div class="a" style="left:493px;top:352px;width:712px;height:2px;background:linear-gradient(90deg,#91fcff 0px,#a5fcff 12px,#b5fcff 24px,#c3fcff 36px,#cffcff 47px,#dafdff 59px,#e3fdff 71px,#ebfdff 83px,#f1feff 95px,#f6feff 107px,#fafeff 119px,#fdfeff 131px,#ffffff 142px,#ffffff 154px,#fffdfe 166px,#fffbfc 178px,#fff7f8 190px,#fff3f4 202px,#ffedef 214px,#ffe7e9 225px,#ffe0e3 237px,#ffd9dc 249px,#ffd1d4 261px,#ffc9cc 273px,#ffc1c5 285px,#ffb9bd 297px,#ffb0b5 309px,#ffa8ac 320px,#ffa0a4 332px,#ff979c 344px,#ff8f94 356px,#ff878c 368px,#ff7f84 380px,#ff797f 392px,#ff757b 403px,#ff7177 415px,#ff6d74 427px,#ff6970 439px,#ff666c 451px,#ff6269 463px,#ff5e65 475px,#ff5b62 487px,#ff575e 498px,#ff535b 510px,#ff5057 522px,#ff4c54 534px,#ff4850 546px,#ff444d 558px,#ff4049 570px,#ff3c46 581px,#ff3842 593px,#ff333e 605px,#ff2e3a 617px,#ff2936 629px,#ff2332 641px,#ff1c2d 653px,#ff1128 665px,#ff0425 676px,#ff0424 688px,#ff0424 700px,#ff0424 712px)"></div>
<div class="a" style="left:492px;top:354px;width:707px;height:2px;background:linear-gradient(90deg,#90f9ff 0px,#a4faff 12px,#b4faff 24px,#c2faff 36px,#cffbff 48px,#d9fbff 60px,#e3fcff 72px,#eafcff 84px,#f1fdff 96px,#f6fdff 108px,#fafdff 120px,#fdfeff 132px,#fefeff 144px,#fffeff 156px,#fffdfe 168px,#fffafb 180px,#fff6f8 192px,#fff1f4 204px,#ffebee 216px,#ffe5e8 228px,#ffdee2 240px,#ffd6db 252px,#ffcfd3 264px,#ffc6cc 276px,#ffbec4 288px,#ffb6bc 300px,#ffadb4 312px,#ffa5ab 324px,#ff9ca3 336px,#ff949b 348px,#ff8b93 359px,#ff838c 371px,#ff7a84 383px,#ff767f 395px,#ff727b 407px,#ff6e78 419px,#ff6a74 431px,#ff6670 443px,#ff626d 455px,#ff5e69 467px,#ff5b65 479px,#ff5762 491px,#ff535f 503px,#ff4f5b 515px,#ff4c58 527px,#ff4854 539px,#ff4451 551px,#ff404d 563px,#ff3b4a 575px,#ff3746 587px,#ff3242 599px,#ff2d3f 611px,#ff283b 623px,#ff2136 635px,#ff1932 647px,#ff0a2d 659px,#ff042c 671px,#ff042c 683px,#ff042c 695px,#ff042b 707px)"></div>
<div class="a" style="left:490px;top:356px;width:698px;height:2px;background:linear-gradient(90deg,#8cf7ff 0px,#a0f8ff 12px,#b1f8ff 24px,#bff9ff 35px,#ccf9ff 47px,#d7faff 59px,#e0faff 71px,#e8fbff 83px,#effbff 95px,#f4fcff 106px,#f9fdff 118px,#fcfdff 130px,#fefeff 142px,#fffeff 154px,#fffcfe 166px,#fffafc 177px,#fff6f9 189px,#fff2f5 201px,#ffecf0 213px,#ffe6eb 225px,#ffdfe4 237px,#ffd8de 248px,#ffd0d7 260px,#ffc8cf 272px,#ffc0c8 284px,#ffb8c0 296px,#ffafb8 308px,#ffa7b0 319px,#ff9ea8 331px,#ff96a0 343px,#ff8d98 355px,#ff8591 367px,#ff7d89 379px,#ff7683 390px,#ff727f 402px,#ff6e7b 414px,#ff6a77 426px,#ff6674 438px,#ff6270 450px,#ff5e6d 461px,#ff5b69 473px,#ff5766 485px,#ff5362 497px,#ff4f5f 509px,#ff4c5c 521px,#ff4858 532px,#ff4455 544px,#ff4051 556px,#ff3b4e 568px,#ff374b 580px,#ff3247 592px,#ff2d43 603px,#ff2740 615px,#ff213c 627px,#ff1838 639px,#ff0a34 651px,#ff0433 663px,#ff0432 674px,#ff0432 686px,#ff0432 698px)"></div>
<div class="a" style="left:488px;top:358px;width:688px;height:2px;background:linear-gradient(90deg,#89f5ff 0px,#9df6ff 12px,#aef6ff 24px,#bdf7ff 36px,#caf7ff 47px,#d5f8ff 59px,#def9ff 71px,#e6f9ff 83px,#edfaff 95px,#f3fbff 107px,#f7fcff 119px,#fbfcff 130px,#fdfdff 142px,#fffdff 154px,#fffcfe 166px,#fff9fc 178px,#fff6f9 190px,#fff1f5 202px,#ffecf0 214px,#ffe5eb 225px,#ffdfe5 237px,#ffd7de 249px,#ffcfd7 261px,#ffc7d0 273px,#ffbfc8 285px,#ffb7c1 297px,#ffaeb9 308px,#ffa6b1 320px,#ff9da9 332px,#ff94a2 344px,#ff8c9a 356px,#ff8392 368px,#ff7b8a 380px,#ff7484 391px,#ff7080 403px,#ff6c7c 415px,#ff6879 427px,#ff6475 439px,#ff6072 451px,#ff5c6e 463px,#ff586b 474px,#ff5467 486px,#ff5164 498px,#ff4d60 510px,#ff495d 522px,#ff455a 534px,#ff4156 546px,#ff3c53 558px,#ff3850 569px,#ff334c 581px,#ff2e49 593px,#ff2845 605px,#ff2242 617px,#ff1a3e 629px,#ff0d3a 641px,#ff0439 652px,#ff0438 664px,#ff0438 676px,#ff0437 688px)"></div>
<div class="a" style="left:487px;top:360px;width:678px;height:2px;background:linear-gradient(90deg,#87f3ff 0px,#9bf3ff 12px,#adf4ff 24px,#bbf5ff 36px,#c8f5ff 48px,#d3f6ff 59px,#ddf7ff 71px,#e5f8ff 83px,#ecf9ff 95px,#f2faff 107px,#f7faff 119px,#fafbff 131px,#fdfcff 143px,#fefcff 155px,#fffafe 167px,#fff8fc 178px,#fff4f9 190px,#fff0f5 202px,#ffeaf0 214px,#ffe4eb 226px,#ffdde5 238px,#ffd5de 250px,#ffced7 262px,#ffc5d0 274px,#ffbdc8 285px,#ffb5c1 297px,#ffacb9 309px,#ffa3b1 321px,#ff9baa 333px,#ff92a2 345px,#ff899a 357px,#ff8193 369px,#ff788b 381px,#ff7185 393px,#ff6d81 404px,#ff697d 416px,#ff657a 428px,#ff6176 440px,#ff5d73 452px,#ff596f 464px,#ff556c 476px,#ff5268 488px,#ff4e65 500px,#ff4a62 511px,#ff465e 523px,#ff415b 535px,#ff3d58 547px,#ff3954 559px,#ff3451 571px,#ff2f4e 583px,#ff294a 595px,#ff2247 607px,#ff1a43 619px,#ff0e40 630px,#ff043e 642px,#ff043e 654px,#ff043d 666px,#ff043c 678px)"></div>
<div class="a" style="left:485px;top:362px;width:669px;height:2px;background:linear-gradient(90deg,#83f0ff 0px,#98f1ff 12px,#aaf2ff 24px,#b9f3ff 36px,#c6f3ff 48px,#d1f4ff 60px,#dbf5ff 72px,#e3f6ff 84px,#ebf7ff 96px,#f1f8ff 108px,#f5f9ff 119px,#f9faff 131px,#fcfaff 143px,#fefbff 155px,#fff9fe 167px,#fff7fb 179px,#fff3f9 191px,#ffeef5 203px,#ffe9f0 215px,#ffe2eb 227px,#ffdbe5 239px,#ffd4de 251px,#ffccd7 263px,#ffc4d0 275px,#ffbbc9 287px,#ffb3c1 299px,#ffaaba 311px,#ffa1b2 323px,#ff99aa 334px,#ff90a3 346px,#ff879b 358px,#ff7e94 370px,#ff758c 382px,#ff6f86 394px,#ff6b82 406px,#ff667f 418px,#ff627b 430px,#ff5f77 442px,#ff5b74 454px,#ff5770 466px,#ff536d 478px,#ff4f69 490px,#ff4b66 502px,#ff4663 514px,#ff4260 526px,#ff3e5c 538px,#ff3959 550px,#ff3456 561px,#ff2f52 573px,#ff2a4f 585px,#ff234c 597px,#ff1b48 609px,#ff0e45 621px,#ff0443 633px,#ff0443 645px,#ff0442 657px,#ff0441 669px)"></div>
<div class="a" style="left:483px;top:364px;width:660px;height:2px;background:linear-gradient(90deg,#7feeff 0px,#94efff 12px,#a6f0ff 24px,#b5f0ff 35px,#c2f1ff 47px,#cef2ff 59px,#d8f3ff 71px,#e0f4ff 82px,#e8f5ff 94px,#eef6ff 106px,#f3f7ff 118px,#f7f8ff 130px,#fbf9ff 141px,#fdf9ff 153px,#fff9ff 165px,#fff6fc 177px,#fff3f9 189px,#ffeef6 200px,#ffe9f2 212px,#ffe3ed 224px,#ffdce7 236px,#ffd5e1 248px,#ffceda 259px,#ffc6d3 271px,#ffbdcc 283px,#ffb5c5 295px,#ffacbe 306px,#ffa4b6 318px,#ff9baf 330px,#ff92a7 342px,#ff8aa0 354px,#ff8198 365px,#ff7891 377px,#ff6f8a 389px,#ff6b86 401px,#ff6682 412px,#ff627e 424px,#ff5e7b 436px,#ff5b77 448px,#ff5774 460px,#ff5370 471px,#ff4f6d 483px,#ff4b6a 495px,#ff4667 507px,#ff4263 519px,#ff3e60 530px,#ff395d 542px,#ff345a 554px,#ff2f56 566px,#ff2953 578px,#ff2350 589px,#ff1b4d 601px,#ff0e49 613px,#ff0448 625px,#ff0447 636px,#ff0446 648px,#ff0446 660px)"></div>
<div class="a" style="left:482px;top:366px;width:649px;height:2px;background:linear-gradient(90deg,#7cecff 0px,#92ecff 12px,#a4edff 24px,#b3eeff 35px,#c0efff 47px,#ccf0ff 59px,#d6f1ff 71px,#dff2ff 83px,#e6f4ff 94px,#edf5ff 106px,#f2f6ff 118px,#f6f7ff 130px,#faf7ff 142px,#fdf8ff 153px,#fff7ff 165px,#fff4fc 177px,#fff1f9 189px,#ffecf6 201px,#ffe7f1 212px,#ffe1ec 224px,#ffdbe7 236px,#ffd3e1 248px,#ffccda 260px,#ffc4d4 271px,#ffbbcc 283px,#ffb3c5 295px,#ffaabe 307px,#ffa2b7 319px,#ff99af 330px,#ff90a8 342px,#ff87a0 354px,#ff7e99 366px,#ff7592 378px,#ff6c8b 389px,#ff6887 401px,#ff6483 413px,#ff6080 425px,#ff5c7c 437px,#ff5878 448px,#ff5475 460px,#ff5072 472px,#ff4c6e 484px,#ff476b 496px,#ff4368 507px,#ff3f65 519px,#ff3a61 531px,#ff355e 543px,#ff305b 555px,#ff2b58 566px,#ff2455 578px,#ff1c52 590px,#ff104e 602px,#ff044d 614px,#ff044c 625px,#ff044b 637px,#ff044a 649px)"></div>
<div class="a" style="left:480px;top:368px;width:640px;height:2px;background:linear-gradient(90deg,#77e9ff 0px,#8eeaff 12px,#a0ebff 24px,#b0ecff 36px,#bdedff 47px,#c9eeff 59px,#d4efff 71px,#ddf0ff 83px,#e4f2ff 95px,#ebf3ff 107px,#f1f4ff 119px,#f5f5ff 130px,#f9f5ff 142px,#fcf6ff 154px,#fff6ff 166px,#fff3fc 178px,#ffeff9 190px,#ffebf5 201px,#ffe5f1 213px,#ffdfec 225px,#ffd9e7 237px,#ffd1e1 249px,#ffcada 261px,#ffc2d4 273px,#ffb9cd 284px,#ffb1c5 296px,#ffa8be 308px,#ff9fb7 320px,#ff97b0 332px,#ff8ea8 344px,#ff85a1 356px,#ff7c9a 367px,#ff7393 379px,#ff6a8c 391px,#ff6588 403px,#ff6184 415px,#ff5d81 427px,#ff597d 439px,#ff557a 450px,#ff5176 462px,#ff4d73 474px,#ff486f 486px,#ff446c 498px,#ff4069 510px,#ff3b66 521px,#ff3663 533px,#ff315f 545px,#ff2b5c 557px,#ff2559 569px,#ff1d56 581px,#ff1153 593px,#ff0451 604px,#ff0450 616px,#ff044f 628px,#ff044e 640px)"></div>
<div class="a" style="left:478px;top:370px;width:631px;height:2px;background:linear-gradient(90deg,#72e6ff 0px,#8ae7ff 12px,#9de8ff 24px,#ade9ff 36px,#baebff 48px,#c6ecff 60px,#d1edff 71px,#daeeff 83px,#e2efff 95px,#e9f1ff 107px,#eff2ff 119px,#f4f3ff 131px,#f8f3ff 143px,#fbf4ff 155px,#fff4ff 167px,#fff1fc 179px,#ffedf9 190px,#ffe9f5 202px,#ffe3f1 214px,#ffddec 226px,#ffd6e7 238px,#ffcfe1 250px,#ffc7da 262px,#ffbfd4 274px,#ffb7cd 286px,#ffaec6 298px,#ffa6be 310px,#ff9db7 321px,#ff94b0 333px,#ff8ba9 345px,#ff82a2 357px,#ff799a 369px,#ff7093 381px,#ff678d 393px,#ff6389 405px,#ff5f85 417px,#ff5a82 429px,#ff567e 441px,#ff527b 452px,#ff4e77 464px,#ff4974 476px,#ff4570 488px,#ff416d 500px,#ff3c6a 512px,#ff3767 524px,#ff3264 536px,#ff2c60 548px,#ff255d 560px,#ff1d5a 571px,#ff1257 583px,#ff0455 595px,#ff0454 607px,#ff0453 619px,#ff0452 631px)"></div>
<div class="a" style="left:477px;top:372px;width:620px;height:2px;background:linear-gradient(90deg,#6fe4ff 0px,#87e5ff 12px,#9ae6ff 24px,#aae7ff 36px,#b8e8ff 48px,#c4e9ff 60px,#cfebff 72px,#d8ecff 83px,#e1edff 95px,#e8eeff 107px,#eef0ff 119px,#f3f1ff 131px,#f7f1ff 143px,#fbf2ff 155px,#fef2ff 167px,#ffeffc 179px,#ffebf9 191px,#ffe6f5 203px,#ffe1f1 215px,#ffdbec 227px,#ffd4e6 238px,#ffcde0 250px,#ffc5da 262px,#ffbdd3 274px,#ffb5cd 286px,#ffacc6 298px,#ffa3bf 310px,#ff9ab7 322px,#ff91b0 334px,#ff88a9 346px,#ff7fa2 358px,#ff769b 370px,#ff6c94 382px,#ff648e 393px,#ff608a 405px,#ff5c86 417px,#ff5883 429px,#ff537f 441px,#ff4f7c 453px,#ff4b78 465px,#ff4675 477px,#ff4272 489px,#ff3d6e 501px,#ff386b 513px,#ff3368 525px,#ff2d65 537px,#ff2662 548px,#ff1f5f 560px,#ff145c 572px,#ff0459 584px,#ff0458 596px,#ff0457 608px,#ff0456 620px)"></div>
<div class="a" style="left:475px;top:374px;width:611px;height:2px;background:linear-gradient(90deg,#6ae1ff 0px,#83e2ff 12px,#96e3ff 24px,#a7e4ff 36px,#b5e6ff 48px,#c2e7ff 60px,#cce8ff 72px,#d6e9ff 84px,#deebff 96px,#e6ecff 108px,#ecedff 120px,#f1eeff 132px,#f6efff 144px,#faefff 156px,#fef0ff 168px,#ffedfd 180px,#ffe9f9 192px,#ffe4f5 204px,#ffdff0 216px,#ffd8eb 228px,#ffd2e6 240px,#ffcae0 252px,#ffc3da 264px,#ffbad3 276px,#ffb2cd 288px,#ffa9c6 300px,#ffa1bf 311px,#ff98b8 323px,#ff8fb0 335px,#ff85a9 347px,#ff7ca2 359px,#ff739b 371px,#ff6994 383px,#ff628f 395px,#ff5d8b 407px,#ff5987 419px,#ff5584 431px,#ff5080 443px,#ff4c7d 455px,#ff4779 467px,#ff4376 479px,#ff3e73 491px,#ff396f 503px,#ff336c 515px,#ff2e69 527px,#ff2766 539px,#ff1f63 551px,#ff1560 563px,#ff045d 575px,#ff045c 587px,#ff045b 599px,#ff045a 611px)"></div>
<div class="a" style="left:473px;top:376px;width:602px;height:2px;background:linear-gradient(90deg,#64deff 0px,#7edfff 12px,#92e0ff 24px,#a2e1ff 35px,#b1e3ff 47px,#bde4ff 59px,#c9e5ff 71px,#d2e7ff 83px,#dbe8ff 94px,#e2e9ff 106px,#e9ebff 118px,#efecff 130px,#f4ecff 142px,#f8edff 153px,#fcedff 165px,#ffecfe 177px,#ffe8fa 189px,#ffe3f6 201px,#ffdef2 212px,#ffd8ed 224px,#ffd2e8 236px,#ffcbe2 248px,#ffc3dc 260px,#ffbbd6 271px,#ffb3d0 283px,#ffabc9 295px,#ffa2c2 307px,#ff9abb 319px,#ff91b4 331px,#ff88ae 342px,#ff7fa7 354px,#ff75a0 366px,#ff6c99 378px,#ff6292 390px,#ff5d8e 401px,#ff598b 413px,#ff5487 425px,#ff5084 437px,#ff4c80 449px,#ff477d 460px,#ff4379 472px,#ff3e76 484px,#ff3973 496px,#ff3370 508px,#ff2e6d 519px,#ff276a 531px,#ff1f67 543px,#ff1464 555px,#ff0461 567px,#ff0460 578px,#ff045f 590px,#ff045e 602px)"></div>
<div class="a" style="left:472px;top:378px;width:592px;height:2px;background:linear-gradient(90deg,#60dbff 0px,#7bdcff 12px,#8fdeff 24px,#a0dfff 36px,#afe0ff 47px,#bbe1ff 59px,#c7e3ff 71px,#d0e4ff 83px,#d9e5ff 95px,#e1e7ff 107px,#e8e8ff 118px,#ede9ff 130px,#f3eaff 142px,#f7eaff 154px,#fceaff 166px,#ffeafe 178px,#ffe5fa 189px,#ffe0f6 201px,#ffdbf1 213px,#ffd5ed 225px,#ffcfe7 237px,#ffc8e2 249px,#ffc0dc 260px,#ffb8d6 272px,#ffb0cf 284px,#ffa8c9 296px,#ff9fc2 308px,#ff96bb 320px,#ff8db4 332px,#ff84ae 343px,#ff7ba7 355px,#ff71a0 367px,#ff6899 379px,#ff5f93 391px,#ff5a8f 403px,#ff568c 414px,#ff5188 426px,#ff4d84 438px,#ff4881 450px,#ff437e 462px,#ff3f7a 474px,#ff3977 485px,#ff3474 497px,#ff2e71 509px,#ff286e 521px,#ff206b 533px,#ff1567 545px,#ff0465 556px,#ff0464 568px,#ff0463 580px,#ff0462 592px)"></div>
<div class="a" style="left:470px;top:380px;width:582px;height:2px;background:linear-gradient(90deg,#5ad8ff 0px,#76d9ff 12px,#8bdbff 24px,#9cdcff 36px,#abddff 48px,#b8deff 59px,#c4e0ff 71px,#cee1ff 83px,#d7e3ff 95px,#dfe4ff 107px,#e6e5ff 119px,#ece6ff 131px,#f1e7ff 143px,#f6e7ff 154px,#fbe8ff 166px,#ffe7ff 178px,#ffe3fb 190px,#ffdef6 202px,#ffd8f1 214px,#ffd2ed 226px,#ffcce7 238px,#ffc5e2 249px,#ffbddc 261px,#ffb6d6 273px,#ffadcf 285px,#ffa5c9 297px,#ff9cc2 309px,#ff94bb 321px,#ff8ab5 333px,#ff81ae 344px,#ff78a7 356px,#ff6ea1 368px,#ff649a 380px,#ff5c94 392px,#ff5790 404px,#ff538d 416px,#ff4e89 428px,#ff4986 439px,#ff4582 451px,#ff407f 463px,#ff3b7b 475px,#ff3578 487px,#ff2f75 499px,#ff2972 511px,#ff216f 523px,#ff176c 534px,#ff0469 546px,#ff0468 558px,#ff0467 570px,#ff0465 582px)"></div>
<div class="a" style="left:468px;top:382px;width:573px;height:2px;background:linear-gradient(90deg,#53d5ff 0px,#70d6ff 12px,#86d8ff 24px,#98d9ff 36px,#a8daff 48px,#b5dbff 60px,#c1ddff 72px,#cbdeff 84px,#d4e0ff 96px,#dce1ff 107px,#e4e2ff 119px,#eae3ff 131px,#f0e4ff 143px,#f5e4ff 155px,#fae5ff 167px,#ffe4ff 179px,#ffe0fb 191px,#ffdbf6 203px,#ffd5f1 215px,#ffcfec 227px,#ffc9e7 239px,#ffc2e1 251px,#ffbadc 263px,#ffb2d5 275px,#ffaacf 286px,#ffa2c9 298px,#ff99c2 310px,#ff90bb 322px,#ff87b5 334px,#ff7eae 346px,#ff74a7 358px,#ff6aa1 370px,#ff609a 382px,#ff5995 394px,#ff5491 406px,#ff4f8e 418px,#ff4b8a 430px,#ff4686 442px,#ff4183 454px,#ff3c80 466px,#ff367c 478px,#ff3079 489px,#ff2a76 501px,#ff2273 513px,#ff1770 525px,#ff046d 537px,#ff046b 549px,#ff046a 561px,#ff0469 573px)"></div>
<div class="a" style="left:467px;top:384px;width:563px;height:2px;background:linear-gradient(90deg,#4ed2ff 0px,#6dd3ff 12px,#84d5ff 24px,#96d6ff 36px,#a5d7ff 48px,#b3d8ff 60px,#bfdaff 72px,#c9dbff 84px,#d3ddff 96px,#dbdeff 108px,#e2dfff 120px,#e9e0ff 132px,#efe1ff 144px,#f4e1ff 156px,#f9e1ff 168px,#fee1ff 180px,#ffddfb 192px,#ffd8f6 204px,#ffd2f1 216px,#ffccec 228px,#ffc5e7 240px,#ffbee1 252px,#ffb7db 264px,#ffafd5 276px,#ffa7cf 287px,#ff9ec8 299px,#ff95c2 311px,#ff8cbb 323px,#ff83b4 335px,#ff7aae 347px,#ff70a7 359px,#ff66a1 371px,#ff5b9a 383px,#ff5596 395px,#ff5092 407px,#ff4c8e 419px,#ff478b 431px,#ff4287 443px,#ff3c84 455px,#ff3780 467px,#ff317d 479px,#ff2a7a 491px,#ff2277 503px,#ff1874 515px,#ff0471 527px,#ff046f 539px,#ff046e 551px,#ff046d 563px)"></div>
<div class="a" style="left:465px;top:386px;width:554px;height:2px;background:linear-gradient(90deg,#46cfff 0px,#67d0ff 12px,#7ed1ff 24px,#91d3ff 35px,#a1d4ff 47px,#aed5ff 59px,#bad7ff 71px,#c5d8ff 83px,#cfd9ff 94px,#d7daff 106px,#dfdcff 118px,#e6ddff 130px,#ecddff 141px,#f2deff 153px,#f7deff 165px,#fcdeff 177px,#ffdcfd 189px,#ffd7f8 200px,#ffd1f3 212px,#ffcbee 224px,#ffc5e9 236px,#ffbee3 248px,#ffb7de 259px,#ffafd8 271px,#ffa7d2 283px,#ff9fcb 295px,#ff97c5 306px,#ff8ebf 318px,#ff85b8 330px,#ff7cb2 342px,#ff72ab 354px,#ff68a5 365px,#ff5e9f 377px,#ff5599 389px,#ff5095 401px,#ff4c92 413px,#ff478e 424px,#ff428b 436px,#ff3c87 448px,#ff3784 460px,#ff3181 471px,#ff2a7d 483px,#ff227a 495px,#ff1877 507px,#ff0474 519px,#ff0473 530px,#ff0471 542px,#ff0470 554px)"></div>
<div class="a" style="left:464px;top:388px;width:543px;height:2px;background:linear-gradient(90deg,#40ccff 0px,#63cdff 12px,#7bceff 24px,#8ecfff 35px,#9ed1ff 47px,#acd2ff 59px,#b8d3ff 71px,#c3d5ff 83px,#cdd6ff 94px,#d5d7ff 106px,#ddd8ff 118px,#e4d9ff 130px,#ebdaff 142px,#f1daff 153px,#f6dbff 165px,#fcdbff 177px,#ffd9fd 189px,#ffd3f8 201px,#ffcef3 212px,#ffc8ee 224px,#ffc1e8 236px,#ffbae3 248px,#ffb3dd 260px,#ffacd7 272px,#ffa4d1 283px,#ff9bcb 295px,#ff93c5 307px,#ff8abf 319px,#ff81b8 331px,#ff78b2 342px,#ff6eac 354px,#ff64a5 366px,#ff599f 378px,#ff529a 390px,#ff4d96 401px,#ff4893 413px,#ff438f 425px,#ff3e8c 437px,#ff3888 449px,#ff3285 460px,#ff2b82 472px,#ff247e 484px,#ff1a7b 496px,#ff0478 508px,#ff0477 519px,#ff0475 531px,#ff0474 543px)"></div>
<div class="a" style="left:462px;top:390px;width:534px;height:2px;background:linear-gradient(90deg,#36c9ff 0px,#5dcaff 12px,#76cbff 24px,#8accff 36px,#9acdff 47px,#a9cfff 59px,#b5d0ff 71px,#c0d1ff 83px,#cad2ff 95px,#d3d4ff 107px,#dbd5ff 119px,#e2d6ff 131px,#e9d6ff 142px,#efd7ff 154px,#f5d7ff 166px,#fbd7ff 178px,#ffd5fe 190px,#ffd0f8 202px,#ffcaf3 214px,#ffc4ee 225px,#ffbee8 237px,#ffb7e3 249px,#ffafdd 261px,#ffa8d7 273px,#ffa0d1 285px,#ff97cb 297px,#ff8fc5 309px,#ff86be 320px,#ff7db8 332px,#ff73b2 344px,#ff69ac 356px,#ff5fa5 368px,#ff549f 380px,#ff4e9b 392px,#ff4997 403px,#ff4493 415px,#ff3f90 427px,#ff398c 439px,#ff3389 451px,#ff2c86 463px,#ff2482 475px,#ff1a7f 487px,#ff057c 498px,#ff047a 510px,#ff0479 522px,#ff0477 534px)"></div>
<div class="a" style="left:460px;top:392px;width:525px;height:2px;background:linear-gradient(90deg,#28c5ff 0px,#57c6ff 12px,#71c7ff 24px,#86c9ff 36px,#97caff 48px,#a5cbff 60px,#b2ccff 72px,#bdceff 84px,#c8cfff 95px,#d1d0ff 107px,#d9d1ff 119px,#e1d2ff 131px,#e8d3ff 143px,#eed3ff 155px,#f4d3ff 167px,#fad3ff 179px,#ffd2fe 191px,#ffccf9 203px,#ffc7f3 215px,#ffc0ee 227px,#ffbae8 239px,#ffb3e3 251px,#ffabdd 262px,#ffa4d7 274px,#ff9cd1 286px,#ff93cb 298px,#ff8bc5 310px,#ff82be 322px,#ff78b8 334px,#ff6fb2 346px,#ff65ac 358px,#ff5aa5 370px,#ff50a0 382px,#ff4a9c 394px,#ff4598 406px,#ff4094 418px,#ff3a91 430px,#ff348d 441px,#ff2d8a 453px,#ff2586 465px,#ff1b83 477px,#ff0780 489px,#ff047e 501px,#ff047c 513px,#ff047b 525px)"></div>
<div class="a" style="left:459px;top:394px;width:514px;height:2px;background:linear-gradient(90deg,#1dc2ff 0px,#52c3ff 12px,#6ec4ff 24px,#83c5ff 36px,#94c6ff 48px,#a3c8ff 60px,#b0c9ff 72px,#bbcaff 84px,#c6cbff 96px,#cfccff 108px,#d7cdff 120px,#dfceff 131px,#e6cfff 143px,#edcfff 155px,#f3cfff 167px,#f9cfff 179px,#ffceff 191px,#ffc9f9 203px,#ffc3f3 215px,#ffbcee 227px,#ffb6e8 239px,#ffafe2 251px,#ffa7dd 263px,#ffa0d7 275px,#ff98d1 287px,#ff8fcb 299px,#ff86c4 311px,#ff7dbe 323px,#ff74b8 335px,#ff6ab2 347px,#ff60ac 359px,#ff54a6 371px,#ff4ca0 383px,#ff469d 394px,#ff4199 406px,#ff3b95 418px,#ff3591 430px,#ff2e8e 442px,#ff268b 454px,#ff1d87 466px,#ff0c84 478px,#ff0482 490px,#ff0480 502px,#ff047e 514px)"></div>
<div class="a" style="left:457px;top:396px;width:505px;height:2px;background:linear-gradient(90deg,#00bfff 0px,#4abfff 12px,#68c0ff 23px,#7dc2ff 35px,#8fc3ff 47px,#9ec4ff 59px,#abc5ff 70px,#b7c6ff 82px,#c1c7ff 94px,#cbc8ff 106px,#d4c9ff 117px,#dccaff 129px,#e3cbff 141px,#eacbff 153px,#f0cbff 164px,#f6cbff 176px,#fccbff 188px,#ffc7fc 200px,#ffc1f6 211px,#ffbbf0 223px,#ffb5eb 235px,#ffaee5 247px,#ffa7df 258px,#ff9fda 270px,#ff98d4 282px,#ff90ce 294px,#ff87c8 305px,#ff7ec2 317px,#ff75bc 329px,#ff6cb6 341px,#ff62b0 352px,#ff57aa 364px,#ff4ca4 376px,#ff46a0 388px,#ff419c 399px,#ff3b99 411px,#ff3595 423px,#ff2e92 435px,#ff268e 446px,#ff1c8b 458px,#ff0b88 470px,#ff0486 482px,#ff0484 493px,#ff0482 505px)"></div>
<div class="a" style="left:455px;top:398px;width:496px;height:2px;background:linear-gradient(90deg,#00bdff 0px,#42bcff 12px,#62bdff 24px,#79beff 35px,#8bbfff 47px,#9ac0ff 59px,#a8c1ff 71px,#b4c2ff 83px,#bfc3ff 94px,#c9c4ff 106px,#d1c5ff 118px,#dac6ff 130px,#e1c7ff 142px,#e8c7ff 154px,#efc7ff 165px,#f5c7ff 177px,#fcc6ff 189px,#ffc3fc 201px,#ffbdf6 213px,#ffb7f0 224px,#ffb0eb 236px,#ffaae5 248px,#ffa3df 260px,#ff9bd9 272px,#ff93d3 283px,#ff8bce 295px,#ff82c8 307px,#ff7ac2 319px,#ff70bc 331px,#ff66b6 342px,#ff5cb0 354px,#ff50aa 366px,#ff48a5 378px,#ff42a1 390px,#ff3c9d 402px,#ff3699 413px,#ff2f96 425px,#ff2792 437px,#ff1d8f 449px,#ff0d8c 461px,#ff0489 472px,#ff0487 484px,#ff0486 496px)"></div>
<div class="a" style="left:454px;top:400px;width:486px;height:2px;background:linear-gradient(90deg,#00baff 0px,#3cb8ff 12px,#5fb9ff 24px,#76baff 36px,#88bbff 47px,#98bcff 59px,#a6bdff 71px,#b2beff 83px,#bdbfff 95px,#c7c0ff 107px,#d0c1ff 119px,#d8c2ff 130px,#e0c2ff 142px,#e7c3ff 154px,#eec3ff 166px,#f5c2ff 178px,#fbc2ff 190px,#ffbffc 202px,#ffb9f6 213px,#ffb2f0 225px,#ffacea 237px,#ffa5e5 249px,#ff9edf 261px,#ff96d9 273px,#ff8ed3 284px,#ff86cd 296px,#ff7dc7 308px,#ff74c1 320px,#ff6abb 332px,#ff60b5 344px,#ff55af 356px,#ff49a9 367px,#ff43a5 379px,#ff3da1 391px,#ff379e 403px,#ff309a 415px,#ff2896 427px,#ff1e93 439px,#ff0e8f 450px,#ff048d 462px,#ff048b 474px,#ff0489 486px)"></div>
<div class="a" style="left:452px;top:402px;width:476px;height:2px;background:linear-gradient(90deg,#00b8ff 0px,#3ab6ff 12px,#59b5ff 24px,#71b6ff 36px,#84b7ff 48px,#95b8ff 60px,#a3b9ff 71px,#afbaff 83px,#babbff 95px,#c4bcff 107px,#cebdff 119px,#d6beff 131px,#debeff 143px,#e6beff 155px,#edbeff 167px,#f4beff 178px,#fabdff 190px,#ffbbfd 202px,#ffb4f7 214px,#ffaef1 226px,#ffa7eb 238px,#ffa0e5 250px,#ff99df 262px,#ff91d9 274px,#ff89d3 286px,#ff81cd 298px,#ff78c7 309px,#ff6fc1 321px,#ff65bb 333px,#ff5bb5 345px,#ff4fb0 357px,#ff45aa 369px,#ff3fa6 381px,#ff38a2 393px,#ff319f 405px,#ff299b 416px,#ff2097 428px,#ff1194 440px,#ff0491 452px,#ff048f 464px,#ff048d 476px)"></div>
<div class="a" style="left:450px;top:404px;width:467px;height:2px;background:linear-gradient(90deg,#00b5ff 0px,#39b3ff 12px,#54b2ff 24px,#6db2ff 36px,#81b3ff 48px,#91b4ff 60px,#a0b5ff 72px,#acb6ff 84px,#b8b7ff 96px,#c2b8ff 108px,#ccb9ff 120px,#d5b9ff 132px,#ddbaff 144px,#e4baff 156px,#ecbaff 168px,#f3b9ff 180px,#fab8ff 192px,#ffb6fe 204px,#ffb0f7 216px,#ffa9f1 228px,#ffa2eb 239px,#ff9be5 251px,#ff94df 263px,#ff8cd9 275px,#ff84d3 287px,#ff7ccd 299px,#ff73c7 311px,#ff69c1 323px,#ff5fbb 335px,#ff54b5 347px,#ff47af 359px,#ff40ab 371px,#ff39a7 383px,#ff32a3 395px,#ff2a9f 407px,#ff219b 419px,#ff1298 431px,#ff0495 443px,#ff0493 455px,#ff0491 467px)"></div>
<div class="a" style="left:449px;top:406px;width:457px;height:2px;background:linear-gradient(90deg,#00b3ff 0px,#3ab1ff 12px,#54afff 23px,#68aeff 35px,#7cafff 47px,#8db0ff 59px,#9bb1ff 70px,#a8b2ff 82px,#b4b3ff 94px,#beb3ff 105px,#c8b4ff 117px,#d1b4ff 129px,#d9b5ff 141px,#e1b5ff 152px,#e8b5ff 164px,#f0b4ff 176px,#f6b4ff 187px,#fdb2ff 199px,#ffaefa 211px,#ffa7f4 223px,#ffa1ee 234px,#ff9ae8 246px,#ff93e2 258px,#ff8bdc 270px,#ff83d6 281px,#ff7bd0 293px,#ff72ca 305px,#ff69c5 316px,#ff5fbf 328px,#ff55b9 340px,#ff48b3 352px,#ff40af 363px,#ff39ab 375px,#ff32a7 387px,#ff2aa3 398px,#ff209f 410px,#ff119c 422px,#ff0499 434px,#ff0496 445px,#ff0494 457px)"></div>
<div class="a" style="left:447px;top:408px;width:447px;height:2px;background:linear-gradient(90deg,#00b0ff 0px,#39aeff 12px,#53adff 24px,#66abff 35px,#78abff 47px,#89acff 59px,#98adff 71px,#a5adff 82px,#b1aeff 94px,#bcafff 106px,#c6afff 118px,#cfb0ff 129px,#d7b0ff 141px,#dfb0ff 153px,#e7b0ff 165px,#eeafff 176px,#f5aeff 188px,#fcadff 200px,#ffa9fb 212px,#ffa2f4 224px,#ff9cee 235px,#ff95e8 247px,#ff8ee2 259px,#ff86dc 271px,#ff7ed6 282px,#ff76d0 294px,#ff6dcb 306px,#ff63c5 318px,#ff59bf 329px,#ff4eb9 341px,#ff41b4 353px,#ff3bb0 365px,#ff33ab 376px,#ff2ca8 388px,#ff22a4 400px,#ff14a0 412px,#ff049d 423px,#ff049a 435px,#ff0498 447px)"></div>
<div class="a" style="left:445px;top:410px;width:438px;height:2px;background:linear-gradient(90deg,#00aeff 0px,#38acff 12px,#52aaff 24px,#65a9ff 36px,#75a7ff 47px,#86a7ff 59px,#95a8ff 71px,#a3a9ff 83px,#afaaff 95px,#baaaff 107px,#c4abff 118px,#cdabff 130px,#d6abff 142px,#deabff 154px,#e6abff 166px,#edaaff 178px,#f5a9ff 189px,#fca8ff 201px,#ffa4fb 213px,#ff9df5 225px,#ff96ee 237px,#ff8fe8 249px,#ff88e2 260px,#ff80dc 272px,#ff78d6 284px,#ff6fd0 296px,#ff66ca 308px,#ff5cc5 320px,#ff51bf 331px,#ff45b9 343px,#ff3cb4 355px,#ff35b0 367px,#ff2dac 379px,#ff23a8 391px,#ff15a4 402px,#ff04a1 414px,#ff049e 426px,#ff049c 438px)"></div>
<div class="a" style="left:444px;top:412px;width:428px;height:2px;background:linear-gradient(90deg,#00abff 0px,#39a9ff 12px,#53a8ff 24px,#66a6ff 36px,#76a5ff 48px,#84a3ff 59px,#93a4ff 71px,#a1a4ff 83px,#ada5ff 95px,#b8a5ff 107px,#c2a6ff 119px,#cca6ff 131px,#d5a6ff 143px,#dda6ff 155px,#e5a5ff 166px,#eda5ff 178px,#f4a3ff 190px,#fba2ff 202px,#ff9efc 214px,#ff97f5 226px,#ff90ee 238px,#ff89e8 250px,#ff81e2 262px,#ff7adc 273px,#ff71d6 285px,#ff68d0 297px,#ff5fca 309px,#ff54c4 321px,#ff48be 333px,#ff3db9 345px,#ff36b5 357px,#ff2db0 369px,#ff24ac 380px,#ff16a8 392px,#ff04a5 404px,#ff04a2 416px,#ff04a0 428px)"></div>
<div class="a" style="left:442px;top:414px;width:419px;height:2px;background:linear-gradient(90deg,#00a9ff 0px,#38a7ff 12px,#52a5ff 24px,#65a3ff 36px,#75a2ff 48px,#83a0ff 60px,#909fff 72px,#9ea0ff 84px,#aba0ff 96px,#b6a0ff 108px,#c1a1ff 120px,#caa1ff 132px,#d3a1ff 144px,#dca0ff 156px,#e4a0ff 168px,#ec9fff 180px,#f39eff 192px,#fb9cff 204px,#ff98fc 215px,#ff91f5 227px,#ff8aee 239px,#ff83e8 251px,#ff7be2 263px,#ff73db 275px,#ff6ad5 287px,#ff61cf 299px,#ff56ca 311px,#ff4bc4 323px,#ff3ebe 335px,#ff37ba 347px,#ff2eb5 359px,#ff25b1 371px,#ff17ad 383px,#ff04a9 395px,#ff04a6 407px,#ff04a4 419px)"></div>
<div class="a" style="left:441px;top:416px;width:408px;height:2px;background:linear-gradient(90deg,#00a6ff 0px,#39a4ff 12px,#52a2ff 23px,#64a1ff 35px,#749fff 47px,#819eff 58px,#8e9cff 70px,#9a9bff 82px,#a69bff 93px,#b29bff 105px,#bc9bff 117px,#c69cff 128px,#cf9bff 140px,#d79bff 152px,#e09aff 163px,#e89aff 175px,#ef98ff 187px,#f797ff 198px,#fe95ff 210px,#ff8ff9 221px,#ff88f2 233px,#ff81ec 245px,#ff79e6 256px,#ff71df 268px,#ff69d9 280px,#ff60d4 291px,#ff56ce 303px,#ff4bc8 315px,#ff3ec3 326px,#ff37be 338px,#ff2fba 350px,#ff25b5 361px,#ff18b1 373px,#ff04ae 385px,#ff04ab 396px,#ff04a8 408px)"></div>
<div class="a" style="left:439px;top:418px;width:399px;height:2px;background:linear-gradient(90deg,#00a4ff 0px,#38a1ff 12px,#51a0ff 23px,#649eff 35px,#739dff 47px,#819bff 59px,#8d99ff 70px,#9997ff 82px,#a496ff 94px,#b096ff 106px,#ba96ff 117px,#c496ff 129px,#cd96ff 141px,#d695ff 153px,#de95ff 164px,#e693ff 176px,#ee92ff 188px,#f690ff 200px,#fd8eff 211px,#ff88f9 223px,#ff81f3 235px,#ff7aec 246px,#ff72e6 258px,#ff6adf 270px,#ff61d9 282px,#ff58d3 293px,#ff4dce 305px,#ff40c8 317px,#ff38c3 329px,#ff30be 340px,#ff26ba 352px,#ff19b6 364px,#ff04b2 376px,#ff04af 387px,#ff04ac 399px)"></div>
<div class="a" style="left:437px;top:420px;width:390px;height:2px;background:linear-gradient(90deg,#00a2ff 0px,#379fff 12px,#519dff 24px,#639cff 35px,#739aff 47px,#8098ff 59px,#8d96ff 71px,#9894ff 83px,#a392ff 95px,#ad91ff 106px,#b891ff 118px,#c290ff 130px,#cc90ff 142px,#d58fff 154px,#dd8eff 165px,#e58dff 177px,#ed8cff 189px,#f58aff 201px,#fd87ff 213px,#ff81fa 225px,#ff7af3 236px,#ff72ec 248px,#ff6ae6 260px,#ff62df 272px,#ff58d9 284px,#ff4ed3 295px,#ff42cd 307px,#ff39c8 319px,#ff31c3 331px,#ff27bf 343px,#ff1aba 355px,#ff04b6 366px,#ff04b3 378px,#ff04b0 390px)"></div>
<div class="a" style="left:436px;top:422px;width:380px;height:2px;background:linear-gradient(90deg,#009fff 0px,#399cff 12px,#529bff 24px,#6499ff 36px,#7397ff 48px,#8195ff 59px,#8d93ff 71px,#9891ff 83px,#a38fff 95px,#ad8dff 107px,#b78bff 119px,#c18aff 131px,#cb8aff 142px,#d489ff 154px,#dd88ff 166px,#e586ff 178px,#ed85ff 190px,#f582ff 202px,#fd7fff 214px,#ff79fa 226px,#ff72f3 238px,#ff6aec 249px,#ff62e5 261px,#ff58df 273px,#ff4ed9 285px,#ff42d3 297px,#ff3bce 309px,#ff32c9 321px,#ff28c4 332px,#ff1bbf 344px,#ff04bb 356px,#ff04b7 368px,#ff04b4 380px)"></div>
<div class="a" style="left:434px;top:424px;width:370px;height:2px;background:linear-gradient(90deg,#009dff 0px,#389aff 12px,#5198ff 24px,#6396ff 36px,#7395ff 48px,#8093ff 60px,#8c91ff 72px,#988fff 84px,#a38cff 95px,#ad8aff 107px,#b688ff 119px,#c085ff 131px,#c984ff 143px,#d283ff 155px,#db81ff 167px,#e480ff 179px,#ec7dff 191px,#f47bff 203px,#fc78ff 215px,#ff72fb 227px,#ff6af3 239px,#ff62ec 251px,#ff59e6 263px,#ff4fdf 275px,#ff45d9 286px,#ff3dd4 298px,#ff34ce 310px,#ff2ac9 322px,#ff1dc4 334px,#ff04c0 346px,#ff04bc 358px,#ff04b9 370px)"></div>
<div class="a" style="left:432px;top:426px;width:361px;height:2px;background:linear-gradient(90deg,#009bff 0px,#3697ff 12px,#4f96ff 23px,#6194ff 35px,#7092ff 47px,#7e90ff 58px,#8a8eff 70px,#958cff 82px,#a08aff 93px,#a988ff 105px,#b385ff 116px,#bc83ff 128px,#c580ff 140px,#ce7dff 151px,#d67bff 163px,#df79ff 175px,#e777ff 186px,#ef74ff 198px,#f771ff 210px,#fe6dff 221px,#ff66f8 233px,#ff5ef1 245px,#ff55ea 256px,#ff4ce4 268px,#ff44de 279px,#ff3cd8 291px,#ff34d3 303px,#ff2ace 314px,#ff1dc9 326px,#ff04c4 338px,#ff04c1 349px,#ff04bd 361px)"></div>
<div class="a" style="left:431px;top:428px;width:351px;height:2px;background:linear-gradient(90deg,#0098ff 0px,#3795ff 12px,#5093ff 23px,#6291ff 35px,#718fff 47px,#7e8dff 58px,#8a8bff 70px,#9589ff 82px,#a087ff 94px,#aa84ff 105px,#b382ff 117px,#bc7fff 129px,#c57cff 140px,#ce7aff 152px,#d676ff 164px,#de73ff 176px,#e770ff 187px,#ef6cff 199px,#f668ff 211px,#fe64ff 222px,#ff5df8 234px,#ff55f1 246px,#ff4eea 257px,#ff46e4 269px,#ff3ede 281px,#ff35d9 292px,#ff2bd3 304px,#ff1ece 316px,#ff04c9 328px,#ff04c5 339px,#ff04c2 351px)"></div>
<div class="a" style="left:429px;top:430px;width:341px;height:2px;background:linear-gradient(90deg,#0095ff 0px,#3692ff 12px,#4f91ff 24px,#618fff 35px,#708dff 47px,#7e8bff 59px,#8a88ff 71px,#9586ff 82px,#9f84ff 94px,#a981ff 106px,#b37fff 118px,#bc7cff 129px,#c579ff 141px,#cd76ff 153px,#d673ff 165px,#de6fff 176px,#e66cff 188px,#ee68ff 200px,#f664ff 212px,#fe5fff 223px,#ff58f9 235px,#ff50f2 247px,#ff48eb 259px,#ff40e5 270px,#ff37df 282px,#ff2dd9 294px,#ff20d4 306px,#ff06cf 317px,#ff04ca 329px,#ff04c6 341px)"></div>
<div class="a" style="left:427px;top:432px;width:332px;height:2px;background:linear-gradient(90deg,#0093ff 0px,#3590ff 12px,#4e8eff 24px,#618cff 36px,#708aff 47px,#7d88ff 59px,#8985ff 71px,#9483ff 83px,#9f81ff 95px,#a97eff 107px,#b27bff 119px,#bb78ff 130px,#c475ff 142px,#cd72ff 154px,#d56fff 166px,#de6bff 178px,#e667ff 190px,#ee63ff 202px,#f55fff 213px,#fd5aff 225px,#ff52f9 237px,#ff4af2 249px,#ff42eb 261px,#ff39e5 273px,#ff2edf 285px,#ff22d9 296px,#ff09d4 308px,#ff04cf 320px,#ff04cb 332px)"></div>
<div class="a" style="left:426px;top:434px;width:322px;height:2px;background:linear-gradient(90deg,#0090ff 0px,#378dff 12px,#4f8bff 24px,#6189ff 36px,#7087ff 48px,#7e85ff 60px,#8a82ff 72px,#9580ff 83px,#9f7dff 95px,#a97bff 107px,#b378ff 119px,#bc75ff 131px,#c472ff 143px,#cd6eff 155px,#d56bff 167px,#de67ff 179px,#e663ff 191px,#ee5eff 203px,#f659ff 215px,#fd54ff 227px,#ff4cf9 239px,#ff43f2 250px,#ff3aeb 262px,#ff30e5 274px,#ff23df 286px,#ff0cda 298px,#ff04d5 310px,#ff04d0 322px)"></div>
<div class="a" style="left:424px;top:436px;width:313px;height:2px;background:linear-gradient(90deg,#008eff 0px,#358bff 12px,#4d89ff 23px,#5f87ff 35px,#6e85ff 46px,#7b82ff 58px,#8780ff 70px,#927eff 81px,#9c7bff 93px,#a678ff 104px,#af75ff 116px,#b872ff 128px,#c06fff 139px,#c96cff 151px,#d168ff 162px,#d965ff 174px,#e160ff 185px,#e95cff 197px,#f057ff 209px,#f852ff 220px,#ff4cff 232px,#ff43f8 243px,#ff3af1 255px,#ff2fea 267px,#ff22e4 278px,#ff0adf 290px,#ff04da 301px,#ff04d5 313px)"></div>
<div class="a" style="left:422px;top:438px;width:303px;height:2px;background:linear-gradient(90deg,#008cff 0px,#3488ff 12px,#4d86ff 23px,#5f84ff 35px,#6d82ff 47px,#7b7fff 58px,#867dff 70px,#917bff 82px,#9b78ff 93px,#a575ff 105px,#ae72ff 117px,#b76fff 128px,#c06cff 140px,#c868ff 152px,#d064ff 163px,#d860ff 175px,#e05cff 186px,#e857ff 198px,#f052ff 210px,#f74cff 221px,#ff45ff 233px,#ff3cf8 245px,#ff32f1 256px,#ff25eb 268px,#ff10e5 280px,#ff04e0 291px,#ff04db 303px)"></div>
<div class="a" style="left:421px;top:440px;width:293px;height:2px;background:linear-gradient(90deg,#0089ff 0px,#3685ff 12px,#4e83ff 23px,#5f81ff 35px,#6e7fff 47px,#7b7cff 59px,#877aff 70px,#9277ff 82px,#9c74ff 94px,#a572ff 105px,#af6eff 117px,#b86bff 129px,#c068ff 141px,#c864ff 152px,#d160ff 164px,#d95bff 176px,#e057ff 188px,#e852ff 199px,#f04cff 211px,#f745ff 223px,#ff3eff 234px,#ff33f8 246px,#ff26f1 258px,#ff12eb 270px,#ff04e5 281px,#ff04e0 293px)"></div>
<div class="a" style="left:419px;top:442px;width:284px;height:2px;background:linear-gradient(90deg,#0087ff 0px,#3583ff 12px,#4d81ff 24px,#5f7eff 36px,#6e7cff 47px,#7b79ff 59px,#8777ff 71px,#9174ff 83px,#9c71ff 95px,#a56eff 106px,#af6bff 118px,#b767ff 130px,#c064ff 142px,#c860ff 154px,#d15bff 166px,#d857ff 178px,#e051ff 189px,#e84cff 201px,#f045ff 213px,#f73eff 225px,#ff35ff 237px,#ff28f8 248px,#ff13f1 260px,#ff04eb 272px,#ff04e6 284px)"></div>
<div class="a" style="left:418px;top:444px;width:273px;height:2px;background:linear-gradient(90deg,#0084ff 0px,#3680ff 12px,#4e7eff 24px,#607bff 36px,#6e79ff 47px,#7b76ff 59px,#8774ff 71px,#9271ff 83px,#9c6eff 95px,#a56aff 107px,#af67ff 119px,#b763ff 131px,#c05fff 142px,#c85bff 154px,#d056ff 166px,#d851ff 178px,#e04cff 190px,#e845ff 202px,#ef3eff 214px,#f735ff 226px,#fe2aff 237px,#ff17f9 249px,#ff04f2 261px,#ff04ec 273px)"></div>
<div class="a" style="left:416px;top:446px;width:264px;height:2px;background:linear-gradient(90deg,#0081ff 0px,#347eff 11px,#4c7bff 23px,#5d79ff 34px,#6c76ff 46px,#7874ff 57px,#8471ff 69px,#8e6eff 80px,#986bff 92px,#a268ff 103px,#ab65ff 115px,#b361ff 126px,#bc5dff 138px,#c459ff 149px,#cc54ff 161px,#d34fff 172px,#db4aff 184px,#e244ff 195px,#ea3cff 207px,#f134ff 218px,#f829ff 230px,#ff16ff 241px,#ff04f8 253px,#ff04f2 264px)"></div>
<div class="a" style="left:414px;top:448px;width:255px;height:2px;background:linear-gradient(90deg,#007fff 0px,#337bff 12px,#4b79ff 23px,#5d76ff 35px,#6b74ff 46px,#7871ff 58px,#846eff 70px,#8e6bff 81px,#9868ff 93px,#a164ff 104px,#aa61ff 116px,#b35dff 128px,#bb59ff 139px,#c454ff 151px,#cc4fff 162px,#d34aff 174px,#db44ff 185px,#e23cff 197px,#ea34ff 209px,#f129ff 220px,#f817ff 232px,#ff04ff 243px,#ff04f8 255px)"></div>
<div class="a" style="left:413px;top:450px;width:245px;height:2px;background:linear-gradient(90deg,#007cff 0px,#3578ff 12px,#4c76ff 23px,#5e73ff 35px,#6c70ff 47px,#796eff 58px,#846bff 70px,#8f67ff 82px,#9864ff 93px,#a260ff 105px,#ab5dff 117px,#b358ff 128px,#bc54ff 140px,#c44fff 152px,#cc4aff 163px,#d443ff 175px,#db3cff 187px,#e334ff 198px,#ea29ff 210px,#f118ff 222px,#f804ff 233px,#ff04ff 245px)"></div>
<div class="a" style="left:411px;top:452px;width:235px;height:2px;background:linear-gradient(90deg,#007aff 0px,#3475ff 12px,#4c73ff 24px,#5d70ff 35px,#6c6dff 47px,#786aff 59px,#8467ff 70px,#8e64ff 82px,#9860ff 94px,#a25dff 106px,#ab59ff 118px,#b354ff 129px,#bb4fff 141px,#c44aff 153px,#cb44ff 164px,#d33dff 176px,#db35ff 188px,#e22aff 200px,#ea1bff 212px,#f104ff 223px,#f804ff 235px)"></div>
<div class="a" style="left:409px;top:454px;width:226px;height:2px;background:linear-gradient(90deg,#0077ff 0px,#3373ff 12px,#4b70ff 24px,#5d6dff 36px,#6b6aff 48px,#7867ff 59px,#8464ff 71px,#8e60ff 83px,#985dff 95px,#a258ff 107px,#ab54ff 119px,#b34fff 131px,#bc4aff 143px,#c444ff 155px,#cc3dff 167px,#d335ff 178px,#db2bff 190px,#e31cff 202px,#ea04ff 214px,#f104ff 226px)"></div>
<div class="a" style="left:408px;top:456px;width:216px;height:2px;background:linear-gradient(90deg,#0074ff 0px,#3370ff 11px,#4a6dff 23px,#5b6aff 34px,#6968ff 45px,#7664ff 57px,#8161ff 68px,#8b5eff 80px,#955aff 91px,#9e56ff 102px,#a752ff 114px,#af4dff 125px,#b748ff 136px,#bf42ff 148px,#c63bff 159px,#ce33ff 171px,#d529ff 182px,#dc1aff 193px,#e403ff 205px,#eb04ff 216px)"></div>
<div class="a" style="left:406px;top:458px;width:207px;height:2px;background:linear-gradient(90deg,#0072ff 0px,#336dff 12px,#4a6aff 23px,#5b67ff 34px,#6964ff 46px,#7661ff 58px,#815eff 69px,#8b5aff 80px,#9556ff 92px,#9e52ff 104px,#a74dff 115px,#af48ff 126px,#b742ff 138px,#bf3bff 150px,#c733ff 161px,#ce2aff 172px,#d51bff 184px,#dd03ff 196px,#e403ff 207px)"></div>
<div class="a" style="left:404px;top:460px;width:197px;height:2px;background:linear-gradient(90deg,#006fff 0px,#326aff 12px,#4967ff 23px,#5b64ff 35px,#6961ff 46px,#755eff 58px,#805aff 70px,#8b56ff 81px,#9452ff 93px,#9e4dff 104px,#a648ff 116px,#af42ff 127px,#b73cff 139px,#bf34ff 151px,#c62bff 162px,#ce1dff 174px,#d503ff 185px,#dd03ff 197px)"></div>
<div class="a" style="left:403px;top:462px;width:187px;height:2px;background:linear-gradient(90deg,#006cff 0px,#3367ff 12px,#4b64ff 23px,#5b61ff 35px,#6a5dff 47px,#765aff 58px,#8156ff 70px,#8b52ff 82px,#954dff 94px,#9e48ff 105px,#a742ff 117px,#af3cff 129px,#b734ff 140px,#bf2bff 152px,#c71eff 164px,#cf03ff 175px,#d603ff 187px)"></div>
<div class="a" style="left:401px;top:464px;width:178px;height:2px;background:linear-gradient(90deg,#0069ff 0px,#3364ff 12px,#4a61ff 24px,#5b5dff 36px,#6a5aff 47px,#7656ff 59px,#8152ff 71px,#8c4dff 83px,#9548ff 95px,#9f43ff 107px,#a73cff 119px,#b035ff 131px,#b82bff 142px,#c01eff 154px,#c803ff 166px,#d003ff 178px)"></div>
<div class="a" style="left:399px;top:466px;width:168px;height:2px;background:linear-gradient(90deg,#0067ff 0px,#3061ff 11px,#475eff 22px,#585bff 34px,#6657ff 45px,#7254ff 56px,#7d4fff 67px,#874bff 78px,#9046ff 90px,#9941ff 101px,#a23bff 112px,#aa33ff 123px,#b22aff 134px,#b91eff 146px,#c103ff 157px,#c903ff 168px)"></div>
<div class="a" style="left:398px;top:468px;width:158px;height:2px;background:linear-gradient(90deg,#0063ff 0px,#325eff 11px,#485bff 23px,#5957ff 34px,#6753ff 45px,#734fff 56px,#7d4bff 68px,#8746ff 79px,#9141ff 90px,#9a3bff 102px,#a233ff 113px,#aa2bff 124px,#b21eff 135px,#ba03ff 147px,#c203ff 158px)"></div>
<div class="a" style="left:396px;top:470px;width:149px;height:2px;background:linear-gradient(90deg,#0061ff 0px,#315bff 11px,#4857ff 23px,#5953ff 34px,#674fff 46px,#734bff 57px,#7e46ff 69px,#8841ff 80px,#913bff 92px,#9a34ff 103px,#a32bff 115px,#ab1fff 126px,#b303ff 138px,#bb03ff 149px)"></div>
<div class="a" style="left:394px;top:472px;width:140px;height:2px;background:linear-gradient(90deg,#005eff 0px,#3057ff 12px,#4854ff 23px,#5950ff 35px,#674bff 47px,#7347ff 58px,#7e41ff 70px,#883bff 82px,#9234ff 93px,#9b2bff 105px,#a320ff 117px,#ab03ff 128px,#b403ff 140px)"></div>
<div class="a" style="left:393px;top:474px;width:129px;height:2px;background:linear-gradient(90deg,#005aff 0px,#3254ff 12px,#4950ff 23px,#5a4bff 35px,#6747ff 47px,#7342ff 59px,#7e3cff 70px,#8835ff 82px,#922cff 94px,#9b21ff 106px,#a30bff 117px,#ad03ff 129px)"></div>
<div class="a" style="left:391px;top:476px;width:120px;height:2px;background:linear-gradient(90deg,#0057ff 0px,#2f51ff 11px,#454dff 22px,#5649ff 33px,#6344ff 44px,#6f3fff 55px,#7939ff 65px,#8332ff 76px,#8c2aff 87px,#951fff 98px,#9d09ff 109px,#a603ff 120px)"></div>
<div class="a" style="left:390px;top:478px;width:110px;height:2px;background:linear-gradient(90deg,#0053ff 0px,#314dff 11px,#4648ff 22px,#5644ff 33px,#643fff 44px,#6f39ff 55px,#7a33ff 66px,#842bff 77px,#8d20ff 88px,#950bff 99px,#9e02ff 110px)"></div>
<div class="a" style="left:388px;top:480px;width:100px;height:2px;background:linear-gradient(90deg,#0050ff 0px,#3049ff 11px,#4644ff 22px,#563fff 33px,#633aff 44px,#6f33ff 56px,#7a2cff 67px,#8321ff 78px,#8d10ff 89px,#9602ff 100px)"></div>
<div class="a" style="left:386px;top:482px;width:91px;height:2px;background:linear-gradient(90deg,#004dff 0px,#2f45ff 11px,#4640ff 23px,#563aff 34px,#6434ff 46px,#702cff 57px,#7a22ff 68px,#8411ff 80px,#8f02ff 91px)"></div>
<div class="a" style="left:385px;top:484px;width:81px;height:2px;background:linear-gradient(90deg,#0048ff 0px,#3140ff 12px,#473bff 23px,#5834ff 35px,#652cff 46px,#7123ff 58px,#7c12ff 69px,#8702ff 81px)"></div>
<div class="a" style="left:383px;top:486px;width:72px;height:2px;background:linear-gradient(90deg,#0045ff 0px,#2d3cff 10px,#4237ff 21px,#5231ff 31px,#5f29ff 41px,#6a20ff 51px,#740fff 62px,#7e02ff 72px)"></div>
<div class="a" style="left:381px;top:488px;width:62px;height:2px;background:linear-gradient(90deg,#0042ff 0px,#2c37ff 10px,#4231ff 21px,#512aff 31px,#5e21ff 41px,#6913ff 52px,#7502ff 62px)"></div>
<div class="a" style="left:380px;top:490px;width:52px;height:2px;background:linear-gradient(90deg,#003cff 0px,#2e32ff 10px,#432aff 21px,#5221ff 31px,#5f13ff 42px,#6b02ff 52px)"></div>
<div class="a" style="left:378px;top:492px;width:43px;height:2px;background:linear-gradient(90deg,#0038ff 0px,#2e2bff 11px,#4322ff 22px,#5314ff 32px,#6101ff 43px)"></div>
<div class="a" style="left:376px;top:494px;width:34px;height:2px;background:linear-gradient(90deg,#0033ff 0px,#2e23ff 11px,#4416ff 23px,#5601ff 34px)"></div>
<div class="a" style="left:375px;top:496px;width:23px;height:2px;background:linear-gradient(90deg,#002cff 0px,#3018ff 12px,#4701ff 23px)"></div>
<div class="a" style="left:374px;top:498px;width:13px;height:2px;background:linear-gradient(90deg,#0022ff 0px,#230fff 6px,#3701ff 13px)"></div>
<div class="a" style="left:374px;top:500px;width:5px;height:2px;background:linear-gradient(90deg,#0900ff 0px,#1e00ff 2px,#2900ff 5px)"></div>
<div class="a" style="left:374px;top:502px;width:5px;height:2px;background:linear-gradient(90deg,#2300ff 0px,#2c00ff 2px,#3400ff 5px)"></div>
</div>
<svg class="a" style="left:0;top:0" width="1490" height="564" viewBox="400 442 1490 564" font-family="Liberation Serif">
<defs>
<radialGradient id="bw" cx=".4" cy=".35" r=".7"><stop offset="0" stop-color="#fff"/><stop offset=".55" stop-color="#f4f4f4"/><stop offset="1" stop-color="#b8b8b8"/></radialGradient><radialGradient id="bg" cx=".4" cy=".35" r=".7"><stop offset="0" stop-color="#30ff30"/><stop offset=".55" stop-color="#00d800"/><stop offset="1" stop-color="#006800"/></radialGradient><radialGradient id="bc" cx=".4" cy=".35" r=".7"><stop offset="0" stop-color="#b0ffff"/><stop offset=".55" stop-color="#78e8e8"/><stop offset="1" stop-color="#2a7070"/></radialGradient><radialGradient id="bb" cx=".4" cy=".35" r=".7"><stop offset="0" stop-color="#4040ff"/><stop offset=".55" stop-color="#1818e0"/><stop offset="1" stop-color="#000070"/></radialGradient><radialGradient id="bm" cx=".4" cy=".35" r=".7"><stop offset="0" stop-color="#ff50ff"/><stop offset=".55" stop-color="#e000e0"/><stop offset="1" stop-color="#700070"/></radialGradient><radialGradient id="by" cx=".4" cy=".35" r=".7"><stop offset="0" stop-color="#ffffb0"/><stop offset=".55" stop-color="#e8e070"/><stop offset="1" stop-color="#80782a"/></radialGradient><radialGradient id="br" cx=".4" cy=".35" r=".7"><stop offset="0" stop-color="#ff5040"/><stop offset=".55" stop-color="#e01010"/><stop offset="1" stop-color="#700000"/></radialGradient><radialGradient id="bl" cx=".4" cy=".35" r=".7"><stop offset="0" stop-color="#e8e8ff"/><stop offset=".55" stop-color="#c8c8f0"/><stop offset="1" stop-color="#8080b0"/></radialGradient>
</defs>
<polygon points="1721.2,821.2 1683.4,827.4 1628.7,836.2 1569.6,845.7 1518.8,853.8 1485.7,858.9 1461.7,862.4 1431.6,867.0 1380.0,875.0 1291.9,888.9 1179.1,906.8 1066.7,924.6 980.0,938.3 927.7,946.6 895.7,951.6 874.9,954.9 856.2,957.8 839.6,960.3 829.1,961.9 821.9,963.0 815.0,964.0 808.2,965.1 802.9,966.1 798.6,966.9 795.0,967.5 792.3,967.8 790.6,967.8 789.3,967.7 787.5,967.5 785.2,967.2 782.7,966.9 780.1,966.4 777.5,965.8 775.2,965.1 773.0,964.3 770.5,963.4 767.5,962.0 763.7,960.2 759.4,958.1 754.7,955.7 750.0,953.0 745.2,950.2 740.3,947.1 735.2,943.7 730.0,940.0 724.4,935.6 718.5,930.6 712.7,925.7 707.5,921.2 703.1,917.6 699.1,914.3 695.4,911.3 691.5,908.0 687.4,904.6 683.3,901.1 679.2,897.5 675.0,893.8 670.6,889.8 666.0,885.6 661.5,881.4 657.5,877.5 654.3,874.2 651.7,871.4 648.9,868.2 645.0,863.8 639.5,857.6 633.0,850.2 626.3,842.4 620.0,835.0 614.2,827.9 608.6,820.8 603.4,814.0 598.8,808.0 595.2,803.6 592.6,800.4 589.9,796.8 586.2,791.2 581.2,782.8 575.2,772.5 569.1,761.8 563.8,752.0 559.3,743.6 555.4,735.7 551.9,728.2 548.8,721.0 546.0,714.1 543.8,707.5 541.8,701.1 540.0,695.0 538.4,689.2 537.1,683.8 536.0,678.4 535.0,672.5 534.2,666.0 533.5,659.1 532.9,652.0 532.5,645.0 532.2,638.1 532.0,631.2 532.0,624.4 532.0,617.5 532.0,610.5 532.1,603.5 532.4,596.6 533.0,590.0 534.0,583.7 535.3,577.7 536.9,571.9 538.8,566.2 540.8,560.8 543.0,555.5 545.6,550.4 548.8,545.5 552.5,540.7 556.9,536.0 561.5,531.7 566.2,528.0 570.9,525.1 575.7,522.8 580.8,520.7 586.2,518.8 592.4,516.7 599.1,514.7 605.9,512.9 612.5,511.2 618.9,509.8 625.2,508.4 631.5,507.2 637.5,506.2 643.6,505.5 649.7,505.0 655.3,504.6 660.0,504.2 662.9,504.0 664.5,503.9 666.4,503.9 670.0,504.0 676.1,504.1 683.8,504.2 692.0,504.5 700.0,505.0 707.1,505.6 714.1,506.4 721.4,507.4 730.0,508.8 740.1,510.5 751.2,512.5 763.0,514.7 775.0,517.0 787.6,519.4 800.9,522.0 813.7,524.6 825.0,527.0 833.2,529.0 839.3,530.7 846.1,532.6 856.2,535.5 872.0,539.8 891.5,545.0 911.1,550.4 927.5,555.0 939.3,558.5 948.5,561.5 956.6,564.2 965.0,566.9 974.2,569.8 983.4,572.7 992.2,575.5 1000.0,577.9 1005.7,579.6 1009.8,580.8 1014.7,582.2 1022.5,584.6 1034.0,588.2 1048.0,592.7 1063.6,597.7 1080.0,603.1 1098.5,609.2 1119.1,616.0 1138.8,622.6 1155.0,628.0 1163.9,631.1 1168.0,632.6 1173.7,634.7 1187.5,639.5 1214.8,648.7 1250.9,660.9 1287.2,673.1 1315.0,682.5 1330.9,687.9 1340.0,691.1 1345.9,693.2 1352.5,695.5 1359.8,698.0 1366.1,700.2 1372.5,702.4 1380.0,705.0 1387.7,707.7 1395.5,710.4 1405.6,713.8 1420.0,718.8 1439.0,725.3 1461.6,733.0 1488.0,742.1 1518.8,752.5 1558.3,765.8 1605.1,781.5 1649.9,796.6 1683.8,808.0 1703.0,814.6 1712.8,818.1 1717.5,819.9" fill="none" stroke="#f0b000" stroke-width="1.500" stroke-linejoin="round"/>
<path d="M681 503.5L712 483" stroke="#d8d8d8" stroke-width=".8"/>
<text transform="translate(712 486.5) scale(1.83 1)" font-size="12" fill="#dedede">520 nm</text>
<path d="M927 554.5L959 534" stroke="#d8d8d8" stroke-width=".8"/>
<text transform="translate(959 537.5) scale(1.83 1)" font-size="12" fill="#dedede">540 nm</text>
<path d="M1155 628L1187 607.5" stroke="#d8d8d8" stroke-width=".8"/>
<text transform="translate(1187 611.0) scale(1.83 1)" font-size="12" fill="#dedede">560 nm</text>
<path d="M1315 682.5L1347 661.5" stroke="#d8d8d8" stroke-width=".8"/>
<text transform="translate(1347 665.0) scale(1.83 1)" font-size="12" fill="#dedede">580 nm</text>
<path d="M1426 720L1457.5 698.5" stroke="#d8d8d8" stroke-width=".8"/>
<text transform="translate(1457.5 702.0) scale(1.83 1)" font-size="12" fill="#dedede">600 nm</text>
<path d="M1530 756L1562 734" stroke="#d8d8d8" stroke-width=".8"/>
<text transform="translate(1562 737.5) scale(1.83 1)" font-size="12" fill="#dedede">620 nm</text>
<path d="M1645 792L1675 772.5" stroke="#d8d8d8" stroke-width=".8"/>
<text transform="translate(1675 776.0) scale(1.83 1)" font-size="12" fill="#dedede">640 nm</text>
<path d="M1692.5 810L1723.5 790" stroke="#d8d8d8" stroke-width=".8"/>
<text transform="translate(1723.5 793.5) scale(1.83 1)" font-size="12" fill="#dedede">660 nm</text>
<path d="M1713.5 817.5L1743.5 796.5" stroke="#d8d8d8" stroke-width=".8"/>
<text transform="translate(1743.5 800.0) scale(1.83 1)" font-size="12" fill="#dedede">680 nm</text>
<path d="M532 644.5L502.5 649" stroke="#d8d8d8" stroke-width=".8"/>
<text transform="translate(447 660.5) scale(1.83 1)" font-size="12" fill="#dedede">500 nm</text>
<path d="M657.5 877.5L627 883" stroke="#d8d8d8" stroke-width=".8"/>
<text transform="translate(572 894) scale(1.83 1)" font-size="12" fill="#dedede">480 nm</text>
<path d="M730 940.5L700 946" stroke="#d8d8d8" stroke-width=".8"/>
<text transform="translate(645 957) scale(1.83 1)" font-size="12" fill="#dedede">460 nm</text>
<path d="M757 956L723 963" stroke="#d8d8d8" stroke-width=".8"/>
<text transform="translate(668 972) scale(1.83 1)" font-size="12" fill="#dedede">440 nm</text>
<path d="M778 965.5L740 969" stroke="#d8d8d8" stroke-width=".8"/>
<text transform="translate(685 978.5) scale(1.83 1)" font-size="12" fill="#dedede">420 nm</text>
<text x="403.500" y="915.2" font-size="13.500" fill="#fff">0.1</text>
<text x="403.500" y="859.1" font-size="13.500" fill="#fff">0.2</text>
<text x="403.500" y="802.9" font-size="13.500" fill="#fff">0.3</text>
<text x="403.500" y="746.8" font-size="13.500" fill="#fff">0.4</text>
<text x="403.500" y="690.7" font-size="13.500" fill="#fff">0.5</text>
<text x="403.500" y="634.6" font-size="13.500" fill="#fff">0.6</text>
<text x="403.500" y="578.5" font-size="13.500" fill="#fff">0.7</text>
<text x="403.500" y="522.3" font-size="13.500" fill="#fff">0.8</text>
<text x="693.3" y="1000.600" font-size="13.500" fill="#fff">0.1</text>
<text x="858.6" y="1000.600" font-size="13.500" fill="#fff">0.2</text>
<text x="1023.9" y="1000.600" font-size="13.500" fill="#fff">0.3</text>
<text x="1189.2" y="1000.600" font-size="13.500" fill="#fff">0.4</text>
<text x="1354.5" y="1000.600" font-size="13.500" fill="#fff">0.5</text>
<text x="1519.8" y="1000.600" font-size="13.500" fill="#fff">0.6</text>
<text x="1685.1" y="1000.600" font-size="13.500" fill="#fff">0.7</text>
<path d="M400 791.7H1890M1043.4 442V1006" stroke="#c8c8c8" stroke-width="1" stroke-dasharray="3 3" fill="none"/>
<path d="M1022.4 639.6L1078.6 654.7" stroke="#008000" stroke-width="3"/>
<path d="M1078.6 654.7L1421.4 747.2" stroke="#808000" stroke-width="3"/>
<path d="M1421.4 747.2L1584.4 791.1" stroke="#800000" stroke-width="3"/>
<path d="M1584.4 791.1L1347.1 835.5" stroke="#800000" stroke-width="3"/>
<path d="M1347.1 835.5L1056.3 889.9" stroke="#800080" stroke-width="3"/>
<path d="M774.5 942.6L841.4 860.8" stroke="#000080" stroke-width="3"/>
<path d="M841.4 860.8L954.0 723.2" stroke="#008080" stroke-width="3"/>
<path d="M954.0 723.2L1022.4 639.6" stroke="#008000" stroke-width="3"/>
<polygon points="1028.5,634.5 1603.8,794.7 776,941.5" fill="none" stroke="#fff" stroke-width="2.700" stroke-linejoin="round"/>
<path d="M1043.4 791.7L1218 687.5" stroke="#3a3a3a" stroke-width=".9" stroke-dasharray="3.500 3.500"/>
<path d="M1043.4 791.7L898.8 792.5" stroke="#3a3a3a" stroke-width=".9" stroke-dasharray="3.500 3.500"/>
<path d="M1043.4 791.7L1053 892" stroke="#3a3a3a" stroke-width=".9" stroke-dasharray="3.500 3.500"/>
<path d="M1043.4 791.7L1028.5 635.8" stroke="#3a3a3a" stroke-width=".9" stroke-dasharray="3.500 3.500"/>
<path d="M1043.4 791.7L1603.8 794.7" stroke="#3a3a3a" stroke-width=".9" stroke-dasharray="3.500 3.500"/>
<path d="M1043.4 791.7L772.5 942.5" stroke="#3a3a3a" stroke-width=".9" stroke-dasharray="3.500 3.500"/>
<polyline points="1302.2,742.1 1288.3,743.0 1268.9,744.7 1250.8,746.7 1223.4,750.3 1199.1,754.2 1177.5,758.1 1158.1,762.1 1125.4,769.5 1099.4,776.2 1078.5,782.1 1061.2,787.8 1046.9,792.7 1035.0,797.0 1016.3,804.1 999.0,811.1 983.6,817.7 971.7,822.7 960.5,827.7 951.6,831.7 945.1,834.7 941.0,836.6 937.1,838.4" fill="none" stroke="#000" stroke-width="1.600"/>
<circle cx="1289.3" cy="744.5" r="3" fill="#000" opacity=".3"/><circle cx="1288.3" cy="743.0" r="2.500" fill="#fff" stroke="#000" stroke-width="1"/>
<text x="1287.3" y="737.5" font-size="13.300" fill="#2a2a30">2700</text>
<circle cx="1251.8" cy="748.2" r="3" fill="#000" opacity=".3"/><circle cx="1250.8" cy="746.7" r="2.500" fill="#fff" stroke="#000" stroke-width="1"/>
<text x="1226.3" y="740.5" font-size="13.300" fill="#2a2a30">3000</text>
<circle cx="1159.1" cy="763.6" r="3" fill="#000" opacity=".3"/><circle cx="1158.1" cy="762.1" r="2.500" fill="#fff" stroke="#000" stroke-width="1"/>
<text x="1128.9" y="755.9" font-size="13.300" fill="#2a2a30">4000</text>
<circle cx="1079.5" cy="783.6" r="3" fill="#000" opacity=".3"/><circle cx="1078.5" cy="782.1" r="2.500" fill="#fff" stroke="#000" stroke-width="1"/>
<text x="1049.0" y="775.6" font-size="13.300" fill="#2a2a30">5500</text>
<circle cx="1000.0" cy="812.6" r="3" fill="#000" opacity=".3"/><circle cx="999.0" cy="811.1" r="2.500" fill="#fff" stroke="#000" stroke-width="1"/>
<text x="969.7" y="804.7" font-size="13.300" fill="#2a2a30">9300</text>
<circle cx="1265.7" cy="746.7" r="2.800" fill="#00e000" stroke="#063" stroke-width=".6"/><text x="1263.5" y="763.5" font-size="13" fill="#2a2a30">A</text>
<circle cx="1101.7" cy="779" r="2.800" fill="#00e000" stroke="#063" stroke-width=".6"/><text x="1105.5" y="795" font-size="13" fill="#2a2a30">B</text>
<text x="1009.500" y="790" font-size="13.300" fill="#2a2a30">D65</text><text x="1042.800" y="814.400" font-size="13" fill="#2a2a30">C</text>
<rect x="1019.3" y="665.5" width="14" height="14" fill="#50f020"/><path d="M1019.3 679.5V665.5H1033.3" fill="none" stroke="#101080" stroke-width="1"/><path d="M1033.3 665.5V679.5H1019.3" fill="none" stroke="#d01030" stroke-width="1"/>
<circle cx="1033.3" cy="674.0" r="6.6" fill="#000" opacity=".32"/><circle cx="1032.0" cy="672.0" r="6" fill="url(#bg)" stroke="#000" stroke-opacity=".45" stroke-width=".9"/><circle cx="1033.0" cy="673.5" r=".8" fill="#101010"/>
<rect x="1024.3" y="703.5" width="14" height="14" fill="#50f020"/><path d="M1024.3 717.5V703.5H1038.3" fill="none" stroke="#101080" stroke-width="1"/><path d="M1038.3 703.5V717.5H1024.3" fill="none" stroke="#d01030" stroke-width="1"/>
<circle cx="1038.8" cy="713.3" r="6.6" fill="#000" opacity=".32"/><circle cx="1037.5" cy="711.3" r="6" fill="url(#bg)" stroke="#000" stroke-opacity=".45" stroke-width=".9"/><circle cx="1038.5" cy="712.8" r=".8" fill="#101010"/>
<rect x="1030.0" y="743.5" width="14" height="14" fill="#50f020"/><path d="M1030.0 757.5V743.5H1044.0" fill="none" stroke="#101080" stroke-width="1"/><path d="M1044.0 743.5V757.5H1030.0" fill="none" stroke="#d01030" stroke-width="1"/>
<circle cx="1041.3" cy="752.8" r="6.6" fill="#000" opacity=".32"/><circle cx="1040.0" cy="750.8" r="6" fill="url(#bg)" stroke="#000" stroke-opacity=".45" stroke-width=".9"/><circle cx="1041.0" cy="752.3" r=".8" fill="#101010"/>
<rect x="1015.5" y="632.0" width="14" height="14" fill="#50e030"/><path d="M1015.5 646.0V632.0H1029.5" fill="none" stroke="#101080" stroke-width="1"/><path d="M1029.5 632.0V646.0H1015.5" fill="none" stroke="#d01030" stroke-width="1"/>
<path d="M1016.500 636.500h7M1020 633v7" stroke="#000" stroke-width="1"/>
<circle cx="1029.8" cy="637.8" r="6.6" fill="#000" opacity=".32"/><circle cx="1028.5" cy="635.8" r="6" fill="url(#bg)" stroke="#000" stroke-opacity=".45" stroke-width=".9"/><circle cx="1029.5" cy="637.3" r=".8" fill="#101010"/>
<rect x="889.7" y="784.7" width="14.6" height="14.6" fill="#40fcff"/><path d="M889.7 799.3V784.7H904.3" fill="none" stroke="#101080" stroke-width="1"/><path d="M904.3 784.7V799.3H889.7" fill="none" stroke="#d01030" stroke-width="1"/>
<circle cx="900.1" cy="794.5" r="6.5" fill="#000" opacity=".32"/><circle cx="898.8" cy="792.5" r="5.9" fill="url(#bc)" stroke="#000" stroke-opacity=".45" stroke-width=".9"/><circle cx="899.8" cy="794.0" r=".8" fill="#b00000"/>
<rect x="922.2" y="784.7" width="14.6" height="14.6" fill="#40fcff"/><path d="M922.2 799.3V784.7H936.8" fill="none" stroke="#101080" stroke-width="1"/><path d="M936.8 784.7V799.3H922.2" fill="none" stroke="#d01030" stroke-width="1"/>
<circle cx="933.8" cy="795.0" r="6.5" fill="#000" opacity=".32"/><circle cx="932.5" cy="793.0" r="5.9" fill="url(#bc)" stroke="#000" stroke-opacity=".45" stroke-width=".9"/><circle cx="933.5" cy="794.5" r=".8" fill="#b00000"/>
<rect x="959.0" y="785.2" width="14.6" height="14.6" fill="#40fcff"/><path d="M959.0 799.8V785.2H973.6" fill="none" stroke="#101080" stroke-width="1"/><path d="M973.6 785.2V799.8H959.0" fill="none" stroke="#d01030" stroke-width="1"/>
<circle cx="970.1" cy="795.8" r="6.5" fill="#000" opacity=".32"/><circle cx="968.8" cy="793.8" r="5.9" fill="url(#bc)" stroke="#000" stroke-opacity=".45" stroke-width=".9"/><circle cx="969.8" cy="795.3" r=".8" fill="#b00000"/>
<rect x="996.5" y="784.7" width="14.6" height="14.6" fill="#40fcff"/><path d="M996.5 799.3V784.7H1011.1" fill="none" stroke="#101080" stroke-width="1"/><path d="M1011.1 784.7V799.3H996.5" fill="none" stroke="#d01030" stroke-width="1"/>
<circle cx="1006.3" cy="794.5" r="6.5" fill="#000" opacity=".32"/><circle cx="1005.0" cy="792.5" r="5.9" fill="url(#bc)" stroke="#000" stroke-opacity=".45" stroke-width=".9"/><circle cx="1006.0" cy="794.0" r=".8" fill="#b00000"/>
<rect x="1082.2" y="757.7" width="14.6" height="14.6" fill="#f4e410"/><path d="M1082.2 772.3V757.7H1096.8" fill="none" stroke="#101080" stroke-width="1"/><path d="M1096.8 757.7V772.3H1082.2" fill="none" stroke="#d01030" stroke-width="1"/>
<circle cx="1091.8" cy="767.0" r="6.5" fill="#000" opacity=".32"/><circle cx="1090.5" cy="765.0" r="5.9" fill="url(#by)" stroke="#000" stroke-opacity=".45" stroke-width=".9"/><circle cx="1091.5" cy="766.5" r=".8" fill="#000080"/>
<rect x="1128.5" y="732.2" width="14.6" height="14.6" fill="#f4e410"/><path d="M1128.5 746.8V732.2H1143.1" fill="none" stroke="#101080" stroke-width="1"/><path d="M1143.1 732.2V746.8H1128.5" fill="none" stroke="#d01030" stroke-width="1"/>
<circle cx="1136.3" cy="743.3" r="6.5" fill="#000" opacity=".32"/><circle cx="1135.0" cy="741.3" r="5.9" fill="url(#by)" stroke="#000" stroke-opacity=".45" stroke-width=".9"/><circle cx="1136.0" cy="742.8" r=".8" fill="#000080"/>
<rect x="1174.0" y="707.2" width="14.6" height="14.6" fill="#f4e410"/><path d="M1174.0 721.8V707.2H1188.6" fill="none" stroke="#101080" stroke-width="1"/><path d="M1188.6 707.2V721.8H1174.0" fill="none" stroke="#d01030" stroke-width="1"/>
<circle cx="1179.3" cy="715.8" r="6.5" fill="#000" opacity=".32"/><circle cx="1178.0" cy="713.8" r="5.9" fill="url(#by)" stroke="#000" stroke-opacity=".45" stroke-width=".9"/><circle cx="1179.0" cy="715.3" r=".8" fill="#000080"/>
<rect x="1212.2" y="685.2" width="14.6" height="14.6" fill="#f4e410"/><path d="M1212.2 699.8V685.2H1226.8" fill="none" stroke="#101080" stroke-width="1"/><path d="M1226.8 685.2V699.8H1212.2" fill="none" stroke="#d01030" stroke-width="1"/>
<circle cx="1219.3" cy="689.5" r="6.5" fill="#000" opacity=".32"/><circle cx="1218.0" cy="687.5" r="5.9" fill="url(#by)" stroke="#000" stroke-opacity=".45" stroke-width=".9"/><circle cx="1219.0" cy="689.0" r=".8" fill="#000080"/>
<rect x="1040.8" y="812.0" width="11" height="11" fill="none" stroke="#ff10d0" stroke-width="2.600"/><path d="M1039.3 824.5V810.5H1053.3" fill="none" stroke="#101080" stroke-width="1"/>
<circle cx="1041.8" cy="820.8" r="6.3999999999999995" fill="#000" opacity=".32"/><circle cx="1040.5" cy="818.8" r="5.8" fill="url(#bm)" stroke="#000" stroke-opacity=".45" stroke-width=".9"/><circle cx="1041.5" cy="820.3" r=".8" fill="#101010"/>
<rect x="1044.5" y="837.5" width="11" height="11" fill="none" stroke="#ff10d0" stroke-width="2.600"/><path d="M1043.0 850.0V836.0H1057.0" fill="none" stroke="#101080" stroke-width="1"/>
<circle cx="1041.3" cy="847.8" r="6.3999999999999995" fill="#000" opacity=".32"/><circle cx="1040.0" cy="845.8" r="5.8" fill="url(#bm)" stroke="#000" stroke-opacity=".45" stroke-width=".9"/><circle cx="1041.0" cy="847.3" r=".8" fill="#101010"/>
<rect x="1047.5" y="862.8" width="11" height="11" fill="none" stroke="#ff10d0" stroke-width="2.600"/><path d="M1046.0 875.3V861.3H1060.0" fill="none" stroke="#101080" stroke-width="1"/>
<circle cx="1040.1" cy="873.3" r="6.3999999999999995" fill="#000" opacity=".32"/><circle cx="1038.8" cy="871.3" r="5.8" fill="url(#bm)" stroke="#000" stroke-opacity=".45" stroke-width=".9"/><circle cx="1039.8" cy="872.8" r=".8" fill="#101010"/>
<rect x="1050.5" y="883.5" width="11" height="11" fill="none" stroke="#ff10d0" stroke-width="2.600"/><path d="M1049.0 896.0V882.0H1063.0" fill="none" stroke="#101080" stroke-width="1"/>
<circle cx="1054.3" cy="894.0" r="6.3999999999999995" fill="#000" opacity=".32"/><circle cx="1053.0" cy="892.0" r="5.8" fill="url(#bm)" stroke="#000" stroke-opacity=".45" stroke-width=".9"/><circle cx="1054.0" cy="893.5" r=".8" fill="#101010"/>
<rect x="1186.0" y="786.0" width="11" height="11" fill="none" stroke="#ff1010" stroke-width="2.600"/><path d="M1184.5 798.5V784.5H1198.5" fill="none" stroke="#101080" stroke-width="1"/>
<circle cx="1179.3" cy="793.8" r="6.3999999999999995" fill="#000" opacity=".32"/><circle cx="1178.0" cy="791.8" r="5.8" fill="url(#br)" stroke="#000" stroke-opacity=".45" stroke-width=".9"/>
<rect x="1329.5" y="785.8" width="11" height="11" fill="none" stroke="#ff1010" stroke-width="2.600"/><path d="M1328.0 798.3V784.3H1342.0" fill="none" stroke="#101080" stroke-width="1"/>
<circle cx="1320.1" cy="791.5" r="6.3999999999999995" fill="#000" opacity=".32"/><circle cx="1318.8" cy="789.5" r="5.8" fill="url(#br)" stroke="#000" stroke-opacity=".45" stroke-width=".9"/>
<rect x="1464.5" y="786.0" width="11" height="11" fill="none" stroke="#ff1010" stroke-width="2.600"/><path d="M1463.0 798.5V784.5H1477.0" fill="none" stroke="#101080" stroke-width="1"/>
<circle cx="1464.3" cy="794.0" r="6.3999999999999995" fill="#000" opacity=".32"/><circle cx="1463.0" cy="792.0" r="5.8" fill="url(#br)" stroke="#000" stroke-opacity=".45" stroke-width=".9"/>
<rect x="1577.2" y="784.3" width="14.6" height="14.6" fill="#ff0a10"/><path d="M1577.2 798.9V784.3H1591.8" fill="none" stroke="#101080" stroke-width="1"/><path d="M1591.8 784.3V798.9H1577.2" fill="none" stroke="#d01030" stroke-width="1"/>
<circle cx="1584.500" cy="791.500" r="4.600" fill="#fff" opacity=".45"/><path d="M1581.500 790.500h5M1584 788v5" stroke="#fff" stroke-width="1.200"/>
<circle cx="1605.1" cy="796.7" r="6.3" fill="#000" opacity=".32"/><circle cx="1603.8" cy="794.7" r="5.7" fill="url(#br)" stroke="#000" stroke-opacity=".45" stroke-width=".9"/>
<rect x="890.5" y="866.8" width="14" height="14" fill="#2010d0"/><path d="M890.5 880.8V866.8H904.5" fill="none" stroke="#101080" stroke-width="1"/><path d="M904.5 866.8V880.8H890.5" fill="none" stroke="#d01030" stroke-width="1"/>
<circle cx="898.8" cy="876.0" r="6.3999999999999995" fill="#000" opacity=".32"/><circle cx="897.5" cy="874.0" r="5.8" fill="url(#bb)" stroke="#000" stroke-opacity=".45" stroke-width=".9"/>
<rect x="964.0" y="827.5" width="11" height="11" fill="none" stroke="#3010f0" stroke-width="2.600"/><path d="M962.5 840.0V826.0H976.5" fill="none" stroke="#101080" stroke-width="1"/>
<circle cx="965.1" cy="838.0" r="6.3999999999999995" fill="#000" opacity=".32"/><circle cx="963.8" cy="836.0" r="5.8" fill="url(#bb)" stroke="#000" stroke-opacity=".45" stroke-width=".9"/>
<rect x="823.0" y="901.5" width="13" height="13" fill="#2818e0"/><path d="M823.0 914.5V901.5H836.0" fill="none" stroke="#101080" stroke-width="1"/><path d="M836.0 901.5V914.5H823.0" fill="none" stroke="#d01030" stroke-width="1"/>
<circle cx="830.8" cy="910.0" r="6.1" fill="#000" opacity=".32"/><circle cx="829.5" cy="908.0" r="5.5" fill="url(#bb)" stroke="#000" stroke-opacity=".45" stroke-width=".9"/>
<rect x="765.5" y="935.5" width="14" height="14" fill="#2010c0"/><path d="M765.5 949.5V935.5H779.5" fill="none" stroke="#101080" stroke-width="1"/><path d="M779.5 935.5V949.5H765.5" fill="none" stroke="#d01030" stroke-width="1"/>
<circle cx="773.8" cy="944.5" r="6.3999999999999995" fill="#000" opacity=".32"/><circle cx="772.5" cy="942.5" r="5.8" fill="url(#bb)" stroke="#000" stroke-opacity=".45" stroke-width=".9"/>
<rect x="947.3" y="766.5" width="13" height="13" fill="none" stroke="#c8923a" stroke-width="1.6"/><rect x="949.1" y="768.3" width="9.4" height="9.4" fill="none" stroke="#5a6a5a" stroke-width=".8"/><path d="M946.3 765.5l3.500 3.500M961.3 765.5l-3.500 3.500M946.3 780.5l3.500 -3.500M961.3 780.5l-3.500 -3.500" stroke="#f4ead8" stroke-width="1"/>
<circle cx="961.0" cy="773.8" r="5.8" fill="#000" opacity=".35"/><circle cx="959.5" cy="771.8" r="4.8" fill="url(#bw)" stroke="#222" stroke-width="1.300"/>
<rect x="861.0" y="822.3" width="13" height="13" fill="none" stroke="#c8923a" stroke-width="1.6"/><rect x="862.8" y="824.1" width="9.4" height="9.4" fill="none" stroke="#5a6a5a" stroke-width=".8"/><path d="M860.0 821.3l3.500 3.500M875.0 821.3l-3.500 3.500M860.0 836.3l3.500 -3.500M875.0 836.3l-3.500 -3.500" stroke="#f4ead8" stroke-width="1"/>
<circle cx="869.0" cy="830.8" r="5.8" fill="#000" opacity=".35"/><circle cx="867.5" cy="828.8" r="4.8" fill="url(#bw)" stroke="#222" stroke-width="1.300"/>
<rect x="923.0" y="825.3" width="13" height="13" fill="none" stroke="#c8923a" stroke-width="1.6"/><rect x="924.8" y="827.1" width="9.4" height="9.4" fill="none" stroke="#5a6a5a" stroke-width=".8"/><path d="M922.0 824.3l3.500 3.500M937.0 824.3l-3.500 3.500M922.0 839.3l3.500 -3.500M937.0 839.3l-3.500 -3.500" stroke="#f4ead8" stroke-width="1"/>
<circle cx="931.0" cy="833.8" r="5.8" fill="#000" opacity=".35"/><circle cx="929.5" cy="831.8" r="4.8" fill="url(#bw)" stroke="#222" stroke-width="1.300"/>
<rect x="954.8" y="832.3" width="13" height="13" fill="none" stroke="#c8923a" stroke-width="1.6"/><rect x="956.6" y="834.1" width="9.4" height="9.4" fill="none" stroke="#5a6a5a" stroke-width=".8"/><path d="M953.8 831.3l3.500 3.500M968.8 831.3l-3.500 3.500M953.8 846.3l3.500 -3.500M968.8 846.3l-3.500 -3.500" stroke="#f4ead8" stroke-width="1"/>
<circle cx="962.3" cy="840.8" r="5.8" fill="#000" opacity=".35"/><circle cx="960.8" cy="838.8" r="4.8" fill="url(#bw)" stroke="#222" stroke-width="1.300"/>
<rect x="863.5" y="869.5" width="13" height="13" fill="none" stroke="#c8923a" stroke-width="1.6"/><rect x="865.3" y="871.3" width="9.4" height="9.4" fill="none" stroke="#5a6a5a" stroke-width=".8"/><path d="M862.5 868.5l3.500 3.500M877.5 868.5l-3.500 3.500M862.5 883.5l3.500 -3.500M877.5 883.5l-3.500 -3.500" stroke="#f4ead8" stroke-width="1"/>
<circle cx="869.5" cy="877.5" r="5.8" fill="#000" opacity=".35"/><circle cx="868.0" cy="875.5" r="4.8" fill="url(#bw)" stroke="#222" stroke-width="1.300"/>
<rect x="991.8" y="852.8" width="13" height="13" fill="none" stroke="#c8923a" stroke-width="1.6"/><rect x="993.6" y="854.6" width="9.4" height="9.4" fill="none" stroke="#5a6a5a" stroke-width=".8"/><path d="M990.8 851.8l3.500 3.500M1005.8 851.8l-3.500 3.500M990.8 866.8l3.500 -3.500M1005.8 866.8l-3.500 -3.500" stroke="#f4ead8" stroke-width="1"/>
<circle cx="985.3" cy="863.8" r="5.8" fill="#000" opacity=".35"/><circle cx="983.8" cy="861.8" r="4.8" fill="url(#bw)" stroke="#222" stroke-width="1.300"/>
<rect x="819.5" y="900.5" width="13" height="13" fill="none" stroke="#c8923a" stroke-width="1.6"/><rect x="821.3" y="902.3" width="9.4" height="9.4" fill="none" stroke="#5a6a5a" stroke-width=".8"/><path d="M818.5 899.5l3.500 3.500M833.5 899.5l-3.500 3.500M818.5 914.5l3.500 -3.500M833.5 914.5l-3.500 -3.500" stroke="#f4ead8" stroke-width="1"/>
<circle cx="827.5" cy="908.0" r="5.8" fill="#000" opacity=".35"/><circle cx="826.0" cy="906.0" r="4.8" fill="url(#bw)" stroke="#222" stroke-width="1.300"/>
<rect x="1023.0" y="686.0" width="13" height="13" fill="none" stroke="#c8923a" stroke-width="1.6"/><rect x="1024.8" y="687.8" width="9.4" height="9.4" fill="none" stroke="#5a6a5a" stroke-width=".8"/><path d="M1022.0 685.0l3.500 3.500M1037.0 685.0l-3.500 3.500M1022.0 700.0l3.500 -3.500M1037.0 700.0l-3.500 -3.500" stroke="#f4ead8" stroke-width="1"/>
<circle cx="1039.5" cy="695.8" r="5.8" fill="#000" opacity=".35"/><circle cx="1038.0" cy="693.8" r="4.8" fill="url(#bw)" stroke="#222" stroke-width="1.300"/>
<rect x="1087.3" y="723.5" width="13" height="13" fill="none" stroke="#c8923a" stroke-width="1.6"/><rect x="1089.1" y="725.3" width="9.4" height="9.4" fill="none" stroke="#5a6a5a" stroke-width=".8"/><path d="M1086.3 722.5l3.500 3.500M1101.3 722.5l-3.500 3.500M1086.3 737.5l3.500 -3.500M1101.3 737.5l-3.500 -3.500" stroke="#f4ead8" stroke-width="1"/>
<circle cx="1097.0" cy="734.5" r="5.8" fill="#000" opacity=".35"/><circle cx="1095.5" cy="732.5" r="4.8" fill="url(#bw)" stroke="#222" stroke-width="1.300"/>
<rect x="1144.8" y="687.8" width="13" height="13" fill="none" stroke="#c8923a" stroke-width="1.6"/><rect x="1146.6" y="689.6" width="9.4" height="9.4" fill="none" stroke="#5a6a5a" stroke-width=".8"/><path d="M1143.8 686.8l3.500 3.500M1158.8 686.8l-3.500 3.500M1143.8 701.8l3.500 -3.500M1158.8 701.8l-3.500 -3.500" stroke="#f4ead8" stroke-width="1"/>
<circle cx="1158.3" cy="694.8" r="5.8" fill="#000" opacity=".35"/><circle cx="1156.8" cy="692.8" r="4.8" fill="url(#bw)" stroke="#222" stroke-width="1.300"/>
<rect x="1154.8" y="768.5" width="13" height="13" fill="none" stroke="#c8923a" stroke-width="1.6"/><rect x="1156.6" y="770.3" width="9.4" height="9.4" fill="none" stroke="#5a6a5a" stroke-width=".8"/><path d="M1153.8 767.5l3.500 3.500M1168.8 767.5l-3.500 3.500M1153.8 782.5l3.500 -3.500M1168.8 782.5l-3.500 -3.500" stroke="#f4ead8" stroke-width="1"/>
<circle cx="1157.0" cy="777.0" r="5.8" fill="#000" opacity=".35"/><circle cx="1155.5" cy="775.0" r="4.8" fill="url(#bw)" stroke="#222" stroke-width="1.300"/>
<rect x="1206.0" y="764.8" width="13" height="13" fill="none" stroke="#c8923a" stroke-width="1.6"/><rect x="1207.8" y="766.6" width="9.4" height="9.4" fill="none" stroke="#5a6a5a" stroke-width=".8"/><path d="M1205.0 763.8l3.500 3.500M1220.0 763.8l-3.500 3.500M1205.0 778.8l3.500 -3.500M1220.0 778.8l-3.500 -3.500" stroke="#f4ead8" stroke-width="1"/>
<circle cx="1201.5" cy="773.8" r="5.8" fill="#000" opacity=".35"/><circle cx="1200.0" cy="771.8" r="4.8" fill="url(#bw)" stroke="#222" stroke-width="1.300"/>
<rect x="1148.0" y="834.8" width="13" height="13" fill="none" stroke="#c8923a" stroke-width="1.6"/><rect x="1149.8" y="836.6" width="9.4" height="9.4" fill="none" stroke="#5a6a5a" stroke-width=".8"/><path d="M1147.0 833.8l3.500 3.500M1162.0 833.8l-3.500 3.500M1147.0 848.8l3.500 -3.500M1162.0 848.8l-3.500 -3.500" stroke="#f4ead8" stroke-width="1"/>
<circle cx="1146.0" cy="844.5" r="5.8" fill="#000" opacity=".35"/><circle cx="1144.5" cy="842.5" r="4.8" fill="url(#bw)" stroke="#222" stroke-width="1.300"/>
<rect x="1266.0" y="703.5" width="13" height="13" fill="none" stroke="#c8923a" stroke-width="1.6"/><rect x="1267.8" y="705.3" width="9.4" height="9.4" fill="none" stroke="#5a6a5a" stroke-width=".8"/><path d="M1265.0 702.5l3.500 3.500M1280.0 702.5l-3.500 3.500M1265.0 717.5l3.500 -3.500M1280.0 717.5l-3.500 -3.500" stroke="#f4ead8" stroke-width="1"/>
<circle cx="1276.5" cy="709.5" r="5.8" fill="#000" opacity=".35"/><circle cx="1275.0" cy="707.5" r="4.8" fill="url(#bw)" stroke="#222" stroke-width="1.300"/>
<rect x="1318.5" y="722.3" width="13" height="13" fill="none" stroke="#c8923a" stroke-width="1.6"/><rect x="1320.3" y="724.1" width="9.4" height="9.4" fill="none" stroke="#5a6a5a" stroke-width=".8"/><path d="M1317.5 721.3l3.500 3.500M1332.5 721.3l-3.500 3.500M1317.5 736.3l3.500 -3.500M1332.5 736.3l-3.500 -3.500" stroke="#f4ead8" stroke-width="1"/>
<circle cx="1329.0" cy="730.3" r="5.8" fill="#000" opacity=".35"/><circle cx="1327.5" cy="728.3" r="4.8" fill="url(#bw)" stroke="#222" stroke-width="1.300"/>
<rect x="1388.5" y="743.0" width="13" height="13" fill="none" stroke="#c8923a" stroke-width="1.6"/><rect x="1390.3" y="744.8" width="9.4" height="9.4" fill="none" stroke="#5a6a5a" stroke-width=".8"/><path d="M1387.5 742.0l3.500 3.500M1402.5 742.0l-3.500 3.500M1387.5 757.0l3.500 -3.500M1402.5 757.0l-3.500 -3.500" stroke="#f4ead8" stroke-width="1"/>
<circle cx="1391.0" cy="749.0" r="5.8" fill="#000" opacity=".35"/><circle cx="1389.5" cy="747.0" r="4.8" fill="url(#bw)" stroke="#222" stroke-width="1.300"/>
<rect x="1310.5" y="795.5" width="13" height="13" fill="none" stroke="#c8923a" stroke-width="1.6"/><rect x="1312.3" y="797.3" width="9.4" height="9.4" fill="none" stroke="#5a6a5a" stroke-width=".8"/><path d="M1309.5 794.5l3.500 3.500M1324.5 794.5l-3.500 3.500M1309.5 809.5l3.500 -3.500M1324.5 809.5l-3.500 -3.500" stroke="#f4ead8" stroke-width="1"/>
<circle cx="1313.3" cy="801.5" r="5.8" fill="#000" opacity=".35"/><circle cx="1311.8" cy="799.5" r="4.8" fill="url(#bw)" stroke="#222" stroke-width="1.300"/>
<rect x="1450.5" y="791.0" width="13" height="13" fill="none" stroke="#c8923a" stroke-width="1.6"/><rect x="1452.3" y="792.8" width="9.4" height="9.4" fill="none" stroke="#5a6a5a" stroke-width=".8"/><path d="M1449.5 790.0l3.500 3.500M1464.5 790.0l-3.500 3.500M1449.5 805.0l3.500 -3.500M1464.5 805.0l-3.500 -3.500" stroke="#f4ead8" stroke-width="1"/>
<circle cx="1465.5" cy="798.0" r="5.8" fill="#000" opacity=".35"/><circle cx="1464.0" cy="796.0" r="4.8" fill="url(#bw)" stroke="#222" stroke-width="1.300"/>
<circle cx="1079.4" cy="790.6" r="5.8" fill="#000" opacity=".35"/><circle cx="1077.9" cy="788.6" r="4.8" fill="url(#bw)" stroke="#222" stroke-width="1.300"/>
<rect x="1036.0" y="784.0" width="14" height="14" fill="none" stroke="#c8923a" stroke-width="1.6"/><rect x="1037.8" y="785.8" width="10.4" height="10.4" fill="none" stroke="#5a6a5a" stroke-width=".8"/><path d="M1035.0 783.0l3.500 3.500M1051.0 783.0l-3.500 3.500M1035.0 799.0l3.500 -3.500M1051.0 799.0l-3.500 -3.500" stroke="#f4ead8" stroke-width="1"/>
<circle cx="1048.900" cy="790.900" r="6.200" fill="#1820b8"/><circle cx="1037.500" cy="799.500" r="3.200" fill="#0a9a1a"/>
<circle cx="1042.500" cy="794" r="8" fill="#000" opacity=".5"/><circle cx="1041.800" cy="792.800" r="7.200" fill="#050505"/><circle cx="1041.300" cy="792.200" r="4.300" fill="url(#bl)"/>
<text x="1880" y="943.500" font-family="Liberation Sans" font-weight="bold" font-size="16" fill="#4a4a4a" text-anchor="end">hcfr.sourceforge.net</text>
</svg>
</div>
<div class="a" style="left:398px;top:439.5px;width:1495px;height:3.2px;background:linear-gradient(#9a9a9a,#6e6e6e)"></div>
<div class="a" style="left:398px;top:439.5px;width:4px;height:566px;background:linear-gradient(90deg,#9a9a9a,#6e6e6e)"></div>
<div class="a" style="left:399px;top:1004.7px;width:1494px;height:4px;background:#fff"></div>
<div class="a" style="left:1890px;top:441px;width:3px;height:567px;background:#fff"></div>
<div class="a" style="left:0;top:1017.2px;width:1898px;height:1.8px;background:#707070"></div>
<div class="a" style="left:0;top:1019px;width:1898px;height:2.5px;background:#b4b4b4"></div>
<div class="a" style="left:0;top:1021.5px;width:1898px;height:20px;background:#f0f0f0"></div>
<div class="a" style="left:18.5px;top:1030px;width:1826px;height:2px;background:#858585"></div>
<div class="a" style="left:0;top:1040px;width:1920px;height:2px;background:#fff"></div>
<div class="a" style="left:0;top:1015px;width:2px;height:24px;background:#808080"></div>
<div class="a" style="left:0;top:1043px;width:1920px;height:19px;background:#f0f0f0"></div>
<div class="a" style="left:0;top:1041.800px;width:55px;height:1.300px;background:#000"></div><div class="a" style="left:127px;top:1041.800px;width:1793px;height:1.300px;background:#000"></div>
<div class="a" style="left:55px;top:1041px;width:72px;height:2px;background:#fff"></div>
<div class="a" style="left:1px;top:1043px;width:18px;height:18px;background:#f0f0f0;border:1px solid;border-color:#fff #000 #000 #fff"></div>
<div class="a" style="left:18px;top:1043px;width:18px;height:18px;background:#f0f0f0;border:1px solid;border-color:#fff #000 #000 #fff"></div>
<div class="a" style="left:36px;top:1043px;width:18px;height:18px;background:#f0f0f0;border:1px solid;border-color:#fff #000 #000 #fff"></div>
<svg class="a" style="left:0;top:1043px" width="56" height="18" viewBox="0 0 56 18"><path d="M6 4.500l7.500 7.500M13.500 4.500l-7.500 7.500" stroke="#000" stroke-width="1.300"/><path d="M28 5l-3.500 3.500 3.500 3.500z" fill="#000"/><path d="M42 5l3.500 3.500-3.500 3.500z" fill="#000"/></svg>
<svg class="a" style="left:50px;top:1040px" width="280" height="22" viewBox="50 1040 280 22" fill="none" stroke="#000" stroke-width="1"><path d="M54.600 1041.500L62.500 1060H120.400L127.500 1042.500" fill="#fff"/><path d="M122.900 1051.300L126 1060H171.300L175 1051.300"/><path d="M170.800 1043L178.800 1060H239.600L242.700 1051.700"/><path d="M238.500 1043L246.900 1060H313.500L321.900 1043"/></svg>
<div class="t b" style="left:66.500px;top:1046px;font-size:10.8px;letter-spacing:-.1px">Measures</div>
<div class="t" style="left:131.500px;top:1047px;font-size:9.800px;letter-spacing:-.05px">Gamma</div>
<div class="t" style="left:186px;top:1047px;font-size:9.800px;letter-spacing:-.05px">Luminance</div>
<div class="t" style="left:255px;top:1047px;font-size:9.800px;letter-spacing:-.05px">RGB Levels</div>
<div class="a" style="left:1846px;top:1045px;width:11px;height:11px;background:#fff;border:1px solid #555;border-right-color:#d8d8d8;border-bottom-color:#d8d8d8"></div>
<div class="t" style="left:1864.500px;top:1045.500px;font-size:11px">Reference</div>
<svg class="a" style="left:1749px;top:1043px" width="18" height="16" viewBox="0 0 18 16"><path d="M2 2h13v8l-2 4h-3l-1-3-1 3h-3l-3-4z" fill="#6a6a10" stroke="#222" stroke-width=".8"/><rect x="4" y="3" width="8" height="5" fill="#e02020"/><path d="M5 6l5-2" stroke="#fff" stroke-width="1.200"/><circle cx="12" cy="10" r="2.500" fill="#ffe000"/></svg>
<div class="a" style="left:0;top:1062px;width:1920px;height:18px;background:#eaf0fa"></div>
<div class="t" style="left:2px;top:1066.500px;font-size:11.300px">Ready</div>
<div class="a" style="left:1743px;top:1064px;width:74px;height:16px;border-top:1px solid #a0a8b8;border-left:1px solid #a0a8b8"></div>
<div class="a" style="left:1821px;top:1064px;width:27px;height:16px;border-top:1px solid #a0a8b8;border-left:1px solid #a0a8b8"></div>
<div class="a" style="left:1851px;top:1064px;width:33px;height:16px;border-top:1px solid #a0a8b8;border-left:1px solid #a0a8b8"></div>
<div class="a" style="left:1888px;top:1064px;width:32px;height:16px;border-top:1px solid #a0a8b8;border-left:1px solid #a0a8b8"></div>
<div class="t" style="left:1853.500px;top:1066.500px;font-size:12px">NUM</div>
</body></html>
